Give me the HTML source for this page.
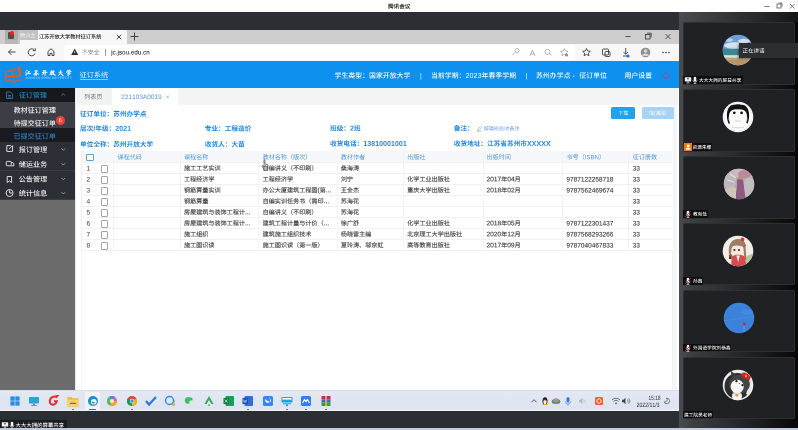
<!DOCTYPE html><html><head><meta charset="utf-8"><title>腾讯会议</title><style>
*{margin:0;padding:0;box-sizing:content-box}
html,body{width:798px;height:430px;overflow:hidden;background:#fff}
body{position:relative;font-family:"Liberation Sans",sans-serif}
div,svg{position:absolute}
.txt{left:0;top:0;width:798px;height:430px;color:transparent;overflow:hidden}.txt span{position:absolute;white-space:nowrap;line-height:1}

</style></head><body>
<div style="left:0px;top:0px;width:798px;height:12px;background:#ffffff;"></div>
<svg style="left:760px;top:0px" width="38" height="12"><g stroke="#555" stroke-width="0.8" fill="none"><path d="M4.5 6.5h5"/><rect x="17" y="4" width="4" height="4"/><path d="M18.5 3h3.5v3.5"/><path d="M30 4l4.5 4.5M34.5 4L30 8.5"/></g></svg>
<div style="left:0px;top:12px;width:679px;height:17.6px;background:#2b2e32;"></div>
<div style="left:0px;top:29.5px;width:679px;height:14px;background:#cdcdcd;"></div>
<div style="left:18px;top:30px;width:109px;height:13.5px;background:#f7f7f7;border-radius:2px 2px 0 0"></div>
<div style="left:5px;top:29.5px;width:33px;height:10.5px;background:rgba(150,150,150,0.55);"></div>
<div style="left:5px;top:40px;width:15px;height:3.5px;background:rgba(170,170,170,0.6);"></div>
<svg style="left:114px;top:32px" width="10" height="10"><path d="M2.8 2.8l4.4 4.4M7.2 2.8l-4.4 4.4" stroke="#333" stroke-width="0.9"/></svg>
<svg style="left:129px;top:31px" width="11" height="11"><path d="M5.5 1.5v8M1.5 5.5h8" stroke="#333" stroke-width="0.9"/></svg>
<div style="left:8px;top:32px;width:6px;height:7px;background:#5a4b4b;border-radius:1px"></div>
<div style="left:10px;top:31px;width:4px;height:4px;background:#f22;border-radius:50%"></div>
<svg style="left:620px;top:30px" width="58" height="13"><g stroke="#333" stroke-width="0.8" fill="none"><path d="M5.5 6.5h5"/><rect x="25.5" y="4.5" width="4.5" height="4.5"/><path d="M27 3.2h4.2v4.2"/><path d="M45.5 4l5 5M50.5 4l-5 5"/></g></svg>
<div style="left:0px;top:43.5px;width:679px;height:17.5px;background:#f7f7f7;"></div>
<div style="left:64px;top:44.5px;width:511px;height:15.5px;background:#ffffff;border-radius:3px"></div>
<svg style="left:0;top:43px" width="160" height="18"><g stroke="#333" stroke-width="0.9" fill="none"><path d="M8.5 9h7M8.5 9l3-3M8.5 9l3 3"/><path d="M34.5 7.2A3.5 3.5 0 1 0 35 10.5"/><path d="M35.3 5.3v2.4h-2.4"/><path d="M48 12.5v-4l3-2.8 3 2.8v4h-2v-2.2h-2v2.2z"/></g><path d="M74.7 5.5l3.6 6.5h-7.2z" fill="#333"/><path d="M74.7 8v2" stroke="#fff" stroke-width="0.7"/></svg>
<div style="left:105px;top:48.5px;width:0.7px;height:7px;background:#999;"></div>
<svg style="left:505px;top:44px" width="175" height="17"><g stroke="#a2a2a2" stroke-width="0.8" fill="none"><circle cx="12" cy="6.5" r="2"/><path d="M10.6 8l-3 3"/><path d="M25 12l2.5-6 2.5 6M26 10h3"/><circle cx="42.5" cy="7.8" r="2.5"/><path d="M44.3 9.6l2 2"/><path d="M59.3 4.5l1.2 2.5 2.6.3-1.9 1.8.5 2.6-2.4-1.3-2.4 1.3.5-2.6-1.9-1.8 2.6-.3z"/></g><g stroke="#333" stroke-width="0.85" fill="none"><path d="M81.5 4.5l1.2 2.5 2.6.3-1.9 1.8.5 2.6-2.4-1.3-2.4 1.3.5-2.6-1.9-1.8 2.6-.3z"/><rect x="97.5" y="5" width="6" height="6" rx="1"/><rect x="100" y="7.5" width="5" height="5" rx="1"/><path d="M120.7 4v6M118.5 8l2.2 2.2 2.2-2.2M118 12h4"/></g><circle cx="123" cy="12" r="1.6" fill="#1a73e8"/><circle cx="158" cy="8.5" r="0.75" fill="#222"/><circle cx="161" cy="8.5" r="0.75" fill="#222"/><circle cx="164" cy="8.5" r="0.75" fill="#222"/><circle cx="140.5" cy="8.5" r="4.8" fill="#8f8f8f"/><circle cx="140.5" cy="7" r="1.8" fill="#d6d6d6"/><path d="M137.2 12a3.3 2.6 0 0 1 6.6 0" fill="#d6d6d6"/><circle cx="61.5" cy="11" r="1.5" fill="#8a8a8a"/></svg>
<div style="left:0px;top:61px;width:679px;height:26.7px;background:#0d90ee;"></div>
<div style="left:79.5px;top:79.3px;width:28.8px;height:0.6px;background:rgba(255,255,255,0.5);"></div>
<svg style="left:659.9px;top:69px" width="12" height="12"><g stroke="#cf3560" stroke-width="0.8" fill="none"><path d="M4.4 4.3A2.8 2.8 0 1 0 7.6 4.3"/><path d="M6 2.6v2.6"/></g></svg>
<svg style="left:2px;top:63px" width="24" height="24" viewBox="0 0 24 24"><g fill="none" stroke="#f05a1e" stroke-width="1.25" stroke-linecap="round" stroke-linejoin="round"><path d="M12.4 5.2c.9.3 1.5 1 1.3 1.9"/><path d="M16.9 3.4c-1.6 2-.4 4 .4 6 .6 2-.3 3.6-1.8 4H4v-4.9c2.2-.6 5-.7 7.2-.4"/><path d="M10.6 9.3c-.6 1.2-.1 2.3 1.5 2.6"/><path d="M3.4 17c.8 1.8 2.4 1.6 3.6.3 1.4-1.6 3.1.4 4.5 2.1 1.2-1 3.2-2.3 6.6-2.4"/><path d="M3.8 13.6c-.6 1.1-.5 2.3-.4 3.2"/></g><path d="M16.8 3c2.6 3 3.2 7.5 1 10.6l-1.4-.4c1.4-2.8.8-6.2.4-10.2z" fill="#f05a1e"/></svg>
<div style="left:0px;top:87.7px;width:75px;height:14px;background:#17181c;"></div>
<div style="left:0px;top:101.6px;width:75px;height:26.8px;background:#3c3e45;"></div>
<div style="left:0px;top:128.4px;width:75px;height:13.2px;background:#1a1b20;"></div>
<div style="left:0px;top:141.6px;width:75px;height:14.6px;background:#2c2f35;"></div>
<div style="left:0px;top:155.7px;width:75px;height:0.7px;background:#3a3d43;"></div>
<div style="left:0px;top:156.2px;width:75px;height:14.6px;background:#2c2f35;"></div>
<div style="left:0px;top:170.29999999999998px;width:75px;height:0.7px;background:#3a3d43;"></div>
<div style="left:0px;top:170.8px;width:75px;height:14.6px;background:#2c2f35;"></div>
<div style="left:0px;top:184.9px;width:75px;height:0.7px;background:#3a3d43;"></div>
<div style="left:0px;top:185.3px;width:75px;height:14.6px;background:#2c2f35;"></div>
<div style="left:0px;top:199.4px;width:75px;height:0.7px;background:#3a3d43;"></div>
<div style="left:0px;top:199.9px;width:75px;height:190.4px;background:#6b6b6b;"></div>
<div style="left:56px;top:115.6px;width:9px;height:9px;border-radius:50%;background:#ee4036"></div>
<svg style="left:0;top:86px" width="75" height="114"><g stroke="#2a7db5" stroke-width="0.9" fill="none"><path d="M6.5 6h4l2.2 2.2v4.3h-6.2z"/><path d="M8 9.5h3M8 11h3"/></g><path d="M61.5 9.5l1.8-1.8 1.8 1.8" stroke="#8a9099" stroke-width="0.7" fill="none"/><g stroke="#e6e6e6" stroke-width="0.95" fill="none"><path d="M12.6 60v5.4h-5.8v-5.8h4"/><path d="M9.2 63l3.6-3.6"/><rect x="6.3" y="75.4" width="5" height="4.4" rx="0.9"/><path d="M11.3 76.6h1.6l1 1.3v1.9h-2.6"/><path d="M7.2 90.5v6l2.2-1.6 2.2 1.6v-6z"/><circle cx="9.6" cy="107" r="3.5"/><path d="M9.6 104v3h2.7"/></g><path d="M61.5 62.5l1.8 1.8 1.8-1.8M61.5 77.3l1.8 1.8 1.8-1.8M61.5 92l1.8 1.8 1.8-1.8M61.5 106.2l1.8 1.8 1.8-1.8" stroke="#c8c8c8" stroke-width="0.7" fill="none"/></svg>
<div style="left:75px;top:87.7px;width:603px;height:302.6px;background:#ffffff;"></div>
<div style="left:75px;top:87.7px;width:603px;height:17.7px;background:#f3f4f6;"></div>
<div style="left:75px;top:87.7px;width:2.3px;height:17.7px;background:#fbfbfc;"></div>
<div style="left:77.3px;top:88px;width:34.2px;height:17.2px;background:#f1f2f4;"></div>
<div style="left:111.5px;top:88px;width:66.8px;height:17.4px;background:#ffffff;"></div>
<div style="left:75px;top:87.7px;width:0.8px;height:302.6px;background:#e6e8ec;"></div>
<div style="left:672.6px;top:105.4px;width:4.4px;height:285px;background:#f5f6f8;"></div>
<svg style="left:475.5px;top:124.5px" width="7" height="7"><path d="M1.5 5.5l.4-1.5 2.5-2.5 1.1 1.1-2.5 2.5zM1.2 6.3h4.5" stroke="#6a9fe0" stroke-width="0.55" fill="none"/></svg>
<div style="left:610.5px;top:107px;width:24.6px;height:12px;background:#1fa2f0;border-radius:1.5px"></div>
<div style="left:641.6px;top:107px;width:32.1px;height:12px;background:#a6d2f6;border-radius:1.5px"></div>
<div style="left:80.8px;top:151.3px;width:591.2px;height:11.2px;background:#f5f7fa;"></div>
<div style="left:112.5px;top:151.3px;width:0.6px;height:99.2px;background:#f2f3f6;"></div>
<div style="left:180.2px;top:151.3px;width:0.6px;height:99.2px;background:#f2f3f6;"></div>
<div style="left:258.2px;top:151.3px;width:0.6px;height:99.2px;background:#f2f3f6;"></div>
<div style="left:337px;top:151.3px;width:0.6px;height:99.2px;background:#f2f3f6;"></div>
<div style="left:402.8px;top:151.3px;width:0.6px;height:99.2px;background:#f2f3f6;"></div>
<div style="left:482.8px;top:151.3px;width:0.6px;height:99.2px;background:#f2f3f6;"></div>
<div style="left:562.4px;top:151.3px;width:0.6px;height:99.2px;background:#f2f3f6;"></div>
<div style="left:628.3px;top:151.3px;width:0.6px;height:99.2px;background:#f2f3f6;"></div>
<div style="left:80.8px;top:151.3px;width:0.6px;height:99.2px;background:#eef0f4;"></div>
<div style="left:80.8px;top:162.2px;width:591.2px;height:0.6px;background:#eff1f4;"></div>
<div style="left:80.8px;top:173.2px;width:591.2px;height:0.6px;background:#eff1f4;"></div>
<div style="left:80.8px;top:184.2px;width:591.2px;height:0.6px;background:#eff1f4;"></div>
<div style="left:80.8px;top:195.2px;width:591.2px;height:0.6px;background:#eff1f4;"></div>
<div style="left:80.8px;top:206.2px;width:591.2px;height:0.6px;background:#eff1f4;"></div>
<div style="left:80.8px;top:217.2px;width:591.2px;height:0.6px;background:#eff1f4;"></div>
<div style="left:80.8px;top:228.2px;width:591.2px;height:0.6px;background:#eff1f4;"></div>
<div style="left:80.8px;top:239.2px;width:591.2px;height:0.6px;background:#eff1f4;"></div>
<div style="left:80.8px;top:250.2px;width:591.2px;height:0.6px;background:#eff1f4;"></div>
<div style="left:86.2px;top:153.9px;width:5.6px;height:5.6px;border:1px solid #5a9fd6;border-radius:1px;background:#fff"></div>
<div style="left:100.6px;top:164.90px;width:5.8px;height:5.8px;border:0.75px solid #a4a4a4;border-radius:1px"></div>
<div style="left:100.6px;top:175.90px;width:5.8px;height:5.8px;border:0.75px solid #a4a4a4;border-radius:1px"></div>
<div style="left:100.6px;top:186.90px;width:5.8px;height:5.8px;border:0.75px solid #a4a4a4;border-radius:1px"></div>
<div style="left:100.6px;top:197.90px;width:5.8px;height:5.8px;border:0.75px solid #a4a4a4;border-radius:1px"></div>
<div style="left:100.6px;top:208.90px;width:5.8px;height:5.8px;border:0.75px solid #a4a4a4;border-radius:1px"></div>
<div style="left:100.6px;top:219.90px;width:5.8px;height:5.8px;border:0.75px solid #a4a4a4;border-radius:1px"></div>
<div style="left:100.6px;top:230.90px;width:5.8px;height:5.8px;border:0.75px solid #a4a4a4;border-radius:1px"></div>
<div style="left:100.6px;top:241.90px;width:5.8px;height:5.8px;border:0.75px solid #a4a4a4;border-radius:1px"></div>
<div style="left:80.8px;top:250px;width:0.6px;height:140px;background:#f4f5f7;"></div>
<div style="left:672px;top:250px;width:0.6px;height:140px;background:#f1f2f4;"></div>
<svg style="left:261px;top:158.5px" width="10" height="12" viewBox="0 0 10 12"><path d="M3 1.2c0-.6.9-.6.9 0v4c.2-.5 1-.5 1 0v.4c.2-.5 1-.5 1 0v.4c.2-.5 1-.4 1 .1v2.8c0 1.3-.7 2.3-1.6 2.3H4.2c-.7 0-1-.4-1.4-1L1 7.2c-.3-.5.3-1 .8-.6L3 7.8z" fill="#fff" stroke="#333" stroke-width="0.6"/></svg>
<div style="left:0px;top:390px;width:679px;height:21.4px;background:linear-gradient(#e3e8f4,#dde3f0 85%,#eef1f8);"></div>
<div style="left:0px;top:390px;width:679px;height:0.5px;background:#d8dce6;"></div>
<div style="left:85.22px;top:392px;width:15px;height:18px;background:rgba(255,255,255,0.55);border-radius:2px"></div>
<svg style="left:9.00px;top:395.20px" width="12" height="12" viewBox="-6.0 -6.0 12 12"><g fill="#2a8ee6"><rect x="-4.6" y="-4.6" width="4.3" height="4.3"/><rect x="0.3" y="-4.6" width="4.3" height="4.3"/><rect x="-4.6" y="0.3" width="4.3" height="4.3"/><rect x="0.3" y="0.3" width="4.3" height="4.3"/></g></svg>
<svg style="left:28.43px;top:395.20px" width="12" height="12" viewBox="-6.0 -6.0 12 12"><rect x="-5" y="-4" width="10" height="6.5" rx="0.6" fill="#2aa3d8"/><rect x="-1" y="2.5" width="2" height="1.5" fill="#6a8aa0"/><rect x="-2.8" y="4" width="5.6" height="0.9" fill="#6a8aa0"/></svg>
<svg style="left:47.86px;top:395.20px" width="12" height="12" viewBox="-6.0 -6.0 12 12"><path d="M3.5-3.5C2-5-3-5-4-1c-1 4 2 5 4 4.5 1.5-.4 2.5-2 2.8-3.3H0" fill="none" stroke="#e0322a" stroke-width="2"/><path d="M2-5l3-1" stroke="#e0322a" stroke-width="1.5"/></svg>
<svg style="left:67.29px;top:395.20px" width="12" height="12" viewBox="-6.0 -6.0 12 12"><path d="M-5.5-4h4l1 1.2h6v8.3h-11z" fill="#f2b83a"/><rect x="-5.5" y="-1.5" width="11" height="6.5" fill="#fcd25a"/><rect x="-3" y="1.8" width="6" height="1.2" fill="#2a7bd6"/></svg>
<div style="left:72.28999999999999px;top:409px;width:2px;height:1px;background:#777;"></div>
<svg style="left:86.72px;top:395.20px" width="12" height="12" viewBox="-6.0 -6.0 12 12"><circle r="5" fill="#1f8ad8"/><circle cx="0.8" cy="0.8" r="2.8" fill="#fff"/><path d="M-5 0a5 5 0 0 0 9 3c-3 2-7 1-8-2z" fill="#2cc2a0"/><path d="M-1.5 0.5a2.2 2.2 0 0 0 4 1" fill="#1f8ad8"/></svg>
<div style="left:89.22px;top:408.8px;width:7px;height:1.3px;background:#1f74d0;border-radius:1px"></div>
<svg style="left:106.15px;top:395.20px" width="12" height="12" viewBox="-6.0 -6.0 12 12"><circle r="5" fill="#f25a9a"/><path d="M0 0L5 0A5 5 0 0 1 -2.5 4.33z" fill="#f5a623"/><path d="M0 0L-2.5 4.33A5 5 0 0 1 -2.5 -4.33z" fill="#4cc35a"/><path d="M0 0L-2.5 -4.33A5 5 0 0 1 2.5 -4.33z" fill="#3a8ef0"/><circle r="2" fill="#fde8f0"/></svg>
<svg style="left:125.58px;top:395.20px" width="12" height="12" viewBox="-6.0 -6.0 12 12"><circle r="5" fill="#db4437"/><path d="M0 0L-4.33 -2.5A5 5 0 0 0 0 5z" fill="#0f9d58"/><path d="M0 0L0 5A5 5 0 0 0 4.33 -2.5z" fill="#f4b400"/><circle r="2.2" fill="#fff"/><circle r="1.7" fill="#4285f4"/></svg>
<div style="left:130.57999999999998px;top:409px;width:2px;height:1px;background:#777;"></div>
<svg style="left:145.01px;top:395.20px" width="12" height="12" viewBox="-6.0 -6.0 12 12"><path d="M-5 0l3 3.5 7-7.5" fill="none" stroke="#2b78e4" stroke-width="2.2"/></svg>
<svg style="left:164.44px;top:395.20px" width="12" height="12" viewBox="-6.0 -6.0 12 12"><circle cx="-0.5" cy="-0.5" r="4" fill="none" stroke="#2b8fe8" stroke-width="1.4"/><circle cx="3.5" cy="3.5" r="1.5" fill="#f0a028"/><circle cx="4" cy="0.5" r="1" fill="#3cc060"/></svg>
<svg style="left:183.87px;top:395.20px" width="12" height="12" viewBox="-6.0 -6.0 12 12"><ellipse cx="-1.2" cy="-0.6" rx="4" ry="3.4" fill="#3ec06a"/><ellipse cx="2.2" cy="1.8" rx="3" ry="2.5" fill="#dfe8e0"/></svg>
<svg style="left:203.30px;top:395.20px" width="12" height="12" viewBox="-6.0 -6.0 12 12"><path d="M0-5l4.5 8h-9z" fill="#39a85a"/><path d="M0-1l2.5 4.5h-5z" fill="#e9f5ec"/><rect x="-0.6" y="3" width="1.2" height="2" fill="#39a85a"/></svg>
<svg style="left:222.73px;top:395.20px" width="12" height="12" viewBox="-6.0 -6.0 12 12"><rect x="-3.5" y="-5" width="8.5" height="10" rx="1" fill="#1f9a57"/><rect x="-5.5" y="-3" width="5.5" height="6" rx="0.6" fill="#107c41"/><path d="M-4.2-1.5l2.8 3M-1.4-1.5l-2.8 3" stroke="#fff" stroke-width="0.7"/></svg>
<svg style="left:242.16px;top:395.20px" width="12" height="12" viewBox="-6.0 -6.0 12 12"><rect x="-3.5" y="-5" width="8.5" height="10" rx="1" fill="#2f6fd4"/><rect x="-5.5" y="-3" width="5.5" height="6" rx="0.6" fill="#1a4fae"/><path d="M-4.6-1.5l.8 3 .9-2.2.9 2.2.8-3" stroke="#fff" stroke-width="0.5" fill="none"/></svg>
<div style="left:247.16px;top:409px;width:2px;height:1px;background:#777;"></div>
<svg style="left:261.59px;top:395.20px" width="12" height="12" viewBox="-6.0 -6.0 12 12"><rect x="-5" y="-5" width="10" height="10" rx="1.6" fill="#3a86f0"/><path d="M-3-2c2 2 4 3 6 2.5 0-2-1-3.5-2-4.5 1.5 2 1.5 4 0 5.5-1.5 1-4 0-4-3.5z" fill="#fff"/></svg>
<svg style="left:281.02px;top:395.20px" width="12" height="12" viewBox="-6.0 -6.0 12 12"><rect x="-5.5" y="-4" width="11" height="5.5" rx="0.8" fill="#1fa3e0"/><rect x="-4.5" y="-3" width="9" height="1.6" fill="#fff"/><rect x="-4" y="2.3" width="8" height="1" fill="#1fa3e0"/><rect x="-1" y="3.3" width="2" height="1.8" fill="#1fa3e0"/></svg>
<div style="left:286.02px;top:409px;width:2px;height:1px;background:#777;"></div>
<svg style="left:300.45px;top:395.20px" width="12" height="12" viewBox="-6.0 -6.0 12 12"><rect x="-5" y="-5" width="10" height="10" rx="1.6" fill="#2e7ff0"/><path d="M-3.5 2l2-3.5 1.5 2 1.5-2 2 3.5" fill="none" stroke="#fff" stroke-width="1.2"/></svg>
<div style="left:305.45px;top:409px;width:2px;height:1px;background:#777;"></div>
<svg style="left:319.88px;top:395.20px" width="12" height="12" viewBox="-6.0 -6.0 12 12"><rect x="-4.5" y="-5" width="9" height="3.4" fill="#c02a6a"/><rect x="-4.5" y="-1.6" width="9" height="3.2" fill="#3a6ad0"/><rect x="-4.5" y="1.6" width="9" height="3.4" fill="#3a9a40"/><rect x="-1" y="-5" width="2" height="10" fill="#d8a838"/></svg>
<div style="left:324.88px;top:409px;width:2px;height:1px;background:#777;"></div>
<svg style="left:528.00px;top:395.20px" width="12" height="12" viewBox="-6.0 -6.0 12 12"><path d="M-2.5 1.2L0-1.3l2.5 2.5" fill="none" stroke="#333" stroke-width="0.8"/></svg>
<svg style="left:538.60px;top:395.20px" width="12" height="12" viewBox="-6.0 -6.0 12 12"><ellipse cy="0" rx="2.5" ry="3.8" fill="#222"/><ellipse cy="1" rx="1.6" ry="2.2" fill="#fff"/><path d="M-2.5 3.5h5" stroke="#e8a020" stroke-width="1"/><path d="M-1.5-1h3" stroke="#e02020" stroke-width="0.8"/></svg>
<svg style="left:549.70px;top:395.20px" width="12" height="12" viewBox="-6.0 -6.0 12 12"><ellipse cx="0" cy="0.5" rx="4.3" ry="2.5" fill="#777"/><ellipse cx="0" cy="-0.8" rx="2.8" ry="2" fill="#999"/></svg>
<svg style="left:561.50px;top:395.20px" width="12" height="12" viewBox="-6.0 -6.0 12 12"><rect x="-1.5" y="-4" width="3" height="5.5" rx="1.5" fill="#3a7ae0"/><path d="M-2.5 0.5a2.5 2.5 0 0 0 5 0M0 3v2" stroke="#3a7ae0" stroke-width="0.6" fill="none"/></svg>
<svg style="left:576.00px;top:395.20px" width="12" height="12" viewBox="-6.0 -6.0 12 12"><path d="M-3-1.2h1.5l2-2v6.4l-2-2H-3z" fill="#b8bcc2"/><path d="M1.5-1.5l2 3M3.5-1.5l-2 3" stroke="#b8bcc2" stroke-width="0.6"/></svg>
<svg style="left:593.00px;top:395.20px" width="12" height="12" viewBox="-6.0 -6.0 12 12"><rect x="-4" y="-4" width="8" height="8" rx="1.5" fill="#f05a28"/><circle r="2.2" fill="none" stroke="#fff" stroke-width="0.9"/></svg>
<svg style="left:609.80px;top:395.20px" width="12" height="12" viewBox="-6.0 -6.0 12 12"><path d="M-4-1a5.5 5.5 0 0 1 8 0M-2.6 0.6a3.4 3.4 0 0 1 5.2 0" fill="none" stroke="#555" stroke-width="0.8"/><circle cy="2.3" r="0.9" fill="#555"/></svg>
<svg style="left:620.20px;top:395.20px" width="12" height="12" viewBox="-6.0 -6.0 12 12"><path d="M-4-1.2h1.5l2-2v6.4l-2-2H-4z" fill="#444"/><path d="M1.3-1.5a2 2 0 0 1 0 3M2.6-2.8a4 4 0 0 1 0 5.6" fill="none" stroke="#444" stroke-width="0.6"/></svg>
<svg style="left:661.00px;top:395.20px" width="12" height="12" viewBox="-6.0 -6.0 12 12"><path d="M-0.5-2.8a2.8 2.8 0 1 1-2.4 3.6 2.2 2.2 0 0 0 2.4-3.6z" fill="none" stroke="#444" stroke-width="0.65"/></svg>
<div style="left:0px;top:411.4px;width:679px;height:18.6px;background:#2b2f33;"></div>
<div style="left:0px;top:419.8px;width:66.5px;height:10.2px;background:#1b1c1f;"></div>
<svg style="left:0.5px;top:420.5px" width="8" height="8" viewBox="0 0 8 8"><rect x="0.8" y="1.2" width="6.4" height="4.2" rx="0.5" fill="#f2f2f2"/><path d="M4 5.4v1.4M2.5 7h3" stroke="#f2f2f2" stroke-width="0.7"/><path d="M4 2.2v2M3 3l1-1 1 1" stroke="#222" stroke-width="0.5" fill="none"/></svg>
<svg style="left:7.5px;top:420.5px" width="8" height="8" viewBox="0 0 8 8"><path d="M4 0.8a1.3 1.3 0 0 1 1.3 1.3v2.2a1.3 1.3 0 0 1-2.6 0v-2.2A1.3 1.3 0 0 1 4 0.8z" fill="#f2f2f2"/><path d="M2 4.2a2 2 0 0 0 4 0M4 6.3v1.2M2.6 7.5h2.8" stroke="#f2f2f2" stroke-width="0.6" fill="none"/></svg>
<div style="left:679px;top:12px;width:119px;height:418px;background:linear-gradient(90deg,#4a4c4f 0,#46484b 4px,#3c3d40 14px,#2a2b2d 45%,#141415 80%,#070707 100%);"></div>
<div style="left:679px;top:12px;width:119px;height:10px;background:linear-gradient(90deg,#4a4d50 0,#3a3c3f 30%,#151617 100%);"></div>
<div style="left:683.2px;top:22px;width:111.8px;height:62.8px;background:#202124;border-radius:2.5px;box-shadow:inset 0 0 0 0.7px #35363a"></div>
<div style="left:683.2px;top:88.9px;width:111.8px;height:62.8px;background:#202124;border-radius:2.5px;box-shadow:inset 0 0 0 0.7px #35363a"></div>
<div style="left:683.2px;top:155.8px;width:111.8px;height:62.8px;background:#202124;border-radius:2.5px;box-shadow:inset 0 0 0 0.7px #35363a"></div>
<div style="left:683.2px;top:222.7px;width:111.8px;height:62.8px;background:#202124;border-radius:2.5px;box-shadow:inset 0 0 0 0.7px #35363a"></div>
<div style="left:683.2px;top:289.6px;width:111.8px;height:62.8px;background:#202124;border-radius:2.5px;box-shadow:inset 0 0 0 0.7px #35363a"></div>
<div style="left:683.2px;top:356.5px;width:111.8px;height:62.8px;background:#202124;border-radius:2.5px;box-shadow:inset 0 0 0 0.7px #35363a"></div>
<svg style="left:721.8px;top:34.4px" width="32" height="32" viewBox="-16 -16 32 32"><defs><clipPath id="c0"><circle r="15.3"/></clipPath></defs><g clip-path="url(#c0)"><rect x="-16" y="-16" width="32" height="32" fill="#6d9fd4"/><ellipse cx="-3" cy="-4.5" rx="11" ry="3.2" fill="#dfe8f1" opacity="0.9"/><ellipse cx="6" cy="-9" rx="6" ry="2.2" fill="#e9eff5" opacity="0.8"/><ellipse cx="-9" cy="-10" rx="4" ry="1.8" fill="#d6e2ee" opacity="0.7"/><ellipse cx="2" cy="-2" rx="12" ry="1.4" fill="#c5d6e5" opacity="0.9"/><rect x="-16" y="-1.2" width="32" height="6.6" fill="#3b878c"/><rect x="-16" y="5.2" width="32" height="2.6" fill="#d5e2df"/><rect x="-16" y="7.8" width="32" height="9" fill="#c3a176"/><rect x="-16" y="10" width="32" height="7" fill="#b89468"/></g></svg>
<svg style="left:722.4px;top:101.30000000000001px" width="32" height="32" viewBox="-16 -16 32 32"><defs><clipPath id="c1"><circle r="15.3"/></clipPath></defs><g clip-path="url(#c1)"><rect x="-16" y="-16" width="32" height="32" fill="#fbfbfb"/><circle r="14.3" fill="none" stroke="#d8d8d8" stroke-width="0.4"/><path d="M-9.3 6.8C-11.6 2-11.8-5.5-9.3-9.3-7-12.4-3.3-12.6 0-12.3 3.3-12.6 7-12.2 9-9.6 11.8-6 11.7 2 9.6 6.5L8.3 6C9.3 2.5 9.4-1.5 8.3-4.3 6.8-7.4 3.3-7.9 0-7.6-3.3-7.9-6.8-7.4-8.3-4.3-9.5-1.5-9.5 2.5-8 6.4z" fill="#111"/><path d="M-2 -12.4c1 1.5 3 1.5 4 0" fill="#111"/><circle cx="-3.7" cy="-4.2" r="1.35" fill="#111"/><circle cx="3.6" cy="-4.1" r="1.35" fill="#111"/><path d="M-2.8 4.1h5.6" stroke="#bdbdbd" stroke-width="0.7"/><path d="M0-2.5v4" stroke="#e2e2e2" stroke-width="0.5"/><path d="M-6 10c3 1 9 1 12 0" stroke="#cfcfcf" stroke-width="0.8" fill="none"/><path d="M-8.5 0c-1 1-1 3 0 4M8.5 0c1 1 1 3 0 4" stroke="#cfcfcf" stroke-width="0.5" fill="none"/></g></svg>
<svg style="left:722.7px;top:168.20000000000002px" width="32" height="32" viewBox="-16 -16 32 32"><defs><clipPath id="c2"><circle r="15.3"/></clipPath></defs><g clip-path="url(#c2)"><rect x="-16" y="-16" width="32" height="32" fill="#b3a9ad"/><rect x="-16" y="-16" width="32" height="9" fill="#c9b9c0"/><ellipse cx="-9" cy="-2" rx="6" ry="9" fill="#bdb8bb"/><ellipse cx="-7" cy="9" rx="8" ry="6" fill="#cfc4b8"/><ellipse cx="10" cy="3" rx="6" ry="10" fill="#c2bcbe"/><ellipse cx="6" cy="-10" rx="7" ry="4" fill="#b98a9e"/><path d="M-2-4c1-2 5-2 6 0l1 7 1 8v6h-9v-8l1-7z" fill="#8e5a84"/><circle cx="1.5" cy="-6.5" r="2.2" fill="#b89080"/><path d="M-9-10l6 4M-12-4l7 2" stroke="#e8e0e2" stroke-width="1.2"/></g></svg>
<svg style="left:722.3px;top:235.1px" width="32" height="32" viewBox="-16 -16 32 32"><defs><clipPath id="c3"><circle r="15.3"/></clipPath></defs><g clip-path="url(#c3)"><rect x="-16" y="-16" width="32" height="32" fill="#f2eee6"/><path d="M6 16l3-11 7-3v14z" fill="#b5c698"/><path d="M-9 3C-10.5-7-5.5-12.5 0.5-12 5-11.6 7.5-9 7.5-5.5L8.5 9 6.5 9 5.3-3.5C3-6.5-3-6.5-6-3.5L-7 3z" fill="#9c7d68"/><ellipse cx="-1.5" cy="-1" rx="5" ry="5.6" fill="#f8e7da"/><path d="M-6.5-4.5c2-3.5 8-3.5 10 0-3-1.5-7-1.5-10 0z" fill="#9c7d68"/><circle cx="-3.6" cy="-1" r="1.1" fill="#3a2a22"/><circle cx="1" cy="-1" r="1.1" fill="#3a2a22"/><path d="M-7 16l.8-10.5c3-2.5 10-2.5 13 0L8.5 16z" fill="#d74c4c"/><path d="M-1.6 4.5h3.4l-1.7 6.5z" fill="#f4f4f4"/><circle cx="-7.5" cy="4.5" r="1.6" fill="#c23838"/><rect x="-9" y="5.5" width="2.5" height="2.5" fill="#333"/><circle cx="4.5" cy="-11.5" r="1.9" fill="#d83a3a"/><circle cx="6.6" cy="-5.5" r="1.1" fill="#d83a3a"/></g></svg>
<svg style="left:722.5px;top:302.0px" width="32" height="32" viewBox="-16 -16 32 32"><defs><clipPath id="c4"><circle r="15.3"/></clipPath></defs><g clip-path="url(#c4)"><rect x="-16" y="-16" width="32" height="32" fill="#3b82db"/><path d="M-16 3l32-5" stroke="#6fa6e8" stroke-width="0.3"/><path d="M5 6v10" stroke="#9cc2ee" stroke-width="0.4"/><circle cx="5.3" cy="6" r="1.3" fill="#e01818"/><ellipse cx="8" cy="-6" rx="6" ry="3" fill="#4a8de0" opacity="0.6"/></g></svg>
<svg style="left:722.4px;top:368.9px" width="32" height="32" viewBox="-16 -16 32 32"><defs><clipPath id="c5"><circle r="15.3"/></clipPath></defs><g clip-path="url(#c5)"><rect x="-16" y="-16" width="32" height="32" fill="#ececec"/><circle cx="-0.5" cy="1" r="13" fill="#2e2e2e"/><path d="M11 -6a13 13 0 0 1 -1 16l-2-1c2-5 2-10 0-14z" fill="#e8e8e8"/><path d="M-6-7l-1.5-7.5 5.5 4.5zM7-8l6-1-2.5 6z" fill="#3c3c3c"/><ellipse cx="1.5" cy="-1" rx="10.5" ry="9.5" fill="#454545"/><ellipse cx="-0.8" cy="1.5" rx="6.6" ry="6.8" fill="#f7f7f7"/><ellipse cx="-1" cy="11" rx="5" ry="5" fill="#f4f4f4"/><ellipse cx="8" cy="-9" rx="4.8" ry="2.6" transform="rotate(30 8 -9)" fill="#d42626"/><circle cx="8" cy="-9" r="1" fill="#f0c040"/><circle cx="-1.5" cy="-3.8" r="1.1" fill="#111"/><circle cx="4.5" cy="0.2" r="1.1" fill="#111"/><circle cx="1.2" cy="-1.5" r="0.5" fill="#333"/><path d="M-6 8c3 1.5 7 1.5 9 0" stroke="#d06060" stroke-width="0.5" fill="none"/><circle cx="-1.2" cy="10.3" r="1.4" fill="#e0a030"/></g></svg>
<div style="left:739px;top:43px;width:59px;height:15px;background:#2c2e31;box-shadow:-1px 1px 2px rgba(0,0,0,0.4)"></div>
<div style="left:683.2px;top:76.1px;width:59.5px;height:7.9px;background:#0e0e0f;"></div>
<svg style="left:684px;top:76.2px" width="8" height="8" viewBox="0 0 8 8"><rect x="0.8" y="1.2" width="6.4" height="4.2" rx="0.5" fill="#f2f2f2"/><path d="M4 5.4v1.4M2.5 7h3" stroke="#f2f2f2" stroke-width="0.7"/><path d="M4 2.2v2M3 3l1-1 1 1" stroke="#222" stroke-width="0.5" fill="none"/></svg>
<svg style="left:691px;top:76.2px" width="8" height="8" viewBox="0 0 8 8"><path d="M4 0.8a1.3 1.3 0 0 1 1.3 1.3v2.2a1.3 1.3 0 0 1-2.6 0v-2.2A1.3 1.3 0 0 1 4 0.8z" fill="#f2f2f2"/><path d="M2 4.2a2 2 0 0 0 4 0M4 6.3v1.2M2.6 7.5h2.8" stroke="#f2f2f2" stroke-width="0.6" fill="none"/></svg>
<div style="left:683.6px;top:143.0px;width:8.4px;height:7.8px;background:#f07a18;"></div>
<svg style="left:683.6px;top:143.0px" width="8.4" height="7.8" viewBox="0 0 8.4 7.8"><circle cx="4.2" cy="2.9" r="1.4" fill="#fff"/><path d="M1.8 6.8a2.4 2.2 0 0 1 4.8 0z" fill="#fff"/></svg>
<div style="left:692px;top:143.0px;width:20px;height:7.8px;background:#0e0e0f;"></div>
<div style="left:683.2px;top:209.9px;width:24.7px;height:7.8px;background:#0e0e0f;"></div>
<svg style="left:684px;top:209.8px" width="8" height="8" viewBox="0 0 8 8"><path d="M4 0.8a1.3 1.3 0 0 1 1.3 1.3v2.2a1.3 1.3 0 0 1-2.6 0v-2.2A1.3 1.3 0 0 1 4 0.8z" fill="#f2f2f2"/><path d="M2 4.2a2 2 0 0 0 4 0M4 6.3v1.2M2.6 7.5h2.8" stroke="#f2f2f2" stroke-width="0.6" fill="none"/><path d="M1 7L7 1" stroke="#e02a2a" stroke-width="0.8"/></svg>
<div style="left:683.2px;top:276.8px;width:20px;height:7.8px;background:#0e0e0f;"></div>
<svg style="left:684px;top:276.7px" width="8" height="8" viewBox="0 0 8 8"><path d="M4 0.8a1.3 1.3 0 0 1 1.3 1.3v2.2a1.3 1.3 0 0 1-2.6 0v-2.2A1.3 1.3 0 0 1 4 0.8z" fill="#f2f2f2"/><path d="M2 4.2a2 2 0 0 0 4 0M4 6.3v1.2M2.6 7.5h2.8" stroke="#f2f2f2" stroke-width="0.6" fill="none"/><path d="M1 7L7 1" stroke="#e02a2a" stroke-width="0.8"/></svg>
<div style="left:683.2px;top:343.70000000000005px;width:47.4px;height:7.8px;background:#0e0e0f;"></div>
<svg style="left:684px;top:343.6px" width="8" height="8" viewBox="0 0 8 8"><path d="M4 0.8a1.3 1.3 0 0 1 1.3 1.3v2.2a1.3 1.3 0 0 1-2.6 0v-2.2A1.3 1.3 0 0 1 4 0.8z" fill="#f2f2f2"/><path d="M2 4.2a2 2 0 0 0 4 0M4 6.3v1.2M2.6 7.5h2.8" stroke="#f2f2f2" stroke-width="0.6" fill="none"/><path d="M1 7L7 1" stroke="#e02a2a" stroke-width="0.8"/></svg>
<div style="left:683.2px;top:411.1px;width:29.4px;height:7.2px;background:#0e0e0f;"></div>
<div style="left:0px;top:428.4px;width:798px;height:1.6px;background:#c3cbdb;"></div>
<div class="txt"><span style="left:388.0px;top:2.8px;font-size:5.6px">腾讯会议</span><span style="left:39.0px;top:33.4px;font-size:5.2px">江苏开放大学教材征订系统</span><span style="left:20.0px;top:32.4px;font-size:5.2px">腾讯会</span><span style="left:82.0px;top:48.5px;font-size:5.8px">不安全</span><span style="left:111.2px;top:48.2px;font-size:6.3px">jc.jsou.edu.cn</span><span style="left:79.5px;top:70.4px;font-size:7.2px">征订系统</span><span style="left:334.5px;top:71.2px;font-size:6.9px">学生类型：国家开放大学</span><span style="left:420.0px;top:71.2px;font-size:6.9px">|</span><span style="left:431.0px;top:71.2px;font-size:6.9px">当前学期：2023年春季学期</span><span style="left:525.5px;top:71.2px;font-size:6.9px">|</span><span style="left:536.0px;top:71.2px;font-size:6.9px">苏州办学点</span><span style="left:572.6px;top:71.2px;font-size:6.9px">-</span><span style="left:579.3px;top:71.2px;font-size:6.9px">征订单位</span><span style="left:624.5px;top:71.2px;font-size:6.9px">用户设置</span><span style="left:24.8px;top:68.6px;font-size:6.6px">江苏开放大学</span><span style="left:25.5px;top:76.0px;font-size:2.9px">JIANGSU OPEN UNIVERSITY</span><span style="left:18.9px;top:90.9px;font-size:7px">征订管理</span><span style="left:13.6px;top:105.9px;font-size:7.05px">教材征订管理</span><span style="left:13.6px;top:118.9px;font-size:7.05px">待提交征订单</span><span style="left:13.6px;top:131.9px;font-size:7.05px">已提交征订单</span><span style="left:18.8px;top:145.2px;font-size:7.1px">报订管理</span><span style="left:18.8px;top:160.0px;font-size:7.1px">储运业务</span><span style="left:18.8px;top:174.7px;font-size:7.1px">公告管理</span><span style="left:18.8px;top:188.8px;font-size:7.1px">统计信息</span><span style="left:58.7px;top:116.7px;font-size:5.6px">6</span><span style="left:84.2px;top:92.9px;font-size:6.1px">列表页</span><span style="left:121.2px;top:92.7px;font-size:6.5px">221103A0019</span><span style="left:165.8px;top:92.7px;font-size:6.5px">×</span><span style="left:80.0px;top:109.7px;font-size:6.65px">征订单位：苏州办学点</span><span style="left:80.0px;top:124.3px;font-size:6.65px">层次/年级：2021</span><span style="left:204.8px;top:124.3px;font-size:6.65px">专业：工程造价</span><span style="left:330.0px;top:124.1px;font-size:6.65px">班级：2班</span><span style="left:453.8px;top:124.1px;font-size:6.65px">备注：</span><span style="left:483.6px;top:125.3px;font-size:5.15px">编辑班级收备注</span><span style="left:80.0px;top:140.1px;font-size:6.65px">单位全称：苏州开放大学</span><span style="left:204.8px;top:140.1px;font-size:6.65px">收货人：大苗</span><span style="left:330.0px;top:139.4px;font-size:6.65px">收货电话：13810001001</span><span style="left:453.8px;top:139.4px;font-size:6.65px">收货地址：江苏省苏州市XXXXX</span><span style="left:618.2px;top:109.8px;font-size:5.1px">下载</span><span style="left:648.8px;top:109.7px;font-size:5.3px">增/减单</span><span style="left:117.5px;top:153.2px;font-size:6.1px">课程代码</span><span style="left:184.0px;top:153.2px;font-size:6.1px">课程名称</span><span style="left:262.6px;top:153.2px;font-size:6.1px">教材名称（版次）</span><span style="left:340.8px;top:153.2px;font-size:6.1px">教材作者</span><span style="left:407.2px;top:153.2px;font-size:6.1px">出版社</span><span style="left:486.5px;top:153.2px;font-size:6.1px">出版时间</span><span style="left:566.4px;top:153.2px;font-size:6.1px">书号（ISBN）</span><span style="left:632.7px;top:153.2px;font-size:6.1px">征订册数</span><span style="left:86.5px;top:164.1px;font-size:6.5px">1</span><span style="left:184.0px;top:164.3px;font-size:6.1px">施工工艺实训</span><span style="left:262.6px;top:164.3px;font-size:6.1px">自编讲义（不印刷）</span><span style="left:340.8px;top:164.3px;font-size:6.1px">桑海涛</span><span style="left:632.7px;top:164.1px;font-size:6.5px">33</span><span style="left:86.5px;top:175.1px;font-size:6.5px">2</span><span style="left:184.0px;top:175.3px;font-size:6.1px">工程经济学</span><span style="left:262.6px;top:175.3px;font-size:6.1px">工程经济学</span><span style="left:340.8px;top:175.3px;font-size:6.1px">刘宁</span><span style="left:407.2px;top:175.3px;font-size:6.1px">化学工业出版社</span><span style="left:486.5px;top:175.3px;font-size:6.1px">2017年04月</span><span style="left:566.4px;top:175.1px;font-size:6.5px">9787122258718</span><span style="left:632.7px;top:175.1px;font-size:6.5px">33</span><span style="left:86.5px;top:186.1px;font-size:6.5px">3</span><span style="left:184.0px;top:186.3px;font-size:6.1px">钢筋算量实训</span><span style="left:262.6px;top:186.3px;font-size:6.1px">办公大厦建筑工程图(第...</span><span style="left:340.8px;top:186.3px;font-size:6.1px">王全杰</span><span style="left:407.2px;top:186.3px;font-size:6.1px">重庆大学出版社</span><span style="left:486.5px;top:186.3px;font-size:6.1px">2018年02月</span><span style="left:566.4px;top:186.1px;font-size:6.5px">9787562469674</span><span style="left:632.7px;top:186.1px;font-size:6.5px">33</span><span style="left:86.5px;top:197.1px;font-size:6.5px">4</span><span style="left:184.0px;top:197.3px;font-size:6.1px">钢筋算量</span><span style="left:262.6px;top:197.3px;font-size:6.1px">自编实训任务书（需印...</span><span style="left:340.8px;top:197.3px;font-size:6.1px">苏海花</span><span style="left:632.7px;top:197.1px;font-size:6.5px">33</span><span style="left:86.5px;top:208.1px;font-size:6.5px">5</span><span style="left:184.0px;top:208.3px;font-size:6.1px">房屋建筑与装饰工程计...</span><span style="left:262.6px;top:208.3px;font-size:6.1px">自编讲义（不印刷）</span><span style="left:340.8px;top:208.3px;font-size:6.1px">苏海花</span><span style="left:632.7px;top:208.1px;font-size:6.5px">33</span><span style="left:86.5px;top:219.1px;font-size:6.5px">6</span><span style="left:184.0px;top:219.3px;font-size:6.1px">房屋建筑与装饰工程计...</span><span style="left:262.6px;top:219.3px;font-size:6.1px">建筑工程计量与计价（...</span><span style="left:340.8px;top:219.3px;font-size:6.1px">徐广舒</span><span style="left:407.2px;top:219.3px;font-size:6.1px">化学工业出版社</span><span style="left:486.5px;top:219.3px;font-size:6.1px">2018年05月</span><span style="left:566.4px;top:219.1px;font-size:6.5px">9787122301437</span><span style="left:632.7px;top:219.1px;font-size:6.5px">33</span><span style="left:86.5px;top:230.1px;font-size:6.5px">7</span><span style="left:184.0px;top:230.3px;font-size:6.1px">施工组织</span><span style="left:262.6px;top:230.3px;font-size:6.1px">建筑施工组织技术</span><span style="left:340.8px;top:230.3px;font-size:6.1px">杨晓雷主编</span><span style="left:407.2px;top:230.3px;font-size:6.1px">北京理工大学出版社</span><span style="left:486.5px;top:230.3px;font-size:6.1px">2020年12月</span><span style="left:566.4px;top:230.1px;font-size:6.5px">9787568293266</span><span style="left:632.7px;top:230.1px;font-size:6.5px">33</span><span style="left:86.5px;top:241.1px;font-size:6.5px">8</span><span style="left:184.0px;top:241.3px;font-size:6.1px">施工图识读</span><span style="left:262.6px;top:241.3px;font-size:6.1px">施工图识读（第一版）</span><span style="left:340.8px;top:241.3px;font-size:6.1px">夏玲涛、邬京虹</span><span style="left:407.2px;top:241.3px;font-size:6.1px">高等教育出版社</span><span style="left:486.5px;top:241.3px;font-size:6.1px">2017年09月</span><span style="left:566.4px;top:241.1px;font-size:6.5px">9787040467833</span><span style="left:632.7px;top:241.1px;font-size:6.5px">33</span><span style="left:648.5px;top:394.0px;font-size:6px">15:18</span><span style="left:636.6px;top:401.0px;font-size:6px">2022/11/3</span><span style="left:15.5px;top:421.8px;font-size:5.4px">大大大拥的屏幕共享</span><span style="left:742.6px;top:47.3px;font-size:5.5px">正在讲话</span><span style="left:699.0px;top:77.3px;font-size:4.7px">大大大拥的屏幕共享</span><span style="left:692.5px;top:144.2px;font-size:4.7px">资源朱娜</span><span style="left:693.0px;top:211.1px;font-size:4.7px">教务处</span><span style="left:693.0px;top:278.0px;font-size:4.7px">孙茜</span><span style="left:693.0px;top:344.9px;font-size:4.7px">外国语学院刘杨鑫</span><span style="left:684.0px;top:412.0px;font-size:4.7px">建工院吴老师</span></div>
<svg style="left:0;top:0;pointer-events:none" width="798" height="430" viewBox="0 0 7980 4300">
<path fill="#2a2a2a" d="M3902 76l0 5 20 0 0-5zm-18-38l0 29-1 10-2 8 5 3 3-18 5 0 0 12-5 0 2 6 5-1 3-1 0-4 0-19 3 3 4-2 0 1 13 0-1 4-7 0 1-3-6 0-1 8 21 0-2 8-7 1 1 5 8 0 2-2 3-7 1-10-8 0 2-7 5 4 4-5-6-4 5 0 0-5-19 0 1-3 17 0 0-5-6 0 3-6-6-2-2 7 3 1-7 0 1-8-5 0-2 8-5 0 3-2-2-6-5 1 2 7-3 0 0 5 8 0-1 3-9 0 0 5 5 0-6 4 0-23zm38 19l2 3-14 0 2-3zm-33-13l5 0 0 6-5 0zm0 13l5 0 0 7-5 0zm52-17l8 10 4-4-8-9zm-3 13l0 6 7 0 0 17-1 3-2 3 3 5 13-12-2-5-5 3 0-20zm18-15l0 7 6 0 0 13-7 0 0 7 7 0 0 22 7 0 0-22 7 0 0-7-7 0 0-13 8 0 0 20 2 15 4 8 4 0 2-3 2-6-4-6-1 8-2-7 0-36zm45 49l34-3 3 4 6-3-12-15-6 3 5 5-20 1 9-9 23 0 0-7-46 0 0 7 13 0-5 6-6 4zm19-52l-7 7-9 7-10 4 4 6 9-4 0 4 26 0 0-4 9 4 5-6-17-8-6-4 2-3zm-9 18l9-8 10 8zm67-15l4 13 6-3-5-12zm-25 2l6 10 6-4-7-9zm40 0l-5 19-4 9-4-8-4-10-2-10-6 1 3 12 3 11 6 9-9 8-6 2 4 6 6-3 9-7 9 7 6 3 4-6-5-3-10-7 6-10 3-11 3-11zm-43 13l0 6 7 0 0 17-1 3-2 4 4 4 13-10-2-6-6 4 0-22zM6489 3999l0-5 8 0 0-31-7 6 0-5 7-6 4 0 0 36 8 0 0 5zm47-14l-1 8-4 5-3 1-6 0-3-1-3-3-2-5 4-1 1 3 3 2 3 1 4-1 2-3 1-6-1-4-4-4-4 0-4 3-4 0 1-22 18 0 0 4-14 0-1 13 2-1 5-2 5 2 4 5zm7-12l0-6 4 0 0 6zm0 26l0-6 4 0 0 6zm12 0l0-5 9 0 0-31-8 6 0-5 8-6 4 0 0 36 8 0 0 5zm48-12l0 4-3 5-5 3-6 0-3-1-4-4-1-7 0-4 3-4 3-2-3-2-2-3 0-7 1-3 3-4 3-1 6 0 2 1 4 4 1 6 0 4-3 3-3 2 5 4zm-5-19l-1-4-2-2-5-1-4 3 0 6 2 4 6 1 3-3zm1 19l-2-6-3-2-4 0-4 4-1 4 1 5 2 2 6 1 3-2 1-1zM6369 4069l0-4 2-4 3-5 10-11 2-3 1-4-1-3-4-4-3 0-3 2-3 5-4 0 0-3 2-3 4-4 5-1 6 1 4 4 1 3 0 8-3 5-11 11-3 5 18 0 0 5zm52-21l-1 12-4 7-3 2-4 0-4 0-3-2-4-7-1-12 1-12 2-4 2-3 3-2 4 0 4 1 3 1 4 7zm-4 0l-1-10-2-5-5-2-4 2-3 5-1 10 1 10 3 5 4 2 4-2 3-5zm9 21l0-4 2-4 4-5 10-11 2-3 0-4 0-3-4-4-4 0-3 2-2 5-5 0 1-3 1-3 4-4 6-1 6 1 4 4 1 3-1 8-3 5-10 11-4 5 18 0 0 5zm29 0l0-4 2-4 3-5 10-11 3-3 0-4-1-3-4-4-3 0-3 2-2 5-5 0 1-3 1-3 4-4 6-1 6 1 3 4 1 3 0 8-3 5-11 11-3 5 18 0 0 5zm26 0l10-44 4 0-10 44zm18 0l0-5 9 0 0-31-8 6 0-5 8-6 5 0 0 36 8 0 0 5zm29 0l0-5 9 0 0-31-8 6 0-5 8-6 4 0 0 36 9 0 0 5zm25 0l10-44 4 0-10 44zm40-12l-1 7-4 4-3 1-4 0-6-1-4-4-2-6 5 0 1 4 2 2 4 1 6-2 1-3 0-5-2-3-4-2-5 0 0-4 7-1 3-3 1-4-2-5-3-2-4 0-4 3-1 4-5 0 2-6 4-4 3-1 6 0 3 1 4 4 1 6-1 4-2 4-4 2 6 3z"/>
<path fill="#222222" d="M395 345l9 6 3-4-9-5zm-3 14l10 6 2-4-9-5zm2 26l4 4 3-6 6-11-3-3zm13-4l0 5 33 0 0-5-14 0 0-31 11 0 0-4-28 0 0 4 11 0 0 31zm46-13l-8 11 4 2 8-11zm-4-8l0 4 14 0-2 9-6 7-9 5 3 4 10-6 6-8 3-11 10 0-1 11-2 9-8 0 1 5 7 0 5-2 2-9 1-9 4 12 5-2-6-11-3 1 0-9-15 0 1-5-5 0-1 5zm26-19l0 5-14 0 0-5-5 0 0 5-11 0 0 4 11 0 0 5 5 0 0-5 14 0 0 5 5 0 0-5 11 0 0-4-11 0 0-5zm52 8l0 14-13 0 0-14zm-30 14l0 4 11 0-1 7-4 6-6 6 4 3 7-6 4-8 2-8 13 0 0 22 5 0 0-22 12 0 0-4-12 0 0-14 10 0 0-5-44 0 0 5 11 0 0 14zm59-21l3 7 4-1-2-7zm21-1l-4 16-4 7 0-4-10 0 0-6 12 0 0-5-23 0 0 5 6 0-1 17-1 8-5 7 4 3 5-8 2-8 1-9 5 0-1 20-6 0 1 5 6 0 3-2 1-4 1-19 3 4 4-6 4 13-7 7-5 3 3 4 5-2 7-7 6 6 4 3 4-4-4-3-7-7 3-6 3-14 4 0 0-5-16 0 2-8zm2 14l8 0-4 15zm42-14l0 14-20 0 0 5 19 0-3 10-7 8-10 7 4 4 10-7 6-8 4-9 5 10 7 8 8 6 4-5-9-5-6-8-5-11 19 0 0-5-21 0 1-14zm52 26l0 3-20 0 0 5 20 0 0 9-9 0 2 5 7 0 4-2 1-4 0-8 21 0 0-5-21 0 0-1 13-8-3-3-26 0 0 5 19 0zm-1-25l3 7-10 0 2-1-5-7-4 2 4 6-8 0 0 11 5 0 0-6 35 0 0 6 4 0 0-11-8 0 5-6-5-2-5 8-8 0 3-1-4-8zm63-1l-4 12-2 6 0-4-4 0 6-12-5-1-3 8 0-4-6 0 0-5-5 0 0 5-6 0 0 4 6 0 0 5-8 0 0 4 12 0-3 3-5 0 0 4-5 3 4 3 8-6 5 0-5 4 0 4-11 1 0 4 11-1 0 7-7 0 2 4 5 0 3-2 1-9 10-1 0-5-10 1 0-2 8-6 3 2 3-5 4 13-7 7-5 3 3 4 5-2 7-7 6 7 3 2 4-4-4-3-6-7 3-6 3-14 3 0 0-5-15 0 2-8zm-16 21l3-3 7 0-3 4-2-1zm-2-12l6 0-3 5-3 0zm27 5l-4 15-4-15zm50-14l0 11-15 0 0 5 13 0-5 7-5 8-7 5 4 4 5-5 10-13 0 21-9 0 2 5 7 0 4-2 1-4 0-26 5 0 0-5-5 0 0-11zm-29 0l0 11-8 0 0 5 8 0-6 13-4 5 3 5 7-14 0 23 5 0 0-25 5 7 3-4-8-9 0-1 7 0 0-5-7 0 0-11zm53 0l-2 4-8 6 3 5 4-4 8-9zm2 11l-4 6-9 8 3 5 5-4 0 22 5 0 0-28 4-7zm8 7l0 24-5 0 0 5 33 0 0-5-12 0 0-15 10 0 0-5-10 0 0-14 11 0 0-4-29 0 0 4 13 0 0 34-7 0 0-24zm35-14l9 9 3-4-8-8zm5 43l14-10-1-5-7 5 0-21-14 0 0 5 9 0 0 17-1 2-2 3zm11-43l0 5 15 0 0 33-10 1 2 5 10-1 2-1 1-5 0-32 9 0 0-5zm45 28l-3 4-8 6 4 3 4-3 8-8zm19 3l12 10 4-3-12-10zm1-14l4 3-20 2 22-14-4-3-8 6-12 1 11-9 18-3-4-4-10 2-26 2 1 4 14 0-8 6-4 2 1 4 13-1-9 5-8 3 2 4 17-2 0 14-8 0 2 5 6-1 4-1 1-4 0-13 12-1 3 5 4-2-10-12zm54 5l0 19 2 2 3 0 7-1 1-3 1-6-4-2-1 7-4 1 0-17zm-10 0l-1 8-2 6-6 4 3 4 7-5 3-7 1-10zm-24 15l1 5 17-7-1-4zm29-40l2 6-12 0 0 5 9 0-7 8-3 1 1 5 23-3 2 4 4-2-8-12-4 2 3 4-12 2 7-9 13 0 0-5-14 0 3-1-3-6zm-28 21l7-1-6 7-2 2 1 5 16-5 0-4-8 2 10-15-5-3-3 6-5 1 8-15-5-2-5 11-3 4-2 2z"/>
<path fill="#f4f4f4" d="M242 332l-3 6 3 1 3-6zm-20 0l2 7 4-2-3-6zm-2 37l0 2 20 0 0-2zm-16-36l0 27-1 9-2 8 3 2 3-18 7 0 0 14-5 0 1 3 4 0 3-1 0-21 3 2 4-3 0 2 14 0-1 5-10 0 1-4-3 0-2 7 21 0-3 10-7 0 1 3 6 1 3-2 2-6 1-9-7 0 2-8 6 4 3-3-4-1-5-5 8 0 0-3-19 0 2-4 15 0 0-3-14 0 2-7-4-1-2 8-10 0 0 3 9 0-2 4-9 0 0 3 7 0-8 7 0-23zm35 16l3 5-17 0 4-5zm-31-12l6 0 0 8-6 0zm0 12l6 0 0 9-7 0zm50-15l7 8 3-2-7-8zm-4 13l0 4 8 0 0 18-1 2-2 3 2 3 11-9-1-4-6 4 0-21zm17-13l0 4 7 0 0 14-8 0 0 4 8 0 0 22 4 0 0-22 8 0 0-4-8 0 0-14 10 0 0 20 1 14 4 7 3 0 1-3 1-7-2-2-1 8-2-6-1-35zm41 44l33-4 3 5 3-2-12-14-3 2 6 6-24 2 11-12 23 0 0-4-43 0 0 4 15 0-7 8-6 5zm18-47l-6 7-8 6-10 5 3 3 9-4 0 3 25 0 0-4-25 0 12-10 8 7 13 8 3-4-8-3-8-5-6-5 2-2z"/>
<path fill="#888888" d="M852 514l20 16 4-3-20-15zm-28-17l0 5 26 0-7 10-10 8-10 7 3 4 7-5 14-12 0 33 4 0 0-39 4-6 19 0 0-5zm78-3l3 6-22 0 0 12 5 0 0-8 38 0 0 8 5 0 0-12-21 0-4-7zm14 26l-2 5-6 7-12-5 5-7zm-21 0l-6 9 15 6-6 3-15 5 3 4 16-6 7-4 18 9 4-3-18-10 3-3 5-10 11 0 0-4-29 0 4-9-5 0-4 9-16 0 0 4zm70-27l-8 9-9 7-10 6 3 4 6-4 0 4 16 0 0 9-15 0 0 4 15 0 0 9-23 0 0 4 50 0 0-4-23 0 0-9 16 0 0-4-16 0 0-9 16 0 0-4 7 4 3-4-9-5-9-6-8-8 1-2zm-17 22l12-10 5-6 6 6 12 10z"/>
<path fill="#1a1a1a" stroke="#1a1a1a" stroke-width="0.4" d="M1116 504l0-6 6 0 0 6zm6 44l-1 5-3 3-8 1 0-5 5 0 1-3 0-38 6 0zm12-21l1 7 3 5 5 1 3-1 3-2 1-3 6 0-2 6-5 3-3 1-7 0-4-1-3-3-3-8 0-10 3-8 3-2 8-2 6 1 2 2 2 2 3 5-6 0-1-3-3-2-6 0-4 2-1 3zm29 17l0-7 6 0 0 7zm16-40l0-6 6 0 0 6zm6 44l-1 5-3 3-8 1 0-5 5 0 1-3 0-38 6 0zm33-13l-1 5-5 3-3 1-11 0-5-3-2-5 5-1 3 4 6 1 6-1 2-4-1-2-2-2-12-4-4-2-2-6 2-5 4-3 7-1 6 1 4 3 3 4-5 1-2-3-2-1-7-1-4 2 0 4 2 3 11 3 4 2 3 3zm35-8l-2 10-2 3-3 3-4 1-9 0-3-1-3-3-3-8-1-5 2-9 5-6 8-2 5 1 3 1 3 2 3 8zm-6 0l-1-7-3-4-2-2-6 0-4 3-2 6 0 8 2 6 2 2 5 1 5-1 3-4zm18-16l0 24 3 4 4 1 5-1 3-4 0-2 1-22 5 0 0 33-5 0 0-6-5 5-3 1-9-1-3-3-1-7 0-22zm31 33l0-7 6 0 0 7zm21-16l1 7 1 2 4 3 7 0 3-2 2-3 4 2-2 4-5 3-6 1-5-1-3-1-3-3-4-8 0-10 4-8 3-2 3-1 5-1 8 2 5 6 1 10zm18-4l-3-7-2-2-4-1-3 0-4 3-1 2-1 5zm33 15l-2 3-4 2-4 1-7-2-4-6-1-10 1-9 4-6 7-2 4 1 4 2 2 3 0-18 6 0 0 46-5 0zm-16-12l0 8 3 4 4 1 6-1 1-2 2-6 0-8-2-6-4-3-5 0-2 2-3 4zm36-16l0 24 3 4 4 1 4-1 3-4 1-2 0-22 6 0 0 33-5 0 0-6-5 5-4 1-8-1-4-3-1-7 0-22zm31 33l0-7 6 0 0 7zm20-17l1 7 3 5 5 1 3-1 3-2 1-3 6 0-3 6-4 3-3 1-8 0-3-1-3-3-3-8 0-10 3-8 3-2 3-1 5-1 6 1 2 2 2 2 2 5-5 0-2-3-2-2-6 0-4 2-1 3zm49 17l-1-25-2-4-4-1-5 2-3 3-1 3 0 22-5 0-1-33 6 0 0 5 4-5 4-1 9 1 3 4 1 7 0 22z"/>
<path fill="#f4f9ff" d="M813 714l-4 5-11 10 3 4 6-5 11-12zm1 16l-4 7-13 13 3 5 8-7 0 32 5 0 0-39 6-9zm11 8l0 35-7 0 0 5 46 0 0-5-18 0 0-23 15 0 0-5-15 0 0-21 16 0 0-5-39 0 0 5 17 0 0 49-10 0 0-35zm50-19l11 12 4-4-11-12zm7 59l18-13-1-5-11 7 0-31-17 0 0 6 12 0 0 25-1 3-3 4zm14-58l0 5 22 0-1 48-1 1-12 0 2 6 14-1 2-2 1-5 0-47 13 0 0-5zm64 38l-5 5-11 9 5 4 5-5 11-11zm25 3l17 15 4-3-17-15zm2-19l6 6-32 2 22-12 10-8-4-3-11 8-18 1 16-13 25-4-4-5-14 3-36 3 1 5 20-1-9 8-8 5 1 5 19-2-14 8-10 4 1 5 25-3 0 20-11 0 2 5 9 0 4-2 1-4 0-19 18-2 5 7 5-3-15-16zm74 7l1 27 2 2 4 1 6 0 3-1 2-4 1-8-5-2-1 9-7 1 0-25zm-13 0l-1 12-4 9-9 6 3 4 10-7 5-10 1-14zm-34 22l1 5 23-8-1-4zm40-56l4 9-18 0 0 5 13 0-10 13-4 2 2 5 31-3 3 5 4-3-10-16-5 3 5 6-20 2 11-14 19 0 0-5-20 0 4-1-3-6-1-3zm-39 29l12-2-10 12-3 2 2 5 22-5-1-5-13 3 15-22-5-3-4 8-9 1 12-22-5-2-8 16-4 6-3 2z"/>
<path fill="#ffffff" d="M3376 755l0 5-27 0 0 6 27 0 0 12-13 1 3 6 10-1 5-2 2-5 0-11 27 0 0-6-27 0 0-2 11-7 5-4-4-3-34 0 0 6 25 0zm-2-32l5 9-14 0 3-1-7-9-5 2 5 8-11 0 0 15 6 0 0-9 47 0 0 9 6 0 0-15-10 0 6-8-7-3-6 11-11 0 4-1-5-11zm56-1l-4 9-4 9-5 7 6 4 7-11 15 0 0 14-20 0 0 7 20 0 0 16-27 0 0 6 62 0 0-6-28 0 0-16 22 0 0-7-22 0 0-14 24 0 0-6-24 0 0-13-7 0 0 13-12 0 3-11zm104 0l-7 10 5 2 9-10zm-39 3l7 9-14 0 0 6 21 0-6 5-8 4-9 2 4 6 9-3 8-5 7-6 0 10 7 0 0-9 23 13 4-6-23-11 23 0 0-6-27 0 0-13-7 0 0 13-11 0 5-2-5-7-2-3zm19 30l-1 6-26 0 0 6 24 0-5 5-8 4-12 3 3 6 14-4 9-5 5-7 7 8 10 5 12 3 4-6-11-2-9-4-6-6 24 0 0-6-28 0 1-6zm81-30l0 23 6 0 0-23zm13-3l0 30-9 1 2 6 10-1 3-3 0-33zm-30 7l0 9-7 0 0-9zm-16 34l0 6 21 0 0 8-28 0 0 6 63 0 0-6-28 0 0-8 21 0 0-6-21 0 0-6-6 0 0-13 7 0 0-6-7 0 0-9 6 0 0-5-31 0 0 5 6 0 0 9-9 0 0 6 8 0-1 4-3 4-5 3 5 5 5-5 4-5 1-6 8 0 0 14 5 0 0 5zm76-17l3-1 2-2 1-2-1-4-2-2-3 0-3 0-2 2-1 4 1 2 2 2zm0 34l3-1 2-2 1-3-1-3-2-2-3-1-3 1-2 2-1 3 1 3 2 2zm93-23l6 8-10 0 0-10 13 0 0-6-13 0 0-8 15 0 0-6-35 0 0 6 14 0 0 8-12 0 0 6 12 0 0 10-15 0 0 5 37 0 0-5-6 0 4-3-4-5-2-2zm-35-33l0 61 6 0 0-3 44 0 0 3 7 0 0-61zm6 51l0-45 44 0 0 45zm86-53l2 5-26 0 0 15 7 0 0-9 45 0 0 9 7 0 0-15-25 0-3-7zm25 24l-14 11-7-10 5-3 16 0 0-6-39 0 0 6 14 0-7 4-17 5 4 5 19-8 3 3-8 5-18 6 3 5 18-7 8-4 1 4-9 6-11 5-11 3 3 6 20-9 9-5 0 4-2 5-3 2-8 0 2 6 6 0 5-1 2-2 3-4 2-7-1-9 2-1 5 9 6 7 8 5 4-5-8-5-5-7-4-8 9-7zm59-15l0 19-18 0 0-19zm-41 19l0 6 16 0-2 9-5 8-9 7 6 5 9-8 6-10 2-11 18 0 0 29 7 0 0-29 15 0 0-6-15 0 0-19 13 0 0-6-58 0 0 6 14 0 0 19zm80-28l3 10 6-2-3-9zm28-1l-3 11-3 11-5 8 0-5-14 0 0-8 16 0 0-6-30 0 0 6 7 0 0 24-3 9-6 10 5 4 7-10 3-12 1-11 7 0 0 14-1 12-2 1-6-1 1 6 8 0 4-2 1-5 2-25 4 5 5-8 6 18-5 5-5 4-6 3 4 6 6-3 9-10 9 9 5 4 4-6-5-3-9-9 4-8 5-19 5 0 0-6-21 0 2-12zm2 19l11 0-3 14-3 6-4-13zm56-19l-1 19-26 0 0 7 25 0-4 12-9 12-13 8 5 6 13-9 9-11 5-12 6 13 9 11 12 8 4-6-11-8-9-11-6-13 25 0 0-7-28 0 1-19zm69 34l0 5-27 0 0 6 27 0 0 12-13 1 3 6 10-1 5-2 2-5 0-11 27 0 0-6-27 0 0-2 11-7 5-4-4-3-34 0 0 6 25 0zm-2-32l5 9-14 0 3-1-7-9-5 2 5 8-11 0 0 15 6 0 0-9 47 0 0 9 6 0 0-15-10 0 6-8-7-3-6 11-11 0 4-1-5-11zM4206 794l0-65 6 0 0 65zM4318 726l8 16 7-2-6-11-3-5zm46-3l-8 18 6 2 9-18zm-46 53l0 6 46 0 0 3 7 0 0-40-23 0 0-24-7 0 0 24-22 0 0 7 45 0 0 8-43 0 0 6 43 0 0 10zm102-32l0 28 6 0 0-28zm14-2l0 36-10 1 2 6 11-1 3-4 0-38zm-6-21l-6 11-20 0 3-2-6-9-6 2 5 9-16 0 0 6 63 0 0-6-16 0 6-9zm-22 38l0 6-13 0 0-6zm0-5l-13 0 0-5 13 0zm-19-11l0 42 6 0 0-15 13 0 0 9-8 0 2 6 10-1 2-1 1-5 0-35zm92 12l0 5-27 0 0 6 27 0 0 12-13 1 3 6 10-1 5-2 2-5 0-11 27 0 0-6-27 0 0-2 11-7 5-4-4-3-34 0 0 6 25 0zm-2-32l5 9-14 0 3-1-7-9-5 2 5 8-11 0 0 15 6 0 0-9 47 0 0 9 6 0 0-15-10 0 6-8-7-3-6 11-11 0 4-1-5-11zm52 46l-3 5-7 7 5 4 8-9 3-5zm10 3l7 11 5-4-7-10zm36-42l0 10-12 0 0-10zm-18-6l-1 36-1 11-4 11 5 3 3-7 3-16 13 0 0 16-9 1 2 6 10-1 2-2 1-5 0-53zm18 22l0 10-12 0 0-10zm-32-24l0 8-11 0 0-8-6 0 0 8-6 0 0 5 6 0 0 28-7 0 0 5 34 0 0-5-4 0 0-28 5 0 0-5-5 0 0-8zm-11 13l11 0 0 6-11 0zm0 11l11 0 0 5-11 0zm0 11l11 0 0 6-11 0zm71-11l3-1 2-2 1-2-1-4-2-2-3 0-3 0-2 2-1 4 1 2 2 2zm0 34l3-1 2-2 1-3-1-3-2-2-3-1-3 1-2 2-1 3 1 3 2 2zm56-1l0-4 2-5 6-7 14-12 3-5 0-4-1-4-3-3-2-1-5 0-4 2-3 4-1 2-6 0 1-4 1-3 6-5 8-1 9 1 5 5 1 3 1 6-1 4-4 6-15 13-5 7 26 0 0 5zm74-25l-2 14-3 5-3 4-4 2-6 1-5-1-4-2-4-4-2-5-1-6 0-16 1-6 2-5 4-4 4-2 6 0 5 0 4 3 4 3 2 5zm-7 0l-1-11-3-7-3-2-3 0-4 0-3 2-3 6-1 12 1 12 3 7 3 1 3 1 4-1 3-2 3-6zm13 25l0-4 3-5 5-7 14-12 3-5 1-4-1-4-3-3-3-1-5 0-4 2-2 4-1 2-6 0 0-4 2-3 6-5 8-1 8 1 6 5 1 3 0 6-1 4-4 6-15 13-5 7 26 0 0 5zm74-14l-2 8-6 5-4 2-5 0-9-2-6-4-2-8 6 0 2 5 4 3 5 1 6-1 2-2 1-2 1-5 0-2-3-4-5-2-7 0 0-6 9-1 4-3 1-5-1-4-3-3-8-1-6 4-1 4-7 0 1-4 5-6 6-3 9 0 4 1 6 5 2 7-2 5-3 4-6 3 7 2 2 2 3 4zm6-2l0 7 32 0 0 15 7 0 0-15 24 0 0-7-24 0 0-12 19 0 0-6-19 0 0-10 21 0 0-6-41 0 3-7-7-1-3 9-6 8-6 6 6 5 10-14 16 0 0 10-21 0 0 18zm18 0l0-12 14 0 0 12zm78-42l0 5-23 0 0 6 21 0-1 4-17 0 0 5 15 0-3 5-18 0 0 5 14 0-10 9-6 4 5 5 9-6 0 22 7 0 0-3 23 0 0 3 7 0 0-22 10 6 4-6-6-3-10-9 15 0 0-5-36 0 2-5 28 0 0-5-26 0 1-4 27 0 0-6-25 0 0-4zm-3 30l16 0 4 5-24 0zm-4 20l23 0 0 6-23 0zm0-5l0-5 23 0 0 5zm99-45l-12 2-32 2 1 6 21-1 0 5-27 0 0 6 21 0-7 5-16 7 5 5 9-5 0 5 24 0-8 4 0 4-28 0 0 5 28 0-1 8-12 0 3 6 9 0 6-2 1-2 0-10 27 0 0-5-27 0 0-2 15-8-4-3-33 0 11-7 4-4 0 9 7 0 0-9 7 6 9 5 9 4 4-5-16-7-6-4 20 0 0-6-27 0 0-6 20-3zm47 34l0 5-27 0 0 6 27 0 0 12-13 1 3 6 10-1 5-2 2-5 0-11 28 0 0-6-28 0 0-2 12-7 4-4-4-3-34 0 0 6 25 0zm-2-32l5 9-14 0 3-1-7-9-5 2 5 8-11 0 0 15 6 0 0-9 47 0 0 9 6 0 0-15-10 0 6-8-7-3-6 11-11 0 4-1-5-11zm52 46l-3 5-7 7 6 4 7-9 3-5zm10 3l7 11 5-4-7-10zm36-42l0 10-12 0 0-10zm-18-6l-1 36-1 11-4 11 5 3 3-7 3-16 13 0 0 16-9 1 2 6 11-1 1-2 1-5 0-53zm18 22l0 10-12 0 0-10zm-32-24l0 8-11 0 0-8-6 0 0 8-6 0 0 5 6 0 0 28-6 0 0 5 34 0 0-5-5 0 0-28 5 0 0-5-5 0 0-8zm-11 13l11 0 0 6-11 0zm0 11l11 0 0 5-11 0zm0 11l11 0 0 6-11 0zM5261 794l0-65 6 0 0 65zM5374 757l-6 10-4 4 6 3 9-15zm-5-11l0 6 19 0-3 12-7 9-13 7 4 5 14-8 8-11 3-14 13 0 0 14-1 8-2 4-1 1-10 0 2 5 9 0 5-1 1-1 2-4 1-7 1-12 6 15 6-2-7-15-5 1 0-12-19 0 0-7-6 0-1 7zm34-25l0 6-17 0 0-6-7 0 0 6-15 0 0 6 15 0 0 7 7 0 0-7 17 0 0 7 7 0 0-7 15 0 0-6-15 0 0-6zm42 1l-1 34-3 13-8 11 4 5 10-13 4-14 0-36zm20 2l0 56 6 0 0-56zm20-2l0 62 6 0 0-62zm-48 16l-4 13-2 6 5 2 3-6 3-14zm15 3l5 18 6-2-6-18zm19 0l7 17 6-2-8-17zm39 4l-6 13-4 5 6 4 4-6 6-14zm41 1l7 22 7-3-8-21zm-27-25l0 12-20 0 0 7 20 0-3 14-6 14-14 12 5 5 15-14 7-16 3-15 12 0-1 19-1 12-2 5-3 1-10 0 2 7 14-1 4-3 2-6 2-14 1-27-20 0 0-12zm74 34l0 5-27 0 0 6 27 0 0 12-13 1 3 6 10-1 5-2 2-5 0-11 27 0 0-6-27 0 0-2 11-7 5-4-4-3-34 0 0 6 25 0zm-2-32l5 9-14 0 3-1-7-9-5 2 5 8-11 0 0 15 6 0 0-9 47 0 0 9 6 0 0-15-10 0 6-8-7-3-6 11-11 0 4-1-5-11zm57 25l34 0 0 11-34 0zm6 22l1 14 7 0-2-14zm14 0l5 14 6-1-5-14zm14 0l9 15 6-3-9-14zm-39-2l-6 10-4 4 6 3 4-4 6-11zm-1-26l0 23 47 0 0-23-21 0 0-8 26 0 0-6-26 0 0-7-6 0 0 21zM5729 764l0-6 17 0 0 6zM5810 721l-4 5-10 9 3 6 6-5 11-12zm1 15l-4 7-12 12 3 6 7-6 0 30 6 0 0-38 6-8zm11 9l0 32-7 0 0 6 45 0 0-6-17 0 0-21 13 0 0-6-13 0 0-18 15 0 0-6-38 0 0 6 16 0 0 45-8 0 0-32zm47-19l11 12 5-5-11-11zm7 58l18-14-2-6-9 7 0-29-18 0 0 7 11 0 0 23 0 3-4 3zm14-57l0 6 20 0 0 44-2 1-11 0 2 7 14-2 2-1 2-6 0-43 12 0 0-6zm57 23l15 0 0 6-15 0zm22 0l15 0 0 6-15 0zm-22-12l15 0 0 6-15 0zm22 0l15 0 0 6-15 0zm10-17l-6 12-16 0 3-2-8-10-5 3 6 9-12 0 0 28 21 0 0 6-27 0 0 6 27 0 0 12 7 0 0-12 28 0 0-6-28 0 0-6 22 0 0-28-11 0 6-9zm46 12l0 6 38 0 0-6zm5 11l4 29 7-2-2-8-3-20zm9-22l3 11 7-2-4-11zm-17 54l0 6 44 0 0-6-13 0 7-33-7-1-6 34zm-3-55l-5 10-5 9-7 8 4 7 6-7 0 37 6 0 0-47 7-15zM6255 726l0 35-3 11-5 9 5 4 4-6 3-7 2-8 16 0 0 20 6 0 0-20 17 0 0 14-2 0-10 0 2 7 10-1 5-2 2-5 0-51zm7 6l15 0 0 10-15 0zm38 0l0 10-17 0 0-10zm-38 16l15 0 0 10-16 0zm38 0l0 10-17 0 0-10zm32-10l34 0 0 12-34 0zm12-16l3 10-22 0-1 26-2 12-6 11 6 4 5-8 3-11 1-10 35 0 0 4 7 0 0-28-22 0 3-2-4-9zm47 4l10 11 5-5-11-10zm-5 16l0 7 9 0 0 23-1 3-3 3 4 6 15-13-2-6-7 6 0-29zm30-19l0 13-3 5-7 4 4 5 8-5 3-7 1-9 11 0 1 15 2 2 4 1 9 0-1-6-7 1-1-1-1-18zm21 34l-2 5-7 7-7-7-3-5zm-28-6l0 6 5 0-2 1 3 6 8 9-6 3-11 3 3 6 13-5 6-3 11 6 7 2 4-6-6-1-11-5 5-6 4-6 4-8-4-2zm88-23l10 0 0 5-10 0zm-15 0l9 0 0 5-9 0zm-16 0l10 0 0 5-10 0zm-2 22l0 28-8 0 0 5 61 0 0-5-9 0 0-28-21 0 1-4 28 0 0-5-27 0 0-3 25 0 0-14-54 0 0 14 23 0-1 3-25 0 0 5 25 0-1 4zm7 28l0-3 31 0 0 3zm0-17l31 0 0 3-31 0zm0-4l0-3 31 0 0 3zm0 11l31 0 0 3-31 0zM616 1210l-2 7-4 4-3 1-8 0-3-1-3-3-3-8 0-12 1-5 2-4 3-3 4-2 4-1 5 1 3 3 3 4-5 1-1-3-3-1-2-1-5 2-3 5-1 8 2-2 3-2 7 0 3 1 4 4zm-5 0l-1-5-1-2-4-2-6 1-4 5 1 7 3 4 2 1 4 0 4-3zM6185 1109l0 4 19 0 0 39 5 0 0-27 16 11 2-4-18-10 0-9 21 0 0-4zm86-1l6 7 3-2-7-6zm5 15l-6 14-2-17 14 0 0-3-14 0 0-11-4 0 0 11-12 0 0-4 9 0 0-3-9 0 0-5-4 0 0 5-10 0 0 3 10 0 0 4-12 0 0 3 28 0 3 21-8 9 3 3 7-8 2 4 3 2 3 1 3-1 1-3 1-6-3-2-1 8-1 0-2 0-3-7 3-5 4-12zm-40 21l1 3 13-1 0 6 4 0 0-6 9-1 0-4-9 1 0-5 8 0 0-3-8 0 0-4-4 0 0 4-7 0 3-6 17 0 0-3-15 0 1-4-3-1-2 5-7 0 0 3 5 0-4 7 1 3 11-1 0 6zM6513 1118l3 7 3-1-4-7zm16-1l-4 7 2 1 4-7zm-39 25l1 4 15-6 0-3-6 2 0-18 6 0 0-3-6 0 0-13-3 0 0 13-6 0 0 3 6 0 0 19zm21-36l4 6 4-1-4-6zm-3 6l0 18 28 0 0-18-7 0 4-6-4-1-4 7zm3 3l9 0 0 12-9 0zm12 0l10 0 0 12-10 0zm-9 29l16 0 0 4-16 0zm0-3l0-5 16 0 0 5zm-3-8l0 20 3 0 0-2 16 0 0 2 4 0 0-20zm30 17l11-39 4 0-11 39zm55-43l7 6 2-2-6-6zm-19 14l0 3 13 0 0-3zm-19-13l7 13 3-2-7-12zm0 41l3 2 3-6 4-12-3-2zm20-21l0 18 3 0 0-3 9 0 0-15zm3 4l6 0 0 8-6 0zm10-27l0 8-20 0 0 22-1 9-4 7 3 3 4-9 2-9 0-19 17 0 2 23-7 8-4 3 3 2 9-9 2 5 2 3 3 1 2 0 2-4 1-6-3-2-1 7-1 1-1-1-3-8 3-5 4-13-3-1-5 14-2-18 11 0 0-4-11 0 0-8zm29 21l13 0 0 6-13 0zm17 0l13 0 0 6-13 0zm-17-9l13 0 0 6-13 0zm17 0l13 0 0 6-13 0zm9-12l-5 9-13 0 2-1-5-8-4 1 5 8-9 0 0 21 16 0 0 5-21 0 0 4 21 0 0 9 4 0 0-9 22 0 0-4-22 0 0-5 17 0 0-21-9 0 6-8zM179 4225l0 15-21 0 0 5 20 0-4 10-6 9-11 7 4 4 10-7 7-9 4-9 5 10 7 9 9 6 4-5-9-6-7-8-5-11 20 0 0-5-22 0 1-15zm54 0l0 15-21 0 0 5 20 0-4 10-6 9-11 7 4 4 10-7 7-9 4-9 5 10 7 9 9 6 4-5-9-6-7-8-5-11 20 0 0-5-22 0 1-15zm54 0l0 15-21 0 0 5 20 0-4 10-6 9-11 7 4 4 10-7 7-9 4-9 5 10 7 9 9 6 4-5-9-6-7-8-5-11 20 0 0-5-22 0 1-15zm51 3l0 28-2 8-4 8 4 3 3-5 3-12 8 0 0 16 5 0 0-16 8 0 0 12-6 0 1 5 8-1 1-1 1-4 0-41zm5 5l7 0 0 8-7 0zm20 0l0 8-8 0 0-8zm-20 13l7 0 0 7-7 0zm20 0l0 7-8 0 0-7zm-37-21l0 11-7 0 0 4 7 0 0 11-8 2 2 5 6-2-1 13-5 1 1 5 6-1 3-1 0-4 0-14 6-2 0-5-6 2 0-10 6 0 0-4-6 0 0-11zm74 23l8 13 5-3-9-12zm3-23l-5 13-3 6 0-10-9 0 3-8-6-1-1 9-7 0 0 40 5 0 0-5 15 0 0-25 4 3 5-9 13 0-2 27-2 4-10 0 2 5 8 0 5-2 2-5 1-12 0-22-15 0 2-7zm-23 13l10 0 0 10-10 0zm0 27l0-12 10 0 0 12zm57-33l31 0 0 4-31 0zm-5-5l0 28-2 9-4 8 5 3 4-9 2-10 0-15 37 0 0-14zm32 14l-3 6-14 0 4-1-2-5-5 1 3 5-8 0 0 5 8 0 0 6-9 0 0 5 8 0-4 6-5 2 3 4 6-3 4-5 1-4 10 0 0 12 6 0 0-12 9 0 0-5-9 0 0-6 8 0 0-5-9 0 4-5zm-3 17l-9 0 0-6 9 0zm32-14l27 0 0 3-27 0zm0-5l27 0 0 2-27 0zm10 18l0 3-8 0 3-3zm5 0l6 0 3 3-9 0zm-20-22l0 16 9 0-1 2-14 0 0 4 10 0-12 7 3 3 7-3 0 9 5 0 0-8 8 0 0 10 5 0 0-10 9 0 0 4-5 0 1 4 6 0 3-1 0-1 0-7 7 3 3-4-9-3-3-3 10 0 0-4-29 0 2-2 22 0 0-16zm24-10l0 3-13 0 0-3-5 0 0 3-12 0 0 4 12 0 0 2 5 0 0-2 13 0 0 2 5 0 0-2 13 0 0-4-13 0 0-3zm52 38l15 12 5-3-15-12zm-14-3l-4 4-10 7 4 4 6-4 10-9zm-12-24l0 5 10 0 0 12-13 0 0 5 50 0 0-5-13 0 0-12 11 0 0-5-11 0 0-11-5 0 0 11-14 0 0-11-5 0 0 11zm15 17l0-12 14 0 0 12zm49-13l24 0 0 4-24 0zm-5-3l0 11 34 0 0-11zm14 21l0 3-21 0 0 4 21 0 0 6-9 0 1 4 8 0 4-1 1-2 1-7 21 0 0-4-21 0 0-1 16-6-3-3-35 0 0 4 25 0zm-1-33l1 4-21 0 0 5 47 0 0-5-20 0-2-4zM7436 499l0 26-7 0 0 4 49 0 0-4-21 0 0-18 17 0 0-4-17 0 0-14 19 0 0-4-45 0 0 4 22 0 0 36-12 0 0-26zm67-18l-3 8-16 0 0 4 14 0-9 13-6 5 2 4 7-6 0 22 4 0 0-26 6-12 31 0 0-4-29 0 3-7zm11 15l0 11-12 0 0 4 12 0 0 15-15 0 0 4 34 0 0-4-15 0 0-15 13 0 0-4-13 0 0-11zm28-12l8 9 3-3-8-8zm-4 14l0 4 8 0 0 19-1 2-2 3 3 4 11-9-2-4-5 4 0-23zm39-3l0 13-10 0 0-13zm-14-14l0 10-7 0 0 4 7 0 0 11 0 2-9 0 0 4 9 0-1 6-3 6-4 5 3 2 5-5 3-6 1-8 10 0 0 19 4 0 0-19 8 0 0-4-8 0 0-13 7 0 0-4-7 0 0-10-4 0 0 10-10 0 0-10zm33 4l8 8 3-3-8-8zm18 26l0 20 4 0 0-2 18 0 0 2 5 0 0-20-12 0 0-9 15 0 0-4-15 0 0-11 12-3-3-3-27 5 1 3 13-1 0 10-14 0 0 4 14 0 0 9zm4 14l0-10 18 0 0 10zm-25-27l0 4 8 0 0 19 0 3-3 3 3 3 11-10-1-3-6 4 0-23zM7011 779l-1 13-17 0 0 5 17 0-3 8-6 8-9 6 3 4 9-6 6-8 4-8 4 9 6 7 8 6 3-4-8-6-6-7-4-9 17 0 0-5-19 0 1-13zm47 0l-1 13-17 0 0 5 17 0-3 8-6 8-9 6 3 4 9-6 6-8 4-8 4 9 6 7 8 6 3-4-8-6-6-7-4-9 17 0 0-5-19 0 1-13zm47 0l-1 13-17 0 0 5 17 0-3 8-6 8-9 6 3 4 9-6 6-8 4-8 4 9 6 7 8 6 3-4-8-6-6-7-4-9 17 0 0-5-19 0 1-13zm44 3l0 24-1 8-4 6 4 3 2-5 3-10 7 0 0 14 4 0 0-14 7 0 0 10-6 1 2 4 6-1 1-1 1-3 0-36zm4 4l7 0 0 7-7 0zm18 0l0 7-7 0 0-7zm-18 11l7 0 0 7-7 0zm18 0l0 7-7 0 0-7zm-33-18l0 9-5 0 0 5 5 0 0 9-6 2 1 4 5-2 0 12-5 0 2 4 4 0 3-1 1-16 5-2-1-4-4 2 0-8 5 0 0-5-5 0 0-9zm66 20l7 11 3-2-7-11zm2-20l-4 12-3 5 0-9-8 0 3-7-5-1-2 8-5 0 0 35 4 0 0-4 13 0 0-22 3 3 5-8 11 0-2 23-2 4-8 0 1 4 8 0 4-2 1-5 1-9 1-19-14 0 2-7zm-20 12l9 0 0 9-9 0zm0 23l0-11 9 0 0 11zm50-29l27 0 0 4-27 0zm-5-4l0 24-2 8-3 8 4 2 4-8 1-9 1-13 31 0 0-12zm28 12l-2 6-13 0 4-2-3-4-4 1 3 5-7 0 0 4 7 0 0 5-8 0 0 4 7 0-4 5-4 3 3 3 6-3 2-4 2-4 9 0 0 11 4 0 0-11 9 0 0-4-9 0 0-5 7 0 0-4-7 0 3-5zm-2 15l-9 0 0-5 9 0zm27-12l23 0 0 3-23 0zm0-5l23 0 0 3-23 0zm9 16l0 3-7 0 3-3zm4 0l6 0 2 3-8 0zm-17-19l0 14 8 0-2 2-12 0 0 3 9 0-10 6 3 3 6-3 0 8 4 0 0-7 7 0 0 9 4 0 0-9 8 0 0 4-4 0 1 3 5 0 3-2 0-6 5 3 3-4-11-5 10 0 0-3-26 0 2-2 19 0 0-14zm21-9l0 3-11 0 0-3-5 0 0 3-10 0 0 3 10 0 0 2 5 0 0-2 11 0 0 2 4 0 0-2 11 0 0-3-11 0 0-3zm45 33l13 11 4-3-13-10zm-12-2l-3 3-9 7 3 3 5-3 9-8zm-11-21l0 4 9 0 0 10-11 0 0 5 43 0 0-5-11 0 0-10 9 0 0-4-9 0 0-9-4 0 0 9-13 0 0-9-4 0 0 9zm13 14l0-10 13 0 0 10zm43-10l21 0 0 3-21 0zm-4-4l0 10 30 0 0-10zm12 19l0 2-19 0 0 4 19 0 0 5-8 0 1 4 7 0 4-1 1-2 0-6 19 0 0-4-19 0 14-6-3-2-30 0 0 3 22 0zm-1-28l1 3-18 0 0 4 41 0 0-4-18 0-2-4zM6929 1453l9 5 3-4-10-4zm-2 11l2 4 13-4-1-4zm6 6l0 13 5 0 0-9 22 0 0 9 4 0 0-13zm14 6l-3 6-6 4-11 2 2 4 12-3 7-6 3-7zm2 9l18 7 2-4-17-6zm-2-37l-4 7-3 3 3 3 5-5 5 0-2 4-4 4-7 3 3 3 5-2 4-3 3-4 3 4 9 4 3-3-6-2-4-3-3-3 0-2 6 0-2 4 4 1 4-8-3-1-16 0 2-3zm51 21l13 0 0 4-13 0zm0-6l13 0 0 3-13 0zm-2 15l-6 9 4 2 6-10zm13 1l5 10 4-2-5-9zm-33-27l8 5 2-4-8-4zm-2 12l7 5 3-3-8-5zm0 25l4 2 3-5 4-10-4-2zm14-38l-1 21-1 9-4 8 4 3 4-9 2-10 0-18 25 0 0-4zm14 4l-1 4-7 0 0 17 8 0 0 12-5 0 1 4 5 0 3-2 1-14 8 0 0-17-10 0 2-3zm28-6l-4 11-3 4 4 2 4-6 9 0 0 8-18 0 0 4 15 0-10 10-7 3 4 4 11-8 5-6 0 17 5 0 0-17 11 10 6 4 3-4-6-3-11-10 15 0 0-4-18 0 0-8 15 0 0-4-15 0 0-8-5 0 0 8-7 0 2-6zm62 5l0 7-3 0 0-7zm-10 19l0 3 3 0-3 9-3 4 3 3 3-5 3-11 4 0-1 11 0 1-4 0 1 4 4 0 3-2 1-5 0-35-14 0 0 4 3 0 0 7-3 0 0 4 3 0 0 2 0 6zm10-8l0 8-3 0 0-8zm6-15l0 42 4 0 0-38 5 0-4 13 4 7 0 5-1 2-3 0 1 4 3 0 2-1 1-3 0-7-3-8 4-14-3-2zm-23 12l3 0-3 14-3-2zm-7 13l6 5-4 6-2 2 2 3 6-8 2 3 3-3-3-4 2-6 1-15-6 0 1-10-3 0-1 10-4 0 0 4 3 0zM6959 2117l-4 16 0-3-4 0 5-11-4-1-3 7 0-3-5 0 0-5-5 0 0 5-5 0 0 4 5 0 0 4-7 0 0 4 11 0-3 3-4 0 0 3-5 2 3 4 8-6 4 0-5 4 0 3-9 1 0 4 9-1 0 6-5 0 1 4 5 0 3-2 1-9 9 0 0-4-9 1 0-2 6-6 3 2 3-4 4 11-7 7-4 2 3 4 4-2 6-7 5 7 4 2 3-4-4-2-5-7 2-5 3-13 3 0 0-4-13 0 2-8zm-13 20l2-3 6 0-2 4-2-2zm-2-11l5 0-3 4-2 0zm24 4l-4 13-3-13zm29 9l0 4-14 0 0 4 12 0-3 5-6 3-6 2 2 4 8-3 6-5 4-6 13 0-2 9-10 0 1 4 10 0 2-1 3-7 1-9-17 0 1-4zm14-13l-10 6-9-6zm-16-9l-8 8-6 4 3 3 6-3 6 4-17 3 2 4 20-4 6 2 13 2 2-4-16-2 9-7 3-4-2-1-20 0 3-4zm48 12l-4 15-4-12 1-3zm-9-12l-5 17-3 7 4 2 3-5 4 10-3 4-9 5 4 4 8-5 3-4 6 5 7 2 15 1 2-5-16-1-6-2-6-4 5-14 1-9-3-1-8 1 2-7zm18 0l0 35 5 0 0-19 7 11 4-3-10-13-1 1 0-12zM6966 2798l5 20 5-1-6-20zm-6-12l0 38-1 1-6 0 2 5 7-1 2-2 0-41zm-7 11l-3 14-2 6 3 2 3-6 3-15zm-21 14l1 4 5-2 0 13-4 0 1 4 4-1 3-1 1-17 5-2 0-4-5 2 0-5 8-11-3-2-15 0 0 4 11 0-6 8 0 7zm71-8l0 4-6 0 0-4zm-21 4l0 23 4 0 0-3 29 0 0 3 5 0 0-23-13 0 0-4 14 0 0-4-41 0 0 4 13 0 0 4zm4 16l0-5 3 3 5-3 3-4 0-4 6 0 0 7 2 1 10 1 0 4zm21-13l8 0 0 5-7 0zm-21 8l0-8 7 0 0 3-2 3zm20-32l0 4-12 0 0-4-4 0 0 4-10 0 0 4 10 0 0 4 4 0 0-4 12 0 0 4 5 0 0-4 10 0 0-4-10 0 0-4zM6940 3455l-5 15-3 6 3 3 7-13 8 0-3 12-7-4-2 3 7 5-4 6-9 7 3 3 9-7 7-12 4-16-3-1-9 0 2-6zm18 0l0 44 5 0 0-25 9 9 4-3-11-11-2 2 0-16zm47 25l4 5-7 0 0-7 9 0 0-4-9 0 0-5 10 0 0-4-23 0 0 4 9 0 0 5-8 0 0 4 8 0 0 7-10 0 0 4 25 0 0-4-4 0 3-2-3-3-2-2zm-24-23l0 42 4 0 0-3 30 0 0 3 5 0 0-42zm4 35l0-31 30 0 0 31zm43-33l7 7 3-3-7-7zm14 6l0 4 6 0-1 6-8 0 0 4 30 0 0-4-5 0 1-10-12 0 1-4 14 0 0-4-27 0 0 4 9 0-1 4zm9 10l1-6 8 0 0 6zm-8 7l0 17 4 0 0-2 15 0 0 2 4 0 0-17zm4 11l0-7 15 0 0 7zm-15 5l11-8-2-4-5 4 0-20-10 0 0 4 6 0 0 16-2 4zm60-19l0 3-18 0 0 4 18 0 0 8-9 0 2 5 7-1 4-1 1-3 0-8 19 0 0-4-19 0 0-2 11-7-3-2-23 0 0 4 17 0zm-1-23l3 7-9 0 1-1-4-6-4 1 4 6-8 0 0 10 5 0 0-6 31 0 0 6 5 0 0-10-8 0 5-6-5-2-4 8-7 0 2-1-3-7zm54 0l3 5-12 0 0 9 4 0 0 3 19 0 0-3 4 0 0-9-11 0-2-6zm-5 13l0-4 19 0 0 4zm-4 9l0 4 6 0-1 6-3 4-6 3 3 4 7-4 3-6 2-7 4 0 0 11 0 3 2 2 6 0 3 0 1-3 1-5-4-1-1 5-4 0 0-12 8 0 0-4zm-15-21l0 42 4 0 0-38 6 0-4 10 4 7 0 4-1 2-4 0 1 4 4 0 3-3 1-2 0-5-4-7 5-12-3-2zm73 4l0 25 4 0 0-25zm10-5l0 37-1 1-7 0 2 5 8-1 2-2 0-40zm-29 1l3 6-11 0 0 4 16 0-3 11-8-8-3 3 9 10-7 9-4 3 3 4 4-4 7-9 5 8 4-3-7-9 5-15 3 0 0-4-11 0 3-2-4-6zm45-2l0 9-6 0 0 4 6 0-4 13-3 4 3 5 4-11 0 20 4 0 0-24 3 6 3-3-6-10 5 0 0-4-5 0 0-9zm12 20l5-1-2 5-8 7 4 3 8-9 2-6 5 0-4 9-6 8-7 5 4 3 7-6 6-9 4-10 2 0-1 11-2 9-1 0-5 0 1 4 8-1 3-4 2-23-18 0 14-11-3-2-20 0 0 5 14 0-9 6-5 3zm32 16l2 4 2-1-1-4zm19-36l-6 3-15 5 2 3 9-3 0 2 7 0 0 2-12 0 0 3 12 0 0 3-3 0-2-3-3 1 1 2-8 0 0 3 7 0-3 2-8 4 2 3 2-1 0 1 5 0 0 2-8 0 0 3 8 0 0 4-9 1 1 3 18-2 0-3-2 1 1-4-3 0-1 4-2 0 0-4 7 0 0-3-7 0 0-2 5 0 0-2 1 1 2-3-8-5 19 0-3 2-8 4 2 3 2-1 0 1 5 0 0 2-8 0 0 3 8 0 0 4-4 0 2 0-2-4-3 1 2 3-3 0 0 4 22 0 0-4-5 0 2-3-3-1-2 4-2 0 0-4 9 0 0-3-9 0 0-2 5 0 0-2 3 1 2-2-6-3-4-1 1-1-2-1 8 0 0-3-9 0 2-2-4-1 7 0 0-3-12 0 0-2 7 0 0-2 9 3 2-4-17-5zm-7 7l6-3 7 3zm14 8l-2 3-3 0 0-3zm-22 12l4-3 5 3zm20 0l4-2 5 2zM6858 4130l0 3 9 0 0 3-11 0 0 4 11 0 0 3-9 0 0 3 9 0 0 3-9 0 0 4 9 0 0 3-11 0 0 3 11 0 0 4 4 0 0-4 13 0 0-3-13 0 0-3 11 0 0-4-11 0 0-3 11 0 0-6 2 0 0-4-2 0 0-6-11 0 0-4-4 0 0 4zm13 10l7 0 0 3-7 0zm0-4l0-3 7 0 0 3zm-27 12l3-2 5 0-3 10-3-6-3 1 4 9-5 7 3 3 5-7 6 4 6 1 22 1 1-4-22-1-6-1-5-3 4-17-6-1 6-12-3-2-10 1 0 4 7 0-4 9-3 3zm45 14l0 4 43 0 0-4-19 0 0-26 16 0 0-5-37 0 0 5 16 0 0 26zm72-35l3 5-12 0 0 9 4 0 0 3 19 0 0-3 4 0 0-9-11 0-2-6zm-5 13l0-4 19 0 0 4zm-4 9l0 4 6 0-1 6-3 4-6 3 3 4 7-4 3-6 2-7 4 0 0 11 0 3 2 2 6 0 3 0 1-3 1-5-4-1-1 5-4 0 0-12 8 0 0-4zm-15-21l0 42 4 0 0-38 6 0-4 10 4 7 0 4-1 2-4 0 1 4 4 0 3-3 1-2 0-5-4-7 5-12-3-2zm56 4l23 0 0 6-23 0zm-4-4l0 14 31 0 0-14zm-3 18l0 4 16 0-1 4-18 0 0 4 17 0-3 4-6 2-8 2 2 4 10-3 6-3 4-6 4 6 6 4 8 2 3-4-8-1-6-3-3-4 16 0 0-4-19 0 0-4 17 0 0-4zm81-18l-6 7 0-3-11 0 0-6-4 0 0 6-12 0 0 4 12 0 0 6-16 0 0 4 18 0-19 10 3 4 11-5 0 12 3 2 17 0 5-1 2-2 1-5-4-2-2 6-16 0-2-2 0-4 20-6-4-3-16 6 0-4 8-6 18 0 0-4-13 0 11-12zm-17 14l0-6 10 0-6 6zm37-16l-1 27-2 7-5 7 4 3 5-7 2-9 1-28zm-8 6l0 22 4 0 0-22zm15 6l0 25 5 0 0-21 5 0 0 28 4 0 0-28 6 0 0 16-4 1 1 4 6-1 1-4 0-20-10 0 0-5 12 0 0-4-27 0 0 4 11 0 0 5z"/>
<path fill="#ffffff" stroke="#ffffff" stroke-width="4" d="M271 726l-7 16-2 6 2 4-3 2-2 0-5-5 1-2 15-21zm-16-8l6 2 0 4-3 1-2-1-4-5 1-1zm40-6l3 1 0 3-2 2-6 0 0 15 16 1 4 2-1 4-2 1-5-1-11-1-11 1-7 3-2-1-2-2 0-2 13-3 1-3 1-12-5-1-2-2 6-3zm-23-9l2 1 0 3-2 2-2 1-4-4-2-5 4 0zm102 30l7 1 7 5-1 5-1 2-2 0-3-2-6-8zm-30 0l1 5-1 4-2 3-4 1-1-6 5-8zm9-30l3 10 0 3-1 2-1 1-2-5-3 1-2-1 1-2 3-2-1-7zm15-4l4 3 0 3-2 4 7 0 1 1-2 3-7 0-6 7 0 5 7 2 3 3-4 19-3 5-6 3-2-2-4-7 1-1 5 2 4-6 2-11-1-2-3-1-10 16-12 10 1-3 8-10 6-12-2 0-4 2-1-2 2-2 7-3 1-4 6-8 3-12zm84 11l2 3 0 7 15 0 4 3-1 4-3 1-5-2-9 0-2 24-2 6-2 0-1-6 0-24-8 0-1 7-4 7-7 8-4 3-2 1 9-15 3-9-11 2-2-1-1-3 14-4 1-6 2-2 2 2 1 5 8 0 0-9 2-2zm5-6l2 2 0 3-17 1-5 1-2 1-4-1-1-3 5-2zm55 2l4 2 2 2 0 3-1 2-5-1 1-2-2-5zm20-5l2 2 1 2-2 10 7-2 4 1 0 2-1 4-8 1 3 3 1 2-1 4-1 7 6 5 12 7 2 2 0 1-9 3-9-6-7-7-4 4-7 3-4 1-2 0 10-7 5-6-5-11-3 3 0 4-2 6-6 9-5 2-4-8 1-1 5 2 1-1 5-11-3-1-14 14-6 3 14-16 5-10-7 2-4 3-2-2-1-2 1-1 14-5 9-1 3 1 4-15 1-1zm1 18l-1-1-3 6 2 5 2 2 2-9zm-18 2l-1 0 3 3-1 4 4 0 5-8zm92-16l1 1-1 13 10-1 3 1 3 3 0 2-2 1-7-2-7-1 1 6 1 2 4 5 8 9 15 10-12 3-3-1-7-8-9-14-4 7-5 6-8 5-7 3 8-7 6-8 4-6 1-7 0-4-6 2-3 2-3-1-1-3 14-3 1-17 3 0zm87 14l1 2 0 3-5 5 2 2 14 0 1 2 0 2-1 1-13 0 1 7-2 8-6 6-3 1-8-9 8 2 3-6 1-8-13 3-3-1-1-2 3-2 13-3-2 0 1-4 1-1 3-5-10 2-1-1 0-2 11-3zm-17-15l1 4 0 2-1 0-4-2-1-5 2-1zm5-5l3 1 2 2 0 5-2 0-2-2zm19 0l0 5-7 6 17 3 2 3-1 3-9 1 1-4-2-1-13-1-7 0-7 2-5 2-2 9-1 1-2 0-1-6 4-8 19-4 7-8 2-5 2 0z"/>
<path fill="#eaf4fd" d="M261 788l-2 0-2-2-2-3 3 0 1 1 2 2 3-1 1-3 0-12-4 0 0-2 6 0 0 16-2 4zm14 0l0-20 3 0 0 20zm25 0l-2-6-9 0-3 6-2 0 8-20 3 0 8 20zm-7-18l-3 10 7 0zm28 18l-10-17 0 17-3 0 0-20 3 0 11 17 0-17 2 0 0 20zm10-10l1-6 4-3 5-1 4 0 3 2 2 2-3 1-1-2-3-1-6 1-2 3-1 6 3 5 6 1 5-2 0-4-6 0 0-2 8 0 0 7-5 3-7 0-5-3-1-3zm42 5l-1 3-4 2-7 0-3-2-1-3 2 0 2 2 4 1 4-1 2-2-2-3-10-3-1-3 1-4 2-2 4 0 4 0 3 2 1 2-3 1-1-2-5-1-3 1-1 3 2 2 9 3zm15 5l-5-1-3-3 0-16 3 0 0 16 2 1 3 1 3-1 2-1 1-16 2 0 0 15-2 4zm46-10l-1 4-2 4-3 2-4 0-4 0-3-2-2-3-1-5 1-6 2-2 2-1 5-1 4 0 4 3 1 3zm-3 0l-2-6-5-2-5 2-2 6 2 6 5 2 5-2zm25-4l-1 3-2 3-10 0 0 8-2 0 0-20 12 1 2 2zm-3 0l0-2-2-1-8-1 0 8 8 0 2-2zm10 14l0-20 15 0 0 2-12 0 0 7 11 0 0 2-11 0 0 7 13 0 0 2zm35 0l-10-17 0 17-3 0 0-20 4 0 10 17 0-17 3 0 0 20zm30 0l-5-1-2-3-1-16 3 0 1 16 1 1 3 1 3-1 2-1 1-16 3 0-1 15-2 4zm29 0l-10-17 0 17-3 0 0-20 3 0 11 17 0-17 3 0 0 20zm12 0l0-20 2 0 0 20zm19 0l-3 0-8-20 3 0 7 18 6-18 3 0zm14 0l0-20 15 0 0 2-13 0 0 7 12 0 0 2-12 0 0 7 13 0 0 2zm36 0l-5-8-6 0 0 8-3 0 0-20 11 0 5 3 0 3 0 2-2 2-2 1 5 9zm0-14l-1-2-1-1-9-1 0 8 9-1 1-1zm26 9l-1 3-5 2-7 0-3-2-1-3 2 0 2 2 4 1 4-1 2-2-2-3-10-3-1-3 1-4 2-2 4 0 4 0 3 2 1 2-3 1-1-2-5-1-3 1-1 3 2 2 10 3zm7 5l0-20 2 0 0 20zm18-18l0 18-3 0 0-18-6 0 0-2 16 0 0 2zm22 10l0 8-3 0 0-8-8-12 3 0 6 10 6-10 3 0z"/>
<path fill="#2a7db5" d="M206 919l-4 5-10 9 3 5 6-5 11-12zm1 15l-4 7-12 12 3 6 7-6 0 30 6 0 0-38 6-8zm11 9l0 32-6 0 0 7 45 0 0-7-17 0 0-21 13 0 0-6-13 0 0-18 14 0 0-7-38 0 0 7 17 0 0 45-8 0 0-32zm48-19l11 12 5-5-11-11zm7 58l19-14-2-6-10 7 0-29-18 0 0 7 11 0 0 23 0 3-3 3zm14-58l0 7 20 0 0 44-1 1-12 0 3 7 14-1 2-2 1-6 0-43 12 0 0-7zm56 23l0 37 7 0 0-3 32 0 0 2 7 0 0-17-39 0 0-4 35 0 0-15zm39 29l-32 0 0-5 32 0zm-23-42l2 4-26 0 0 12 7 0 0-7 45 0 0 7 7 0 0-12-26 0-3-5zm-9 18l28 0 0 5-28 0zm-10-34l-5 11-3 5 5 3 6-8 4 0 4 7 5-2-3-5 10 0 0-5-18 0 2-5zm30 0l-4 10-3 3 6 4 4-6 4 0 5 8 5-3-3-5 11 0 0-5-20 0 2-5zm63 22l10 0 0 8-10 0zm15 0l9 0 0 8-9 0zm-15-13l10 0 0 8-10 0zm15 0l9 0 0 8-9 0zm-26 48l0 6 45 0 0-6-18 0 0-8 16 0 0-6-16 0 0-7 15 0 0-32-37 0 0 32 15 0 0 7-15 0 0 6 15 0 0 8zm-21-5l2 7 22-8-1-6-8 2 0-16 7 0 0-6-7 0 0-14 8 0 0-6-22 0 0 6 8 0 0 14-7 0 0 6 7 0 0 18z"/>
<path fill="#f0f0f0" stroke="#f0f0f0" stroke-width="0.5" d="M180 1068l-4 17-3 8 0-6-6 0 8-15-6-2-5 10 0-5-8 0 0-7-6 0 0 7-9 0 0 6 9 0 0 6-11 0 0 6 16 0-5 4-5 0 0 5-7 4 4 5 12-8 6 0-7 5 0 5-15 1 1 6 14-1 0 9-8 0 2 6 7-1 4-2 1-4 0-9 14-1 0-6-14 1 0-2 11-10 4 4 4-7 6 18-5 5-5 4-6 4 3 6 7-4 9-9 8 9 5 4 5-6-5-3-9-10 4-8 5-20 4 0 0-6-20 0 3-12zm-21 29l4-4 10 0-4 6-3-2zm-3-16l8 0-4 6-4 0zm37 6l-3 14-2 6-6-20zm67-19l0 15-20 0 0 7 18 0-6 10-8 10-9 7 5 6 7-7 7-8 6-9 0 27-2 1-10 0 3 7 10-1 5-2 1-6 0-35 7 0 0-7-7 0 0-15zm-38 0l0 15-12 0 0 7 11 0-3 9-5 9-5 7 4 6 3-5 7-13 0 31 6 0 0-35 8 10 4-5-12-13 0-1 10 0 0-7-10 0 0-15zm72 0l-4 5-10 10 3 5 7-5 10-12zm2 16l-5 7-12 12 3 7 7-7 0 31 7 0 0-39 5-9zm11 9l0 33-7 0 0 6 45 0 0-6-17 0 0-21 14 0 0-7-14 0 0-18 15 0 0-7-39 0 0 7 17 0 0 46-8 0 0-33zm48-19l11 11 5-4-12-12zm7 58l18-13-2-7-9 7 0-29-18 0 0 7 11 0 0 23-1 3-3 4zm14-58l0 7 20 0 0 45-2 0-11 0 2 7 15-1 2-1 1-6 0-44 12 0 0-7zm56 23l0 37 7 0 0-2 32 0 0 2 7 0 0-18-39 0 0-4 35 0 0-15zm39 30l-32 0 0-6 32 0zm-23-43l3 4-27 0 0 12 7 0 0-7 45 0 0 7 7 0 0-12-26 0-3-5zm-9 18l29 0 0 5-29 0zm-9-34l-6 11-3 5 5 3 6-9 4 0 4 8 6-2-3-6 9 0 0-4-18 0 2-5zm30 0l-4 10-3 3 5 3 4-5 4 0 5 7 6-2-4-5 12 0 0-5-21 0 2-5zm63 22l9 0 0 8-9 0zm15 0l9 0 0 8-9 0zm-15-13l9 0 0 8-9 0zm15 0l9 0 0 8-9 0zm-27 48l0 6 46 0 0-6-18 0 0-8 16 0 0-6-16 0 0-7 15 0 0-33-37 0 0 33 15 0 0 7-16 0 0 6 16 0 0 8zm-20-5l1 7 23-8-1-6-8 2 0-16 7 0 0-6-7 0 0-14 8 0 0-6-23 0 0 6 9 0 0 14-8 0 0 6 8 0 0 18zM165 1244l8 13 6-4-9-12zm-12-46l-4 5-10 10 3 5 13-11 5-6zm25 1l0 8-15 0 0 6 15 0 0 8-19 0 0 6 29 0 0 7-28 0 0 6 28 0 0 17-10 0 2 7 8-1 5-2 1-2 1-19 9 0 0-6-9 0 0-7 9 0 0-6-19 0 0-8 16 0 0-6-16 0 0-8zm-23 15l-5 7-12 12 3 6 7-7 0 32 7 0 0-39 6-9zm86 1l22 0 0 4-22 0zm0-10l22 0 0 5-22 0zm-6-4l0 23 34 0 0-23zm1 36l-1 9-4 8-5 6 5 4 3-4 5-8 6 7 7 3 21 1 2-6-20 0 0-10 15 0 0-6-15 0 0-7 18 0 0-5-41 0 0 5 17 0 0 21-6-6-2-4 1-7zm-19-39l0 14-8 0 0 6 8 0 0 15-9 2 2 6 7-2 0 17-7 1 2 6 7 0 3-2 1-5 0-19 8-2-1-6-7 2 0-13 8 0 0-6-8 0 0-14zm82 18l-5 5-13 9 6 5 13-11 5-6zm21 3l13 11 5 5 5-4-18-16zm-18 9l-6 2 7 12 4 5-7 5-9 3-11 3 4 6 11-3 9-4 8-6 8 6 10 4 10 2 5-6-11-2-9-3-8-5 9-11 3-6-7-2-2 5-8 10-4-4zm4-28l4 8-29 0 0 6 62 0 0-6-27 0 1-1-5-9zm58-2l-3 5-11 10 4 5 6-5 11-12zm2 16l-5 7-12 12 4 7 6-7 0 31 7 0 0-39 6-9zm11 9l0 33-7 0 0 6 46 0 0-6-18 0 0-21 14 0 0-7-14 0 0-18 15 0 0-7-38 0 0 7 17 0 0 46-9 0 0-33zm48-19l11 11 5-4-11-12zm7 58l19-13-2-7-10 7 0-29-18 0 0 7 12 0 0 23-1 3-3 4zm14-58l0 7 21 0 0 45-2 0-12 0 3 7 14-1 2-1 2-6 0-44 12 0 0-7zm59 23l15 0 0 7-15 0zm22 0l16 0 0 7-16 0zm-22-11l15 0 0 6-15 0zm22 0l16 0 0 6-16 0zm11-17l-7 11-16 0 3-1-8-10-5 2 6 9-12 0 0 29 21 0 0 6-28 0 0 6 28 0 0 13 7 0 0-13 29 0 0-6-29 0 0-6 23 0 0-29-12 0 7-9zM226 1495l6 13 4 6-12 9 0-28zm6 0l15 0-7 14zm-14-31l0 64 6 0 0-5 4 5 12-9 12 9 5-6-5-2-7-6 4-7 5-17-4-1-26 0 0-18 21 0-1 8-13 1 1 5 14 0 4-2 1-3 1-16zm-17-2l0 14-10 0 0 7 10 0 0 13-11 3 2 7 9-3-1 18-9 0 2 7 9-1 4-2 1-5 0-19 9-2-1-6-8 2 0-12 8 0 0-7-8 0 0-14zm65 5l11 12 5-5-11-11zm7 59l19-13-2-6-10 6 0-29-18 0 0 7 12 0 0 23-1 3-3 4zm15-58l0 6 20 0 0 46-2 0-11 0 2 8 14-2 3-1 1-6 0-45 12 0 0-6zm56 23l0 37 7 0 0-2 33 0 0 2 6 0 0-18-39 0 0-4 36 0 0-15zm40 30l-33 0 0-6 33 0zm-23-43l2 4-27 0 0 12 7 0 0-7 46 0 0 7 7 0 0-12-26 0-3-6zm-10 18l29 0 0 5-29 0zm-9-34l-6 11-3 5 5 3 6-9 4 0 4 8 6-2-3-6 10 0 0-4-19 0 2-5zm30 0l-4 9-3 4 5 3 5-6 4 0 5 8 5-2-3-6 11 0 0-4-20 0 1-5zm64 22l9 0 0 8-9 0zm15 0l9 0 0 8-9 0zm-15-13l9 0 0 8-9 0zm15 0l9 0 0 8-9 0zm-27 49l0 6 46 0 0-6-18 0 0-9 16 0 0-6-16 0 0-7 15 0 0-33-37 0 0 33 15 0 0 7-16 0 0 6 16 0 0 9zm-21-6l2 7 22-8-1-6-7 2 0-16 7 0 0-6-7 0 0-14 8 0 0-6-23 0 0 6 8 0 0 14-7 0 0 6 7 0 0 18zM208 1617l8 10 5-3-8-10zm13 14l0 6 13 0-5 4-10 8 5 5 4-3 0 25 6 0 0-4 13 0 0 3 6 0 0-31-17 0 6-7 14 0 0-6-9 0 9-18-6-1-4 9 0-3-8 0 0-8-6 0 0 8-9 0 0 5 9 0 0 8zm17-8l6 0-5 8-1 0zm-4 38l13 0 0 6-13 0zm0-5l0-6 13 0 0 6zm-22 17l14-8-2-6-6 4 0-31-13 0 0 7 7 0 0 23 0 3-3 3zm-10-63l-7 20-6 8 4 7 4-7 0 38 6 0 0-50 5-15zm84 4l0 6 36 0 0-6zm-23 4l13 9 5-5-13-9zm23 44l31-4 3 5 6-3-13-21-5 3 6 10-21 2 10-18 24 0 0-6-46 0 0 6 14 0-8 15-4 4zm-8-27l-16 0 0 6 9 0 0 21-10 8 5 6 6-7 3-1 12 6 7 1 32 0 2-8-18 2-16 0-6-1-10-6zm112-9l-11 25 5 3 12-25zm-55 2l9 26 7-3-10-25zm36-17l0 55-11 0 0-55-7 0 0 55-19 0 0 6 63 0 0-6-19 0 0-55zm61 32l-1 7-21 0 0 5 18 0-5 7-8 5-10 3 4 6 12-5 8-6 7-10 20 0-1 7-3 7-3 1-12-1 2 6 14 0 4-2 3-4 1-6 2-13-26 0 2-6zm21-20l-5 3-11 6-9-5-4-3 1-1zm-26-13l-4 6-7 6-9 6 4 5 9-6 9 8-25 4 3 6 20-4 10-3 9 3 20 3 4-6-25-3 7-5 6-5 5-6-4-2-29 0 4-6zM210 1759l-5 10-6 9-8 8 7 4 7-8 7-10 5-11zm26-1l-7 3 7 11 7 10 8 8 6-5-8-8-7-9zm-37 61l44-4 4 8 7-4-17-24-6 3 8 10-31 2 14-18 6-10-8-4-12 22-7 9-4 3zm77-62l-8 15-5 6 7 4 6-9 17 0 0 10-30 0 0 6 63 0 0-6-26 0 0-10 21 0 0-6-21 0 0-10-7 0 0 10-14 0 4-8zm-4 38l0 28 7 0 0-3 32 0 0 3 7 0 0-28zm7 18l0-11 32 0 0 11zm65-27l0 37 7 0 0-2 33 0 0 2 6 0 0-18-39 0 0-4 36 0 0-15zm40 30l-33 0 0-6 33 0zm-23-43l2 4-27 0 0 12 7 0 0-7 46 0 0 7 7 0 0-12-26 0-3-6zm-10 18l29 0 0 5-29 0zm-9-34l-6 11-3 5 5 3 6-9 4 0 4 8 6-2-3-6 10 0 0-4-19 0 2-5zm30 0l-4 9-3 4 5 3 5-6 4 0 5 8 5-2-3-6 11 0 0-4-20 0 1-5zm64 22l9 0 0 8-9 0zm15 0l9 0 0 8-9 0zm-15-13l9 0 0 8-9 0zm15 0l9 0 0 8-9 0zm-27 49l0 6 46 0 0-6-18 0 0-9 16 0 0-6-16 0 0-7 15 0 0-33-37 0 0 33 15 0 0 7-16 0 0 6 16 0 0 9zm-21-6l2 7 22-8-1-6-7 2 0-16 7 0 0-6-7 0 0-14 8 0 0-6-23 0 0 6 8 0 0 14-7 0 0 6 7 0 0 18zM237 1933l1 26 2 3 4 1 6 0 3-1 3-5 1-8-6-2-1 9-6 1 0-24zm-13 0l-1 12-4 8-8 5 4 6 9-7 5-10 1-14zm-33 21l1 6 23-8-1-6zm39-55l3 9-16 0 0 6 12 0-9 11-5 2 2 7 31-4 2 5 6-3-10-16-6 3 4 6-17 1 10-12 19 0 0-6-21 0 5-1-4-9zm-38 29l10-2-8 11-3 2 2 6 21-5 0-6-12 2 14-20-6-3-4 7-7 1 11-20-7-3-6 15-4 6-3 2zm76-25l12 12 4-5-12-11zm-6 17l0 7 11 0 0 24-1 2-3 4 4 6 17-13-2-6-8 5 0-29zm41-22l0 23-18 0 0 7 18 0 0 36 7 0 0-36 17 0 0-7-17 0 0-23zm54 22l0 5 35 0 0-5zm0 10l0 5 35 0 0-5zm-1 11l0 23 6 0 0-3 25 0 0 3 6 0 0-23zm6 15l0-10 25 0 0 10zm6-56l5 9-21 0 0 6 46 0 0-6-24 0 5-2-5-9zm-20-2l-5 11-5 9-6 8 4 6 6-8 0 40 6 0 0-50 6-14zm73 21l31 0 0 5-31 0zm0 10l31 0 0 5-31 0zm0-19l31 0 0 4-31 0zm-2 33l0 11 1 5 4 3 22 1 6-1 3-4 1-7-6-2-1 5-1 2-20 0-2 0 0-2 0-11zm36 1l7 15 7-3-9-14zm-44-1l-7 15 6 3 7-16zm20-2l9 11 5-3-9-10 23 0 0-34-21 0 3-7-8-1-2 8-17 0 0 34 20 0z"/>
<path fill="#2a7fc2" d="M142 1333l0 6 46 0 0 17-35 0 0-11-7 0 0 35 1 7 5 4 10 1 25 0 10-2 4-5 3-10-7-3-1 8-3 4-6 1-31 0-3-2 0-3 0-17 35 0 0 3 7 0 0-33zm99 12l22 0 0 4-22 0zm0-10l22 0 0 5-22 0zm-6-4l0 23 34 0 0-23zm1 36l-1 9-4 8-5 6 5 4 3-4 5-8 6 7 7 3 21 1 2-6-20 0 0-10 15 0 0-6-15 0 0-7 18 0 0-5-41 0 0 5 17 0 0 21-6-6-2-4 1-7zm-19-39l0 14-8 0 0 6 8 0 0 15-9 2 2 6 7-2 0 17-7 1 2 6 7 0 3-2 1-5 0-19 8-2-1-6-7 2 0-13 8 0 0-6-8 0 0-14zm82 18l-5 5-13 9 6 5 13-11 5-6zm21 3l13 11 5 5 5-4-18-16zm-18 9l-6 2 7 12 4 5-7 5-9 3-11 3 4 6 11-3 9-4 8-6 8 6 10 4 10 2 5-6-11-2-9-3-8-5 9-11 3-6-7-2-2 5-8 10-4-4zm4-28l4 8-29 0 0 6 62 0 0-6-27 0 1-1-5-9zm58-2l-3 5-11 10 4 5 6-5 11-12zm2 16l-5 7-12 12 4 7 6-7 0 31 7 0 0-39 6-9zm11 9l0 33-7 0 0 6 46 0 0-6-18 0 0-21 14 0 0-7-14 0 0-18 15 0 0-7-38 0 0 7 17 0 0 46-9 0 0-33zm48-19l11 11 5-4-11-12zm7 58l19-13-2-7-10 7 0-29-18 0 0 7 12 0 0 23-1 3-3 4zm14-58l0 7 21 0 0 45-2 0-12 0 3 7 14-1 2-1 2-6 0-44 12 0 0-7zm59 23l15 0 0 7-15 0zm22 0l16 0 0 7-16 0zm-22-11l15 0 0 6-15 0zm22 0l16 0 0 6-16 0zm11-17l-7 11-16 0 3-1-8-10-5 2 6 9-12 0 0 29 21 0 0 6-28 0 0 6 28 0 0 13 7 0 0-13 29 0 0-6-29 0 0-6 23 0 0-29-12 0 7-9z"/>
<path fill="#777777" d="M881 945l0 34 5 0 0-34zm13-7l0 50-2 1-7 0 1 5 10-1 2-3 0-52zm-41 33l9 7-4 5-5 5-6 3 3 3 11-8 9-12 5-18-3-1-14 0 2-9 17 0 0-5-31 0 0 5 10 0-6 17-5 6 4 3 7-13 14 0-5 15-9-7zm65 23l21-7-1-4-15 4 0-13 10-8 6 11 9 9 11 6 3-4-6-2-9-7 11-8-3-3-11 9-6-11 22 0 0-4-24 0 0-6 19 0 0-3-19 0 0-6 22 0 0-4-22 0 0-5-5 0 0 5-22 0 0 4 22 0 0 6-18 0 0 3 18 0 0 6-24 0 0 4 20 0-6 5-16 7 3 4 11-5 0 9-1 2-2 2zm74-33l0 11-1 7-7 6-17 5 3 4 17-6 8-8 2-8 0-11zm5 21l21 12 3-3-21-12zm-23-29l0 28 5 0 0-24 31 0 0 24 5 0 0-28-22 0 4-7 24 0 0-5-52 0 0 5 22 0-2 7z"/>
<path fill="#4b94e0" d="M1215 991l0-4 3-5 4-5 13-12 3-4 0-3-1-4-4-4-5 0-4 2-3 6-5-1 0-3 2-3 5-4 7-2 8 2 5 4 1 3 0 5-1 4-4 5-13 12-4 6 23 0 0 5zm36 0l0-4 3-5 5-5 12-12 3-4 0-3 0-4-5-4-5 0-4 2-2 6-6-1 0-3 2-3 5-4 7-2 8 2 5 4 1 3 0 5-1 4-3 5-14 12-4 6 23 0 0 5zm38 0l0-5 12 0 0-35-10 8 0-6 10-7 5 0 0 40 11 0 0 5zm36 0l0-5 12 0 0-35-10 8 0-6 10-7 6 0 0 40 10 0 0 5zm65-23l-2 13-2 4-3 4-4 2-4 0-5 0-4-2-3-4-3-10 0-14 3-10 3-3 4-2 5-1 5 1 3 2 3 3 3 5zm-6 0l-1-10-3-6-5-2-6 2-3 6-1 10 1 11 3 6 6 2 5-2 3-6zm42 10l-2 7-5 5-4 1-4 0-8-1-5-4-3-7 6 0 2 4 3 3 5 1 7-3 1-1 1-5 0-2-3-4-5-1-6-1 0-5 8 0 4-3 1-4-1-4-3-3-7-1-5 3-1 4-6 0 2-6 3-3 6-2 8 0 3 1 5 4 2 6-1 5-3 4-6 2 4 0 4 3 3 5zm40 13l-5-13-21 0-5 13-6 0 18-45 7 0 18 45zm-15-40l-9 22 17 0zm55 17l-2 13-2 4-3 4-4 2-5 0-4 0-4-2-3-4-4-10 0-14 4-10 3-3 4-2 4-1 5 1 4 2 3 3 2 5zm-6 0l-1-10-3-6-6-2-5 2-3 6-1 10 1 11 3 6 5 2 6-2 3-6zm42 0l-2 13-2 4-3 4-4 2-5 0-4 0-4-2-3-4-4-10 0-14 4-10 3-3 4-2 5-1 4 1 4 2 3 3 2 5zm-6 0l-1-10-3-6-5-2-6 2-3 6-1 10 1 11 3 6 5 2 6-2 3-6zm14 23l0-5 11 0 0-35-10 8 0-6 10-7 6 0 0 40 11 0 0 5zm64-24l-2 13-2 5-4 4-4 2-4 0-6-1-5-3-2-5 5-1 2 3 2 2 4 1 5-2 4-6 1-10-2 3-7 3-6 0-6-4-2-3-1-8 0-4 4-7 3-2 8-2 4 1 4 2 3 3 2 4zm-6-5l-2-6-3-5-2-1-3 0-4 1-3 4-1 5 1 6 3 4 2 1 4 0 4-2 3-4z"/>
<path fill="#6aa6e6" d="M1663 980l11-11-11-11 3-3 11 11 11-11 3 3-11 11 11 11-3 3-11-11-11 12z"/>
<path fill="#1f87e6" d="M815 1106l-3 4-10 9 4 7 12-11 5-6zm2 15l-4 6-11 11 3 8 5-5 0 27 8 0 0-36 6-9zm11 8l0 30-6 0 0 8 43 0 0-8-15 0 0-18 12 0 0-7-12 0 0-16 13 0 0-8-37 0 0 8 16 0 0 41-7 0 0-30zm45-18l10 12 6-6-11-11zm6 56l19-13-2-8-9 6 0-26-18 0 0 8 10 0 0 20-1 3-3 3zm15-56l0 8 18 0-1 40-1 0-11 0 3 9 11-1 3-1 2-1 2-7 0-39 11 0 0-8zm56 23l12 0 0 5-12 0zm20 0l13 0 0 5-13 0zm-20-10l12 0 0 4-12 0zm20 0l13 0 0 4-13 0zm8-18l-5 11-15 0 3-1-7-10-7 3 6 8-11 0 0 28 20 0 0 5-26 0 0 7 26 0 0 11 8 0 0-11 27 0 0-7-27 0 0-5 21 0 0-28-9 0 5-8zm49 22l4 28 8-2-4-27zm9-21l3 10-15 0 0 8 37 0 0-8-21 0 7-2-3-10zm-15 51l0 8 42 0 0-8-11 0 6-30-8-1-6 31zm-4-52l-4 9-6 9-6 7 5 8 4-5 0 34 8 0 0-46 6-14zm66 25l3-1 2-2 1-3-1-3-2-3-3 0-4 0-2 3-1 3 1 3 2 2zm0 32l3-1 2-2 1-3-1-4-2-2-3-1-4 1-2 2-1 4 1 3 2 2zm62-22l-9 13 7 4 9-14zm-4-11l0 7 18 0-3 11-7 8-12 6 5 6 14-7 7-11 4-13 10 0 0 12-3 11-2 1-9 0 2 7 13-1 4-3 2-9 1-9 4 12 7-2-6-16-5 2 1-12-18 0 0-6-8 0-1 6zm33-24l0 5-16 0 0-5-8 0 0 5-14 0 0 8 14 0 0 6 8 0 0-6 16 0 0 6 8 0 0-6 13 0 0-8-13 0 0-5zm31 16l-2 13-3 6 7 2 2-5 3-14zm9-15l-1 33-3 12-8 10 6 6 9-12 4-13 1-14 4 14 6-3-5-17-5 2 0-18zm38 0l0 30-7-14-5 2 0-17-7 0 0 56 7 0 0-36 6 15 6-4 0 29 8 0 0-61zm24 22l-6 12-3 5 7 5 9-19zm13-23l0 11-18 0 0 8 18 0-2 13-7 13-12 11 6 7 15-13 6-16 2-15 11 0-1 18-1 10-2 5-2 1-10-1 3 9 11 0 4-2 2-2 2-5 3-26 6 20 8-3-8-21-6 2 0-13-19 0 0-11zm72 33l0 4-25 0 0 8 25 0 0 9-12 0 3 8 9-1 6-2 2-2 0-12 26 0 0-8-26 0 0-1 15-10-5-4-32 0 0 7 22 0zm-2-31l5 8-12 0 3-1-6-9-7 3 5 7-11 0 0 15 8 0 0-8 43 0 0 8 7 0 0-15-9 0 5-7-8-3-6 10-8 0 4-1-6-10zm57 25l31 0 0 8-31 0zm4 21l1 14 8-1-2-14zm13 0l5 13 8-2-5-13zm14-1l8 15 8-3-9-14zm-38-2l-5 10-4 3 8 4 3-4 5-11zm0-26l0 24 46 0 0-24-20 0 0-6 24 0 0-7-24 0 0-6-8 0 0 19zM821 1278l0 7 37 0 0-7zm-5-17l36 0 0 6-36 0zm-8-6l-1 31-1 13-5 11 8 4 4-13 2-14 1-13 44 0 0-19zm37 44l3 6-18 1 6-10 16 0zm-24 15l31-3 2 4 8-3-10-16 11 0 0-7-46 0 0 7 9 0-5 8-3 3zm48-52l13 10 6-7-14-9zm-1 41l8 5 12-21-6-5zm28-51l-3 10-4 10-5 8 8 4 7-14 21 0-4 11 7 3 7-19-6-3-22 0 2-9zm7 20l-1 14-6 12-13 10 6 7 9-6 6-7 4-7 5 8 5 6 8 5 5-7-9-6-7-9-4-11 1-9zm31 38l10-53 8 0-10 53zm21-18l0 8 31 0 0 14 8 0 0-14 23 0 0-8-23 0 0-10 17 0 0-7-17 0 0-8 19 0 0-8-38 0 2-5-8-3-3 9-5 8-6 6 7 5 9-12 15 0 0 8-20 0 0 17zm19 0l0-10 12 0 0 10zm48 11l2 8 21-9-5 8 7 4 4-6 6-18 6 10-11 8 5 6 11-8 11 8 5-6-11-9 7-15 2-9-5-2-5 0 5-17-31 0 0 7 7 0-2 14-2 13-3 10-1-5zm38-40l7 0-5 17 11 0-5 14-4-5-5-12zm-37 18l9-2-8 9-3 3 2 7 22-8 0-6-10 2 12-17-7-4-4 7-6 1 10-18-7-4-6 15-4 6-3 2zm79-4l4-1 2-2 1-3-1-3-2-3-4 0-3 0-2 3-1 3 1 3 2 2zm0 32l4-1 2-2 1-3-1-4-2-2-4-1-3 1-2 2-1 4 1 3 2 2zm53-1l0-7 3-5 5-5 12-11 2-4 1-3 0-4-3-2-3-1-5 2-2 5-10 0 3-8 5-5 4-1 10 0 4 1 5 5 2 7 0 5-5 7-14 12-3 4 23 0 0 8zm73-24l-1 14-3 5-3 3-4 2-6 1-9-3-5-8-2-14 0-11 3-7 4-5 6-2 9 0 4 2 3 4 3 5zm-9 0l-1-11-1-4-4-3-5 1-2 2-1 7 0 15 1 7 4 3 3 0 3-1 2-6zm15 24l0-7 3-5 5-5 12-11 3-4 0-3 0-4-2-2-4-1-5 2-2 5-10 0 3-8 6-5 3-1 10 0 4 1 5 5 2 7 0 5-4 7-15 12-3 4 23 0 0 8zm41 0l0-7 13 0 0-33-12 7 0-8 12-8 9 0 0 42 12 0 0 7zM2074 1251l-1 7-16 0 0 8 14 0-2 5-18 0 0 8 16 0-4 13 29 0-9 9-14-5-5 6 23 8 9 5 5-7-9-4 16-16-7-4-27 0 1-5 36 0 0-8-33 0 1-5 27 0 0-8-25 0 2-6zm45 17l8 25 8-3-9-24zm51-2l-10 23 0-36-8 0 0 50-9 0 0-50-8 0 0 50-17 0 0 8 60 0 0-8-18 0 0-12 7 3 10-25zm28 11l3-1 2-2 1-3-1-3-2-3-3 0-4 0-2 3-1 3 1 3 2 2zm0 32l3-1 2-2 1-3-1-4-2-2-3-1-4 1-2 2-1 4 1 3 2 2zm52-7l0 8 61 0 0-8-26 0 0-35 23 0 0-8-54 0 0 8 22 0 0 35zm102-41l15 0 0 9-15 0zm-7-7l0 23 30 0 0-23zm-1 39l0 7 12 0 0 6-16 0 0 7 38 0 0-7-14 0 0-6 11 0 0-7-11 0 0-5 13 0 0-7-35 0 0 7 14 0 0 5zm-7-41l-21 6 2 6 8-1 0 7-9 0 0 8 8 0-6 13-4 5 4 7 7-13 0 24 8 0 0-26 4 7 5-6-9-9 0-2 7 0 0-8-7 0 0-9 8-2zm47 6l9 11 7-5-10-10zm29 31l19 0 0 6-19 0zm-7-7l0 20 33 0 0-20zm5-16l8 0 0 6-12 0zm8-14l0 7-5 0 1-5-7-2-5 12-3 4 7 4-6 0 0 6 43 0 0-6-17 0 0-6 14 0 0-7-14 0 0-7zm-20 25l-16 0 0 8 8 0 0 17-8 5 5 7 6-6 2-1 10 5 6 1 32-1 2-7-18 1-15 0-6-1-8-4zm95 2l0 35 8 0 0-35zm-19 0l0 16-3 7-6 7 6 6 7-9 4-9 0-18zm-12-27l-4 9-5 9-5 7 4 8 3-4 0 33 8 0 0-38 5 6 8-5 6-7 6-7 11 14 7 4 5-6-7-5-7-7-5-7 1-3-8-1-5 8-7 8-10 7 0-7 7-14zM3334 1250l-1 40-4 9-8 8 5 5 10-9 4-11 1-13 0-29zm-10 13l-1 17-2 6 5 4 3-7 1-19zm19 15l0 7 6 0 0 18-11 0 0 7 26 0 0-7-8 0 0-18 7 0 0-7-7 0 0-17 7 0 0-7-21 0 0 7 7 0 0 17zm-42 22l2 7 20-5-1-7-6 2 0-14 5 0 0-7-5 0 0-15 6 0 0-7-20 0 0 7 7 0 0 15-6 0 0 7 6 0 0 15zm68 1l2 8 21-9-5 8 7 4 5-6 5-18 6 10-11 8 6 6 10-8 11 8 6-6-12-9 7-15 3-9-5-2-5 0 4-17-31 0 0 7 7 0-1 14-2 13-4 10-1-5zm39-40l6 0-4 17 11 0-6 14-4-5-5-12zm-38 18l9-2-7 9-4 3 3 7 21-8 0-6-10 2 12-17-7-4-4 7-5 1 10-18-8-4-6 15-4 6-2 2zm80-4l3-1 2-2 1-3-1-3-2-3-3 0-4 0-2 3-1 3 1 3 2 2zm0 32l3-1 2-2 1-3-1-4-2-2-3-1-4 1-2 2-1 4 1 3 2 2zm52-1l0-7 3-5 5-5 12-11 3-4 1-3-1-4-2-2-4-1-5 2-2 5-10 0 3-8 6-5 4-1 9 0 4 1 6 5 1 7 0 5-4 7-15 12-2 4 22 0 0 8zm71-56l-1 40-4 9-8 8 5 5 10-9 4-11 1-13 0-29zm-10 13l-1 17-2 6 5 4 3-7 1-19zm19 15l0 7 6 0 0 18-11 0 0 7 27 0 0-7-9 0 0-18 7 0 0-7-7 0 0-17 8 0 0-7-22 0 0 7 7 0 0 17zm-42 22l2 7 20-5-1-7-6 2 0-14 5 0 0-7-5 0 0-15 6 0 0-7-20 0 0 7 7 0 0 15-6 0 0 7 6 0 0 15zM4581 1262l-10 6-10-6zm-19-13l-5 6-6 6-9 4 5 6 8-4 7 5-23 4 4 8 5-1 0 29 8 0 0-2 29 0 0 2 9 0 0-29-44 0 21-7 9 3 19 4 5-7-24-5 10-8 4-5-6-3-20 0 2-4zm-6 50l11 0 0 5-11 0zm0-6l0-3 11 0 0 3zm29 6l0 5-10 0 0-5zm0-6l-10 0 0-3 10 0zm26-37l12 8 5-7-13-6zm-4 19l12 7 5-6-13-7zm2 31l6 6 12-21-6-6zm32-54l4 10-17 0 0 8 16 0 0 12-14 0 0 7 14 0 0 14-18 0 0 7 43 0 0-7-17 0 0-14 13 0 0-7-13 0 0-12 15 0 0-8-20 0 6-2-5-11zm47 23l3-1 2-2 1-3-1-3-2-3-3 0-4 0-2 3-1 3 1 3 2 2zm0 32l3-1 2-2 1-3-1-4-2-2-3-1-4 1-2 2-1 4 1 3 2 2zM817 1438l12 0 0 5-12 0zm20 0l13 0 0 5-13 0zm-20-10l12 0 0 4-12 0zm20 0l13 0 0 4-13 0zm8-18l-5 11-15 0 3-1-7-10-7 3 6 8-11 0 0 28 20 0 0 5-26 0 0 7 26 0 0 11 8 0 0-11 27 0 0-7-27 0 0-5 21 0 0-28-9 0 5-8zm49 22l4 28 8-2-4-27zm9-21l3 10-15 0 0 8 37 0 0-8-21 0 7-2-3-10zm-15 51l0 8 42 0 0-8-11 0 6-30-8-1-6 31zm-4-52l-4 9-6 9-6 7 5 8 4-5 0 34 8 0 0-46 6-14zm81-1l-8 10-11 8-12 6 6 7 6-4 0 5 16 0 0 8-15 0 0 6 15 0 0 9-24 0 0 7 57 0 0-7-25 0 0-9 16 0 0-6-16 0 0-8 17 0 0-4 6 3 6-7-11-5-9-6-8-8 1-2zm-15 25l11-9 5-5 16 14zm81 3l-3 15-4 6 7 4 3-7 5-17zm20 1l6 23 7-2-6-23zm-17-28l-5 14-3 6 0-1-7 0 0-10 9-2-5-7-21 6 2 6 7-1 0 8-9 0 0 7 8 0-6 13-3 5 3 7 7-13 0 24 8 0 0-27 4 8 4-7-8-9 0-1 7 0 0-3 5 3 6-11 4 0 0 38-1 2-6 0 2 7 10-1 3-4 0-42 6 0-3 7 7 1 5-14-5-1-19 0 2-7zm49 25l3-1 2-2 1-3-1-3-2-3-3 0-4 0-2 3-1 3 1 3 2 2zm0 32l3-1 2-2 1-3-1-4-2-2-3-1-4 1-2 2-1 4 1 3 2 2zm62-22l-9 13 7 4 9-14zm-4-11l0 7 18 0-3 11-7 8-12 6 5 6 14-7 7-11 4-13 10 0 0 12-3 11-2 1-9 0 2 7 13-1 4-3 2-9 1-9 4 12 7-2-6-16-5 2 1-12-18 0 0-6-8 0-1 6zm33-24l0 5-16 0 0-5-8 0 0 5-14 0 0 8 14 0 0 6 8 0 0-6 16 0 0 6 8 0 0-6 13 0 0-8-13 0 0-5zm31 16l-2 13-3 6 7 2 2-5 3-14zm9-15l-1 33-3 12-8 10 6 6 9-12 4-13 1-14 4 14 6-3-5-17-5 2 0-18zm38 0l0 30-7-14-5 2 0-17-7 0 0 56 7 0 0-36 6 15 6-4 0 29 8 0 0-61zm55 10l0 16-15 0 0-16zm-38 16l0 8 14 0-2 8-5 7-8 7 7 6 9-9 5-9 2-10 16 0 0 27 8 0 0-27 14 0 0-8-14 0 0-16 12 0 0-7-56 0 0 7 13 0 0 16zm102-27l-2 10-3 10-4 8 0-4-13 0 0-7 15 0 0-7-14 0 5-2-3-8-7 1 2 9-12 0 0 7 6 0 0 22-3 9-5 9 6 5 6-10 3-10 1-11 5 0 0 13-1 10-1 1-6 0 2 7 7 0 4-3 2-5 1-23 4 5 4-6 5 14-8 8-6 3 4 7 6-3 8-8 8 8 5 3 5-7-5-3-8-8 3-7 5-18 5 0 0-7-20 0 2-11zm4 19l9 0-4 17zm52-19l0 18-25 0 0 8 23 0-4 11-8 10-12 8 6 7 12-8 8-10 5-10 6 12 8 9 11 7 6-8-11-6-8-10-6-12 23 0 0-8-26 0 1-18zm67 33l0 4-25 0 0 8 25 0 0 9-12 0 3 8 9-1 6-2 2-2 0-12 26 0 0-8-26 0 0-1 15-10-5-4-32 0 0 7 22 0zm-2-31l5 8-12 0 3-1-6-9-7 3 5 7-11 0 0 15 8 0 0-8 43 0 0 8 7 0 0-15-9 0 5-7-8-3-6 10-8 0 4-1-6-10zM2090 1430l11 0-6 18-4-11-2-6zm-36 31l15-6 0 17 7 0 0-33 5 6 4-5 6 15-8 8-6 3 5 6 10-6 4-4 7 7 5 3 5-7-5-2-8-8 4-8 5-17 3 0 0-8-20 0 2-11-8-1-2 10-3 10-5 7 0-26-7 0 0 36-8 3 0-33-7 0 0 32-1 2-2 3zm89-14l0 6-1 4-7 5-17 4 5 6 19-5 8-7 2-7 0-6zm7 16l24 9 4-6-24-9zm-24-25l0 21 8 0 0-13 28 0 0 13 9 0 0-21zm22-28l0 10-9 2 2 5 7-1 1 5 3 3 6 1 16-1 3-3 2-6-7-3-2 6-11 0-3-1 0-3 21-7-5-6-16 6 0-7zm-13-1l-5 6-13 8 5 6 7-4 0 11 8 0 0-18 5-6zm74 1l-1 16-6 21-19 19 7 6 11-9 8-11 5-12 5 12 9 11 12 9 6-7-17-14-9-17-2-14 0-10zm55 25l3-1 3-2 0-3 0-3-3-3-3 0-3 0-2 3-1 3 1 3 2 2zm0 32l3-1 3-2 0-3 0-4-3-2-3-1-3 1-2 2-1 4 1 3 2 2zm79-57l-1 18-24 0 0 8 23 0-4 11-8 10-13 8 6 7 12-8 8-10 5-10 7 12 8 9 10 7 6-8-11-6-8-10-6-12 24 0 0-8-26 0 0-18zm67 52l-12 0 0-8 12 0zm7 0l0-8 13 0 0 8zm-27-30l0 40 8 0 0-3 32 0 0 3 8 0 0-40zm20 15l-12 0 0-8 12 0zm7 0l0-8 13 0 0 8zm4-37l0 6-15 0 0-6-8 0 0 6-14 0 0 7 14 0 0 7 8 0 0-7 15 0 0 7 8 0 0-7 14 0 0-7-14 0 0-6zM3342 1423l11 0-6 18-4-11-2-6zm-36 31l15-6 0 17 7 0 0-33 5 6 4-5 6 15-8 8-6 3 5 6 10-6 4-4 7 7 5 3 5-7-5-2-8-8 4-8 5-17 3 0 0-8-20 0 2-11-8-1-2 10-3 10-5 7 0-26-7 0 0 36-8 3 0-33-7 0 0 32-1 2-2 3zm89-14l0 6-1 4-7 5-17 4 5 6 19-5 8-7 2-7 0-6zm7 16l24 9 4-6-24-9zm-24-25l0 21 8 0 0-13 28 0 0 13 9 0 0-21zm22-28l0 10-9 2 2 5 7-1 1 5 3 3 6 1 16-1 3-3 2-6-7-3-2 6-11 0-3-1 0-3 21-7-5-6-16 6 0-7zm-13-1l-5 6-13 8 5 6 7-4 0 11 8 0 0-18 5-6zm75 32l0 6-13 0 0-6zm8 0l13 0 0 6-13 0zm-8-7l-13 0 0-7 13 0zm8 0l0-7 13 0 0 7zm-30-15l0 40 9 0 0-4 13 0 1 11 3 4 7 1 13 0 6-1 4-5 2-8-7-2 0-36-21 0 0-9-8 0 0 9zm50 36l-1 5-1 3-14 0-2 0-2-1 0-7zm15-39l10 10 5-5-10-10zm22 31l0 25 8 0 0-2 17 0 0 2 9 0 0-25-13 0 0-10 16 0 0-7-16 0 0-11 13-3-5-6-9 2-23 3 2 7 14-2 0 10-17 0 0 7 17 0 0 10zm8 16l0-9 17 0 0 9zm-33-33l0 8 8 0 0 19-1 4-3 4 4 6 16-14-3-7-6 5 0-25zm81 5l3-1 2-2 1-3-1-3-2-3-3 0-4 0-2 3-1 3 1 3 2 2zm0 32l3-1 2-2 1-3-1-4-2-2-3-1-4 1-2 2-1 4 1 3 2 2zm54-1l0-7 12 0 0-33-12 7 0-8 13-8 9 0 0 42 11 0 0 7zm72-13l-2 7-6 5-4 2-10 0-4-2-7-4-2-8 10-1 1 4 3 2 4 1 5-2 2-5-1-4-3-2-9-1 0-8 6 0 4-1 2-3-1-6-2-2-6 0-4 2-1 4-9-1 2-7 3-3 7-3 9 0 4 1 6 5 2 7-1 5-4 4-6 2 7 2 2 2 2 2zm40-1l-2 8-6 5-4 2-11 0-7-4-3-3-2-3 0-7 1-3 4-4 5-2-5-3-4-6 1-6 3-6 8-3 9 0 4 1 6 5 2 7-1 5-3 3-5 3 3 0 4 3 3 5zm-11-22l-2-5-5-2-3 1-2 2-1 4 1 4 2 2 3 1 5-1zm1 22l-1-5-2-2-7-1-4 4-1 6 1 3 2 2 7 1 3-2 1-1zm17 14l0-7 12 0 0-33-12 7 0-8 12-8 10 0 0 42 11 0 0 7zm71-24l-1 14-3 5-3 3-4 2-6 1-9-3-6-8-1-14 0-11 3-7 4-5 6-2 9 0 4 2 3 4 3 5zm-9 0l-1-11-1-4-4-3-5 1-2 2-1 7 0 15 1 7 4 3 3 0 3-1 2-6zm49 0l-2 14-2 5-4 3-4 2-5 1-9-3-6-8-2-14 1-11 2-7 5-5 6-2 9 0 4 2 3 4 2 5zm-10 0l0-11-2-4-3-3-5 1-2 2-2 7 0 15 2 7 3 3 4 0 2-1 3-6zm50 0l-2 14-3 5-3 3-4 2-5 1-10-3-5-8-2-14 1-11 2-7 4-5 6-2 9 0 4 2 4 4 2 5zm-10 0l-1-11-1-4-4-3-5 1-2 2-1 7 0 15 1 7 4 3 3 0 3-1 2-6zm17 24l0-7 12 0 0-33-12 7 0-8 13-8 9 0 0 42 11 0 0 7zm72-24l-2 14-3 5-3 3-4 2-5 1-10-3-5-8-2-14 1-11 2-7 4-5 6-2 9 0 5 2 3 4 2 5zm-10 0l-1-11-1-4-3-3-5 1-2 2-2 7 0 15 2 7 3 3 3 0 3-1 2-6zm49 0l-2 14-2 5-3 3-5 2-5 1-9-3-6-8-2-14 1-11 3-7 4-5 6-2 9 0 4 2 3 4 3 5zm-9 0l-1-11-1-4-4-3-5 1-2 2-1 7 0 15 1 7 4 3 3 0 3-1 2-6zm17 24l0-7 12 0 0-33-12 7 0-8 12-8 10 0 0 42 11 0 0 7zM4580 1423l11 0-6 18-4-11-2-6zm-36 31l15-6 0 17 7 0 0-33 5 6 4-5 6 15-8 8-6 3 5 6 10-6 4-4 7 7 5 3 5-7-5-2-8-8 4-8 5-17 3 0 0-8-20 0 2-11-8-1-2 10-3 10-5 7 0-26-7 0 0 36-8 3 0-33-7 0 0 32-1 2-2 3zm89-14l0 6-1 4-7 5-17 4 5 6 19-5 8-7 2-7 0-6zm7 16l24 9 4-6-24-9zm-24-25l0 21 8 0 0-13 28 0 0 13 9 0 0-21zm22-28l0 10-9 2 2 5 7-1 1 5 3 3 6 1 16-1 3-3 2-6-7-3-2 6-11 0-3-1 0-3 21-7-5-6-16 6 0-7zm-13-1l-5 6-13 8 5 6 7-4 0 11 8 0 0-18 5-6zm74 7l0 18-7 3 3 7 4-2 0 17 1 7 4 4 7 1 14 0 6-1 3-4 2-8-7-3-1 6-1 2-16 1-3 0-1-2 0-23 5-3 0 21 8 0 0-24 5-2 0 15-1 1-4 0 2 7 7-1 3-3 0-2 1-25-5-2-8 4 0-15-8 0 0 18-5 2 0-14zm-27 39l4 8 20-10-1-7-7 2 0-15 7 0 0-8-7 0 0-14-7 0 0 14-8 0 0 8 8 0 0 19zm93-30l0 37-7 0 0 8 44 0 0-8-14 0 0-22 13 0 0-8-13 0 0-22-8 0 0 52-7 0 0-37zm-26 29l3 8 22-9-2-7-7 2 0-15 8 0 0-8-8 0 0-14-7 0 0 14-8 0 0 8 8 0 0 18zm82-19l3-1 2-2 1-3-1-3-2-3-3 0-4 0-2 3-1 3 1 3 2 2zm0 32l3-1 2-2 1-3-1-4-2-2-3-1-4 1-2 2-1 4 1 3 2 2zm56-51l12 8 4-6-12-7zm-4 19l12 7 5-7-13-6zm2 31l7 5 12-21-6-5zm16-6l0 8 44 0 0-8-18 0 0-37 15 0 0-8-37 0 0 8 13 0 0 37zm59-15l-10 13 7 4 9-14zm-5-11l0 7 18 0-3 11-6 8-12 6 4 6 14-7 8-11 3-13 11 0-1 12-2 11-3 1-9 0 3 7 12-1 4-3 3-9 1-9 4 12 7-2-6-16-5 2 0-12-18 0 0-6-8 0 0 6zm33-24l0 5-15 0 0-5-9 0 0 5-13 0 0 8 13 0 0 6 9 0 0-6 15 0 0 6 8 0 0-6 14 0 0-8-14 0 0-5zm41 3l-6 11-5 4 7 5 9-11 3-7zm13-3l0 22-8 3-19 3 5 7 7-1 0 28 8 0 0-2 26 0 0 2 8 0 0-34-22 0 13-8 6-5 4 7 7-4-4-5-10-10-6 3 8 9-7-3-8 6 0-18zm-7 42l26 0 0 3-26 0zm0-5l0-3 26 0 0 3zm0 14l26 0 0 3-26 0zm58-16l-10 13 7 4 9-14zm-5-11l0 7 18 0-3 11-6 8-12 6 4 6 14-7 8-11 3-13 11 0-1 12-2 11-3 1-9 0 3 7 12-1 4-3 3-9 1-9 4 12 7-2-6-16-5 2 0-12-18 0 0-6-8 0 0 6zm33-24l0 5-15 0 0-5-9 0 0 5-13 0 0 8 13 0 0 6 9 0 0-6 15 0 0 6 8 0 0-6 14 0 0-8-14 0 0-5zm32 16l-3 13-2 6 7 2 2-5 3-14zm9-15l-1 33-4 12-8 10 6 6 9-12 5-13 0-14 4 14 7-3-5-17-6 2 0-18zm37 0l0 30-6-14-5 2 0-17-8 0 0 56 8 0 0-36 5 15 6-4 0 29 8 0 0-61zm40 0l4 8-27 0 0 8 26 0 0 7-20 0 0 31 8 0 0-23 12 0 0 30 8 0 0-30 13 0 0 15-9 0 2 8 12-1 2-2 2-5 0-23-22 0 0-7 27 0 0-8-25 0-5-10zm77 55l-13-19-12 19-11 0 17-25-15-24 10 0 11 18 11-18 11 0-15 24 16 25zm47 0l-12-19-13 19-10 0 17-25-16-24 11 0 11 18 11-18 10 0-15 24 17 25zm47 0l-12-19-12 19-11 0 17-25-16-24 11 0 11 18 11-18 11 0-15 24 16 25zm48 0l-12-19-13 19-10 0 16-25-15-24 11 0 11 18 11-18 10 0-15 24 17 25zm47 0l-12-19-12 19-11 0 17-25-16-24 11 0 11 18 11-18 11 0-15 24 16 25z"/>
<path fill="#6d9fe0" d="M4838 1301l1 3 15-6-1-3zm1-19l8-2-6 9-3 2 2 3 13-4 0-3-8 2 10-16-3-2-3 6-6 1 8-16-4-2-5 12-4 6zm29 4l0 7-4 0 0-7zm3 0l3 0 0 7-3 0zm-10-4l0 25 3 0 0-11 4 0 0 10 3 0 0-10 3 0 0 10 3 0 0-10 4 0 0 8-3 0 1 3 4-1 1-24zm16 4l4 0 0 7-4 0zm-10-25l2 5-12 0 0 20-1 10-4 9 3 2 4-10 2-19 22 0 0-12-9 0-3-6zm-6 8l19 0 0 6-19 0zm55-4l14 0 0 5-14 0zm-4-3l0 11 21 0 0-11zm-20 24l8 0 0 7-10 2 0 4 10-2 0 10 4 0 0-11 5-1 0-3-5 1 0-7 4 0 0-4-4 0 0-8-4 0 0 8-5 0 4-12 10 0 0-4-9 0 1-5-3-1-2 6-6 0 0 4 6 0-3 9-3 4zm37-7l0 5-13 0 0-5zm-21 21l1 3 20-1 0 6 4 0 0-7 4 0 0-3-4 0 0-19 4 0 0-3-28 0 0 3 4 0 0 20zm21-13l0 4-13 0 0-4zm0 7l0 4-13 1 0-5zm37-34l-1 31-3 8-6 6 2 3 7-7 4-9 0-32zm-8 11l-1 12-1 5 3 2 2-5 1-14zm13 12l0 3 6 0 0 16-10 0 0 4 21 0 0-4-7 0 0-16 6 0 0-3-6 0 0-16 6 0 0-3-17 0 0 3 7 0 0 16zm-30 17l0 3 16-3-1-4-5 1 0-13 5 0 0-3-5 0 0-13 5 0 0-4-15 0 0 4 6 0 0 13-5 0 0 3 5 0 0 14zm52 1l1 3 17-6-1-4zm18-37l0 3 6 0-1 16-3 13-6 9 4 3 4-7 4-16 7 12-4 3-7 5 2 3 11-8 10 8 2-4-10-7 6-11 2-7-2-1-6 0 4-14zm10 3l8 0-4 14 9 0-6 13-3-5-5-11zm-28 15l9-2-7 9-3 2 2 3 16-5 0-3-10 2 11-15-4-2-3 6-7 1 9-16-4-2-5 12-5 6zm79-8l11 0-3 12-2 5-4-11zm0-14l-5 17-4 6 3 3 4-6 6 14-7 8-5 3 2 3 5-3 7-7 7 7 4 2 3-3-5-2-7-8 3-6 4-14 4 0 0-4-18 0 3-9zm-25 38l12-5 0 15 3 0 0-47-3 0 0 29-8 2 0-26-4 0 0 25-2 4zm82-30l-10 7-9-6zm-16-8l-4 5-5 4-7 4 3 3 8-5 7 6-20 5 2 4 15-4 7-3 7 3 15 3 3-3-14-3-7-2 9-7 3-4-2-1-19 0 3-4zm-7 37l11 0 0 6-11 0zm0-3l0-5 11 0 0 5zm26 3l0 6-11 0 0-6zm0-3l-11 0 0-5 11 0zm-30-9l0 23 4 0 0-2 26 0 0 2 4 0 0-23zm48-21l10 5 2-3-10-5zm-3 14l10 6 2-4-10-5zm2 26l3 3 3-5 6-12-3-2zm24-43l4 9 4-2-4-8zm-11 9l0 4 14 0 0 11-12 0 0 4 12 0 0 13-15 0 0 4 34 0 0-4-15 0 0-13 11 0 0-4-11 0 0-11 13 0 0-4z"/>
<path fill="#4b96d2" d="M1181 1545l8 9 4-3-9-9zm-3 15l0 4 8 0 0 21 0 3-3 4 3 3 12-11-2-4-5 5 0-25zm21-16l0 23 13 0 0 6-16 0 0 4 14 0-5 6-5 5-6 3 3 4 5-4 6-6 4-6 0 18 5 0 0-18 9 11 5 4 3-3-10-9-5-5 14 0 0-4-16 0 0-6 12 0 0-23zm4 13l9 0 0 7-9 0zm14 0l8 0 0 7-8 0zm-14-10l9 0 0 7-9 0zm14 0l8 0 0 7-8 0zm51 0l19 0 0 12-19 0zm-4-3l0 19 27 0 0-19zm-1 35l0 4 12 0 0 8-16 0 0 4 36 0 0-4-15 0 0-8 12 0 0-4-12 0 0-7 13 0 0-4-31 0 0 4 13 0 0 7zm-5-37l-19 5 1 3 9-1 0 9-10 0 0 4 9 0-6 14-4 6 2 4 9-16 0 27 4 0 0-26 6 7 3-3-9-9 0-4 8 0 0-4-8 0 0-10 8-3zm83 2l9 10 4-2-10-10zm-11-2l2 18-15 2 0 4 15-2 3 17 6 11 8 5 3-1 3-4 1-9-3-2-2 9-2 2-5-4-5-10-2-14 18-3 0-4-19 2-1-17zm-14 0l-5 9-6 9-7 7 3 4 8-9 0 35 5 0 0-42 6-12zm67 38l0 4 23 0 0-4zm5-27l-2 19 25 0-2 11-2 9-2 1-8-1 2 5 7 0 3-1 3-5 3-23-7 0 2-23-25 0 0 4 20 0-2 19-12 0 1-15zm-27-9l0 4 8 0-5 18-4 6 2 5 3-5 0 22 4 0 0-5 11 0 0-26-11 0 4-15 9 0 0-4zm8 23l7 0 0 18-7 0zM1846 1545l8 9 4-3-9-9zm-3 15l0 4 8 0 0 21 0 3-3 4 3 3 12-11-2-4-5 5 0-25zm21-16l0 23 13 0 0 6-16 0 0 4 14 0-5 6-5 5-6 3 3 4 5-4 6-6 4-6 0 18 5 0 0-18 9 11 5 4 3-3-10-9-5-5 14 0 0-4-16 0 0-6 12 0 0-23zm4 13l9 0 0 7-9 0zm14 0l8 0 0 7-8 0zm-14-10l9 0 0 7-9 0zm14 0l8 0 0 7-8 0zm51 0l19 0 0 12-19 0zm-4-3l0 19 27 0 0-19zm-1 35l0 4 12 0 0 8-16 0 0 4 36 0 0-4-15 0 0-8 12 0 0-4-12 0 0-7 13 0 0-4-31 0 0 4 13 0 0 7zm-5-37l-19 5 1 3 9-1 0 9-10 0 0 4 9 0-6 14-4 6 2 4 9-16 0 27 4 0 0-26 6 7 3-3-9-9 0-4 8 0 0-4-8 0 0-10 8-3zm55 18l9 7-7 4-15 5 2 4 10-3 0 20 5 0 0-3 27 0 0 3 5 0 0-26-24 0 9-6 8-7 6-9-3-2-22 0 4-5-5-1-5 6-7 6-9 5 3 4 15-11 23 0-4 5-11 9-10-8zm31 30l-27 0 0-14 27 0zm45-25l-4 14-3 6 4 2 3-6 5-15zm17 0l6 22 4-2-6-21zm-16-24l-4 15-3 6 0-4-8 0 0-10 8-3-3-4-18 5 1 4 8-1 0 9-10 0 0 5 9 0-6 14-4 5 2 4 9-16 0 27 4 0 0-27 5 7 3-3-8-9 0-2 7 0 4 2 6-12 6 0 0 38-1 1-7 0 2 5 8-1 2-2 0-41 9 0-4 7 4 1 5-11-3-1-20 0 2-7zM2664 1541l-5 19-4 7-2-1-7 0 3-5 9 0 0-4-6 0 7-13-4-2-8 15-4 0 0-6 8 0 0-4-8 0 0-6-4 0 0 6-8 0 0 4 8 0 0 6-11 0 0 4 16 0-5 5-5 0 0 4 1 0-7 4 3 3 11-7 6 0-7 5 0 5-13 1 1 4 12-1 0 9-7 0 1 4 7 0 3-2 1-3 0-9 12-1 0-4-12 1 0-3 9-8 3 3 4-7 6 17-9 9-6 3 3 4 6-3 8-9 7 9 5 3 3-4-5-3-7-9 3-7 5-17 4 0 0-5-18 0 2-10zm1 16l11 0-3 13-2 6zm69-16l0 13-18 0 0 4 17 0-6 10-7 9-7 7 3 3 7-6 11-16 0 27-10 0 1 5 11-1 3-3 0-35 6 0 0-4-6 0 0-13zm-33 0l0 13-10 0 0 4 9 0-7 17-4 7 2 4 4-5 6-14 0 30 4 0 0-31 7 9 3-3-10-12 0-2 9 0 0-4-9 0 0-13zm63 19l9 7-7 4-15 5 2 4 10-3 0 20 5 0 0-3 27 0 0 3 5 0 0-26-24 0 9-6 8-7 6-9-3-2-22 0 4-5-5-1-5 6-7 6-9 5 3 4 15-11 23 0-4 5-11 9-10-8zm31 30l-27 0 0-14 27 0zm45-25l-4 14-3 6 4 2 3-6 5-15zm17 0l6 22 4-2-6-21zm-16-24l-4 15-3 6 0-4-8 0 0-10 8-3-3-4-18 5 1 4 8-1 0 9-10 0 0 5 9 0-6 14-4 5 2 4 9-16 0 27 4 0 0-27 5 7 3-3-8-9 0-2 7 0 4 2 6-12 6 0 0 38-1 1-7 0 2 5 8-1 2-2 0-41 9 0-4 7 4 1 5-11-3-1-20 0 2-7zm71 28l2 11 4 10 7 8 3-2-6-8-4-9-1-10 1-10 4-9 6-8-3-2-7 8-4 10zm25-27l0 34-1 10-3 8 3 3 3-7 2-15 9 0 0 22 4 0 0-26-12 0 0-9 16 0 0-4-6 0 0-17-4 0 0 17-6 0 0-16zm46 21l-2 7-5 11-2-6-4-12zm-23-18l0 31-1 10-4 9 4 2 4-9 1-11 1-14 1 0 5 15 3 6-4 4-8 5 3 4 8-5 3-4 7 7 4 2 3-3-4-3-7-6 4-7 3-9 2-10-3 0-20 0 0-10 24-4-3-4zm35 3l12 9 3-4-12-8zm0 40l4 3 12-19-4-3zm25-47l-6 18-4 7 4 3 7-13 22 0-4 12 3 2 7-17-4-2-23 0 3-9zm7 18l-1 14-6 11-13 10 3 3 10-6 6-8 4-7 4 9 6 7 8 5 3-4-9-6-7-9-4-11 1-8zm45 10l-2-11-4-10-7-8-3 2 6 8 4 9 1 10-1 10-4 9-6 8 3 2 7-8 4-10zM3446 1541l-5 19-4 7-2-1-7 0 3-5 9 0 0-4-6 0 7-13-4-2-8 15-4 0 0-6 8 0 0-4-8 0 0-6-4 0 0 6-8 0 0 4 8 0 0 6-11 0 0 4 16 0-5 5-5 0 0 4 1 0-7 4 3 3 11-7 6 0-7 5 0 5-13 1 1 4 12-1 0 9-7 0 1 4 7 0 3-2 1-3 0-9 12-1 0-4-12 1 0-3 9-8 3 3 4-7 6 17-9 9-6 3 3 4 6-3 8-9 7 9 5 3 3-4-5-3-7-9 3-7 5-17 4 0 0-5-18 0 2-10zm1 16l11 0-3 13-2 6zm69-16l0 13-18 0 0 4 17 0-6 10-7 9-7 7 3 3 7-6 11-16 0 27-10 0 1 5 11-1 3-3 0-35 6 0 0-4-6 0 0-13zm-33 0l0 13-10 0 0 4 9 0-7 17-4 7 2 4 4-5 6-14 0 30 4 0 0-31 7 9 3-3-10-12 0-2 9 0 0-4-9 0 0-13zm79 1l-8 17-5 6 3 3 9-12 4 0 0 41 5 0 0-15 18 0 0-4-18 0 0-9 17 0 0-5-17 0 0-8 19 0 0-5-26 0 3-8zm-15-1l-4 9-5 9-6 7 3 4 6-7 0 34 4 0 0-41 7-13zm95 2l-7 8 0-2-15 0 0-8-5 0 0 8-15 0 0 4 15 0 0 8-21 0 0 4 24 0-8 4-17 8 3 4 11-5 0 21 5 0 0-2 25 0 0 2 4 0 0-26-25 0 10-6 23 0 0-4-18 0 15-16zm-22 18l0-8 14 0-10 8zm-8 24l25 0 0 6-25 0zm0-4l0-6 25 0 0 6zM4078 1571l0 22 44 0 0 4 5 0 0-26-5 0 0 18-17 0 0-21 19 0 0-22-5 0 0 17-14 0 0-22-5 0 0 22-14 0 0-17-5 0 0 22 19 0 0 21-17 0 0-18zm61-29l0 34-1 10-3 8 3 3 3-7 2-15 9 0 0 22 4 0 0-26-12 0 0-9 16 0 0-4-6 0 0-17-4 0 0 17-6 0 0-16zm46 21l-2 7-5 11-2-6-4-12zm-23-18l0 31-1 10-4 9 4 2 4-9 1-11 1-14 1 0 5 15 3 6-4 4-8 5 3 4 8-5 3-4 7 7 4 2 3-3-4-3-7-6 4-7 3-9 2-10-3 0-20 0 0-10 24-4-3-4zm42-2l5 8 4-2-6-8zm-7 8l0 5 16 0-4 7-7 7-6 5 2 4 8-7 0 25 5 0 0-26 6 7 3-4-9-8 8-13-2-2zm37-10l0 19-14 0 0 4 14 0 0 26-17 0 0 5 36 0 0-5-15 0 0-26 13 0 0-4-13 0 0-19zM4871 1571l0 22 44 0 0 4 5 0 0-26-5 0 0 18-17 0 0-21 19 0 0-22-5 0 0 17-14 0 0-22-5 0 0 22-14 0 0-17-5 0 0 22 19 0 0 21-17 0 0-18zm61-29l0 34-1 10-3 8 3 3 3-7 2-15 9 0 0 22 4 0 0-26-12 0 0-9 16 0 0-4-6 0 0-17-4 0 0 17-6 0 0-16zm46 21l-2 7-5 11-2-6-4-12zm-23-18l0 31-1 10-4 9 4 2 4-9 1-11 1-14 1 0 5 15 3 6-4 4-8 5 3 4 8-5 3-4 7 7 4 2 3-3-4-3-7-6 4-7 3-9 2-10-3 0-20 0 0-10 24-4-3-4zm61 20l9 14 4-2-9-14zm-9 3l0 14-11 0 0-14zm0-4l-11 0 0-14 11 0zm-15-18l0 45 4 0 0-5 15 0 0-40zm42-5l0 12-20 0 0 5 20 0-1 33-12 1 2 4 9 0 5-1 1-5 0-32 8 0 0-5-8 0 0-12zm20 14l0 42 4 0 0-42zm0-11l8 9 4-3-8-8zm17 30l15 0 0 8-15 0zm0-12l15 0 0 8-15 0zm-4-4l0 28 23 0 0-28zm2-14l0 5 30 0 0 43-7 1 2 4 8-1 1-2 1-2 0-48zM5708 1546l11 9 3-4-12-8zm-36 6l0 4 17 0 0 12-21 0 0 4 21 0 0 25 5 0 0-25 23 0-1 8-2 6-12 0 2 5 9 0 5-2 1-3 2-6 1-12-9 0 0-16-19 0 0-11-5 0 0 11zm22 16l0-12 14 0 0 12zm47-20l29 0 0 8-29 0zm-5-5l0 17 39 0 0-17zm-7 22l0 5 12 0-4 11 32 0-1 5-3 6-13 0 2 5 12 0 3-2 2-3 2-5 2-11-31 0 2-6 36 0 0-5zm99 4l2 11 4 10 7 8 3-2-6-8-4-9-1-10 1-10 4-9 6-8-3-2-7 8-4 10zm25 23l0-42 5 0 0 42zm49-11l-2 6-6 4-4 1-6 1-8-1-6-4-3-6 5-1 2 4 2 2 9 1 8-2 3-3 0-2-1-3-2-3-15-4-6-3-3-6 0-5 2-2 5-4 9-1 8 1 5 3 3 5-6 1-3-5-5-1-6 0-6 3-1 5 1 2 3 2 14 4 6 2 3 4zm40-1l-2 7-5 4-8 1-17 0 0-42 15 0 8 1 5 4 2 5-1 5-3 3-4 2 3 1 4 2 2 2zm-8-19l-1-4-3-2-15 0 0 13 15-1 3-2zm2 19l-1-4-3-3-17-1 0 16 17-1 3-3zm42 12l-23-36 0 36-5 0 0-42 7 0 23 36-1-36 5 0 0 42zm30-23l-2-11-4-10-6-8-4 2 6 8 4 9 2 10-2 10-4 9-6 8 4 2 6-8 4-10zM6342 1541l-3 5-9 8 2 3 5-4 10-10zm1 14l-4 6-10 10 2 5 7-6 0 27 4 0 0-33 5-8zm10 7l0 29-7 0 0 4 40 0 0-4-16 0 0-19 13 0 0-5-13 0 0-17 14 0 0-4-34 0 0 4 15 0 0 41-8 0 0-29zm42-17l9 10 3-3-9-10zm6 51l15-12-1-4-9 6 0-26-15 0 0 4 10 0 0 22 0 3-3 3zm11-50l0 5 19 0 0 40-2 1-10 0 2 5 12-1 1-1 2-5 0-39 11 0 0-5zm70-1l0 20-6 0 0-20-18 0 0 20-6 0 0 5 6 0-1 8-2 8-4 8 4 3 4-8 3-10 1-9 8 0 0 22-8 0 2 5 9-1 2-3 0-23 6 0-2 16-4 8 3 3 4-8 3-10 1-9 9 0 0 22-8 1 2 4 7 0 3-2 1-3 0-22 6 0 0-5-6 0 0-20zm-19 4l8 0 0 16-8 0zm24 16l0-16 9 0 0 16zm50-23l-5 8 3 2 6-8zm-22 2l4 8 4-2-4-8zm20 32l-6 8-7-3 3-5zm-18 7l9 4-4 3-9 3 2 4 10-5 5-3 5 4 3-3-5-4 5-8 2-5-2-1-11 0 1-3-4 0-1 3-9 0 0 4 7 0zm9-42l0 11-13 0 0 4 11 0-7 7-5 3 3 3 11-9 0 8 4 0 0-9 8 7 3-4-10-6 11 0 0-4-12 0 0-11zm22 0l-2 11-3 9-4 8 4 3 4-8 5 16-4 5-4 5-6 4 2 3 6-3 9-10 7 9 4 4 3-4-4-3-8-10 3-7 4-16 4 0 0-4-18 0 3-11zm11 16l-4 18-5-18z"/>
<path fill="#4a4a4a" stroke="#4a4a4a" stroke-width="0.5" d="M870 1705l0-5 11 0 0-35-10 8 0-6 11-7 5 0 0 40 11 0 0 5zM868 1815l0-4 3-5 4-5 13-12 3-4 0-3-1-4-4-4-5 0-4 2-3 6-5-1 0-3 2-3 5-4 7-2 8 2 5 4 1 3 0 5-1 4-4 5-13 12-4 6 23 0 0 5zM898 1912l-1 7-6 5-3 1-5 0-8-1-5-4-3-7 6 0 2 4 3 3 5 1 7-3 1-1 1-5 0-2-2-4-5-1-7-1 0-5 9 0 3-3 1-4-1-4-3-3-7-1-5 3-1 4-6 0 1-3 4-6 6-2 8 0 4 1 4 4 2 6-1 5-3 4-5 2 5 2 3 1 1 2zM893 2025l0 10-5 0 0-10-22 0 0-5 21-30 6 0 0 30 6 0 0 5zm-5-29l-16 24 16 0zM898 2130l-1 8-6 6-4 1-8 0-4-1-5-3-2-6 5-1 2 4 3 2 5 1 5-2 3-3 1-6-1-5-3-3-2-1-6 0-6 3-5 0 1-24 26 0 0 5-20 0-1 14 2-2 7-1 8 2 5 5zM898 2240l-1 8-5 6-4 1-9 0-4-2-3-3-2-5-1-5 0-14 1-6 2-4 4-4 4-2 4-1 6 1 4 3 3 5-5 1-2-3-2-1-4-1-5 2-4 6-1 10 3-4 3-2 9 0 3 2 5 5zm-6 0l-1-5-1-2-4-3-7 1-3 3-1 2 1 9 3 4 2 1 5 0 4-2 2-5zM898 2325l-12 20-3 12 0 8-6 0 0-6 3-12 3-7 9-15-24 0 0-5 30 0zM898 2462l-1 7-3 3-6 3-9 0-4-1-5-5-2-7 1-5 3-4 5-2-4-2-4-6 0-5 4-6 6-2 8 0 4 1 5 4 1 6-1 5-3 3-4 2 5 2 2 2 2 4zm-7-21l-1-4-2-3-5 0-6 1-2 6 2 6 6 2 6-2 2-3zm1 21l-1-5-1-2-7-2-3 1-4 2-1 1-1 5 1 5 3 3 5 1 5-1 2-1 1-2z"/>
<path fill="#3a3a3a" stroke="#3a3a3a" stroke-width="1.2" d="M1874 1652l-5 14-4 5 3 4 7-10 23 0 0-5-22 0 3-7zm-3 20l0 9-5 3 2 4 3-2 1 19 2 2 5 1 13 0 4-1 2-3 1-6-4-1-1 6-15 1-3-1 0-19 5-3 0 17 4 0 0-19 7-3 0 14-1 1-4 0 1 4 6-1 1-3 1-19-3-1-8 4 0-8-4 0 0 10-5 2 0-7zm-19-19l3 9-12 0 0 4 6 0 0 15-2 14-5 10 3 3 5-8 2-10 1-11 8 0-1 21-1 3-1 1-7-1 1 5 7 0 2-1 3-5 1-27-12 0 1-9 13 0 0-4-12 0 4-1-2-6-1-3zm52 46l0 4 55 0 0-4-25 0 0-35 22 0 0-5-49 0 0 5 22 0 0 35zm61 0l0 4 55 0 0-4-25 0 0-35 22 0 0-5-49 0 0 5 22 0 0 35zm67-26l0 4 28 0-18 12-7 7-2 4 2 3 3 3 6 0 26 0 6 0 2-4 2-8-5-1 0 6-2 2-2 1-27 0-5-1-1-2 2-3 9-7 23-14-4-2zm30-21l0 7-17 0 0-7-4 0 0 7-15 0 0 4 15 0 0 6 4 0 0-6 17 0 0 6 4 0 0-6 14 0 0-4-14 0 0-7zm55 45l15 7 6 4 3-4-6-4-16-7zm-18-28l9 7 3-3-10-7zm-6 10l9 7 3-4-10-6zm-4-20l0 12 5 0 0-8 41 0 0 8 5 0 0-12-21 0-4-7-5 1 3 6zm-1 29l0 4 22 0-4 5-7 4-10 3 3 4 11-4 8-5 5-7 25 0 0-4-24 0 1-7 1-15-4 0-1 15-2 7zm96-31l0 43 4 0 0-43zm13-4l0 54 4 0 0-54zm-26 1l0 32-2 10-4 9 4 3 4-10 2-11 1-33zm-20 2l10 10 3-3-10-10zm5 51l12-11-2-4-6 5 0-26-13 0 0 5 9 0 0 22 0 2-3 4zM2641 1678l32 0 0 9-32 0zm0-4l0-9 32 0 0 9zm0 17l32 0 0 9-32 0zm13-39l-3 8-15 0 0 48 5 0 0-3 32 0 0 3 5 0 0-48-22 0 3-7zm35 48l2 4 17-7-1-4zm2-23l9-1-8 10-2 2 1 4 17-4-1-4-10 2 12-19-4-2-3 7-7 0 10-19-5-1-5 14-6 7zm34 5l0 9-5 0 0-9zm3 0l5 0 0 9-5 0zm-12-4l0 30 4 0 0-14 5 0 0 12 3 0 0-12 5 0 0 12 3 0 0-12 4 0 0 10-3 0 1 4 3-1 2-1 1-28zm20 4l4 0 0 9-4 0zm-12-29l3 6-15 0 0 23-2 12-4 10 4 3 4-11 2-12 0-11 27 0 0-14-12 0-3-7zm-8 9l23 0 0 7-23 0zm38-6l9 9 4-3-9-9zm-3 15l0 5 8 0 0 21 0 2-3 3 3 4 12-10-2-4-6 5 0-26zm42-3l0 15-10 0 0-15zm-15-16l0 12-8 0 0 4 8 0 0 12 0 3-10 0 0 4 10 0-2 7-2 6-5 5 4 3 5-6 3-7 1-8 11 0 0 21 5 0 0-21 8 0 0-4-8 0 0-15 7 0 0-4-7 0 0-12-5 0 0 12-10 0 0-12zm56 1l6 15 4-2-6-14zm23 3l-4 12-6 10-7 9-7-9-6-9-5-10-4 1 5 11 6 10 7 9-7 6-8 4-10 4 3 4 10-4 8-5 8-6 7 6 8 5 10 4 3-4-9-4-9-4-7-6 8-9 6-11 5-12zm55 24l2 11 4 10 7 8 3-2-6-8-4-9-1-10 1-10 4-9 6-8-3-2-7 8-4 10zm53-6l21 17 4-4-21-16zm-30-18l0 5 27 0-7 10-10 9-11 8 3 4 8-5 14-13 0 34 5 0 0-40 4-7 20 0 0-5zm63 45l22-7 0-4-17 4 0-16 17 0 0-5-17 0 0-11 17-5-4-4-18 6 0 33 0 2-2 2zm27-45l0 52 4 0 0-47 14 0 0 32-9 1 2 5 7-1 4-1 1-2 0-39zm67 2l0 35 5 0 0-35zm13-5l0 49-2 1-8 0 2 5 10-1 2-3 0-51zm-40 25l0 23 3 0 0-19 6 0 0 26 4 0 0-26 6 0 0 15-5 0 2 4 6-1 1-2 0-20-10 0 0-7 10 0 0-16-29 0 0 30-1 10-3 9 3 3 4-10 1-11 1-15 10 0 0 7zm-1-18l20 0 0 7-20 0zm69 20l-2-11-4-10-7-8-3 2 6 8 4 9 1 10-1 10-4 9-6 8 3 2 7-8 4-10zM3440 1678l7 2-10 3 2 1-3 0 0 5-25 0 0 4 21 0-7 4-15 7 3 3 9-3 7-5 7-5 0 14 5 0 0-14 7 5 8 5 8 3 3-4-15-6-7-4 21 0 0-4-25 0 0-4 11-3 10 5 3-3-9-4 6-5 2-3-3-2-22 0 0 4 18 0-6 4-9-3zm-18-17l12 3-17 3 2 3 21-5 14 5 3-3-12-4 8-5 3-2-2-2-35 0 0 3 30 0-9 5-16-4zm-8 17l7 2-10 4 2 3 13-5 6 4 3-3-6-3 7-9-2-1-21 0 0 4 17 0-5 4-9-3zm61-22l10 6 3-3-11-6zm-3 18l10 6 2-3-10-7zm1 31l4 2 3-6 5-14-3-2zm30-30l7 6-13 0 1-8 21 0 0 8-9 0 2-1-1-3-5-4zm-17 6l0 5 6 0-2 13 27 0-2 4-9 0 1 4 10 0 2-2 2-6 5 0 0-4-4 0 1-9 5 0 0-5-5 0 0-12-29 0-1 12zm10 5l22 0 0 9-23 0zm5 2l8 7 2-2-7-7zm-5-36l-6 13-4 6 4 2 6-10 30 0 0-4-28 0 2-6zm66 41l7 8 3-2-6-9zm-26-37l10 6 3-3-11-6zm-3 17l10 6 3-3-11-7zm1 31l4 3 3-6 8-13-4-3zm31-52l-1 6-13 0 0 4 13 0-1 5-10 0 0 4 9 0-1 5-12 0 0 4 11 0-3 8-5 7-5 6 4 3 4-4 6-11 17 0 0 14-9 1 1 4 10-1 2-2 0-16 6 0 0-4-6 0 0-4-4 0 0 4-15 0 2-5 24 0 0-4-23 0 1-5 19 0 0-4-18 0 0-5 19 0 0-4-18 0 1-6zM6360 1692l-1 7-6 5-3 1-5 0-8-1-5-4-3-7 6 0 2 4 3 3 5 1 7-3 2-3 0-3 0-2-2-4-5-1-7-1 0-5 9 0 3-3 1-4-1-4-3-3-7-1-5 3-1 4-6 0 3-6 2-3 6-2 8 0 4 1 4 4 2 6-1 5-3 4-5 2 5 2 3 1 2 5zm36 0l-1 7-5 5-4 1-5 0-8-1-5-4-2-7 6 0 1 4 3 3 5 1 7-3 2-3 1-3-1-2-2-4-5-1-7-1 0-5 9 0 3-3 1-4-1-4-2-3-7-1-5 3-2 4-6 0 3-6 2-3 6-2 8 0 4 1 5 4 1 6-1 5-3 4-5 2 6 2 2 1 2 5zM1843 1809l0 4 55 0 0-4-25 0 0-35 22 0 0-5-49 0 0 5 22 0 0 35zm90-41l19 0 0 12-19 0zm-4-3l0 19 27 0 0-19zm-1 35l0 4 12 0 0 8-16 0 0 4 36 0 0-4-15 0 0-8 12 0 0-4-12 0 0-7 13 0 0-4-31 0 0 4 13 0 0 7zm-5-37l-19 5 1 3 9-1 0 9-10 0 0 4 9 0-6 14-4 6 2 4 9-16 0 27 4 0 0-26 6 7 3-3-9-9 0-4 8 0 0-4-8 0 0-10 8-3zm41 47l1 4 20-5 0-4zm2-23l10-2-9 11-3 2 2 4 19-4 0-4-12 2 14-19-4-2-4 6-9 1 11-18-5-2-6 13-4 6-2 2zm22-22l0 4 21 0-7 8-9 6-9 4 3 4 16-9 15 9 3-4-15-7 8-9 2-4-3-2zm0 28l0 4 12 0 0 15-15 0 0 4 36 0 0-4-16 0 0-15 13 0 0-4zm80 0l0 24 4 0 0-24zm-18 0l-1 12-3 5-7 4 3 3 8-5 3-6 1-13zm-22-27l10 7 3-3-10-7zm-3 16l10 7 3-3-10-7zm2 32l4 3 3-6 6-13-4-3zm29-51l3 6-17 0 0 4 7 0 2 5 7 7-5 2-12 3 2 4 13-4 5-3 6 3 13 3 2-4-12-2-5-2 6-7 2-5 8 0 0-4-17 0-4-7zm12 10l-1 4-6 5-3-2-5-7zm44 19l0 4-24 0 0 5 24 0 0 12-12 1 2 4 9 0 4-2 2-4 0-11 25 0 0-5-25 0 0-2 10-6 5-3-3-3-31 1 0 4 25 0zm-2-29l4 9-13 0 2-1-6-8-3 1 5 8-10 0 0 12 4 0 0-8 43 0 0 8 5 0 0-12-10 0 6-8-5-2-6 10-10 0 3-1-3-6-2-4zM2629 1809l0 4 55 0 0-4-25 0 0-35 22 0 0-5-49 0 0 5 22 0 0 35zm90-41l19 0 0 12-19 0zm-4-3l0 19 27 0 0-19zm-1 35l0 4 12 0 0 8-16 0 0 4 36 0 0-4-15 0 0-8 12 0 0-4-12 0 0-7 13 0 0-4-31 0 0 4 13 0 0 7zm-5-37l-19 5 1 3 9-1 0 9-10 0 0 4 9 0-6 14-4 6 2 4 9-16 0 27 4 0 0-26 6 7 3-3-9-9 0-4 8 0 0-4-8 0 0-10 8-3zm41 47l1 4 20-5 0-4zm2-23l10-2-9 11-3 2 2 4 19-4 0-4-12 2 14-19-4-2-4 6-9 1 11-18-5-2-6 13-4 6-2 2zm22-22l0 4 21 0-7 8-9 6-9 4 3 4 16-9 15 9 3-4-15-7 8-9 2-4-3-2zm0 28l0 4 12 0 0 15-15 0 0 4 36 0 0-4-16 0 0-15 13 0 0-4zm80 0l0 24 4 0 0-24zm-18 0l-1 12-3 5-7 4 3 3 8-5 3-6 1-13zm-22-27l10 7 3-3-10-7zm-3 16l10 7 3-3-10-7zm2 32l4 3 3-6 6-13-4-3zm29-51l3 6-17 0 0 4 7 0 2 5 7 7-5 2-12 3 2 4 13-4 5-3 6 3 13 3 2-4-12-2-5-2 6-7 2-5 8 0 0-4-17 0-4-7zm12 10l-1 4-6 5-3-2-5-7zm44 19l0 4-24 0 0 5 24 0 0 12-12 1 2 4 9 0 4-2 2-4 0-11 25 0 0-5-25 0 0-2 10-6 5-3-3-3-31 1 0 4 25 0zm-2-29l5 9-14 0 2-1-6-8-3 1 5 8-10 0 0 12 4 0 0-8 43 0 0 8 5 0 0-12-10 0 6-8-5-2-6 10-10 0 3-1-3-6-2-4zM3446 1769l0 33 5 0 0-33zm13-6l0 49-1 2-9 0 2 4 10-1 3-2 0-52zm-37 1l5 8-16 0 0 4 21 0-4 17-11-11-3 2 12 13-4 7-5 6-6 5 3 3 6-5 5-5 4-7 8 11 3-4-9-11 6-21 5 0 0-4-15 0 4-2-1-2-4-6zm53 7l0 12 4 0 0-8 40 0 0 8 5 0 0-12zm20-8l4 8 5-2-4-7zm-22 23l0 5 24 0 0 21-12 1 2 5 12-1 2-3 1-23 24 0 0-5zM4125 1771l-5 6-12 11 0-25-5 0 0 29-11 7 3 4 8-5 1 16 3 2 15 1 5-2 3-4 1-9-5-3-2 12-2 1-10 0-2 0-1-1-1-17 15-13 6-7zm-34-9l-4 9-6 8-6 7 3 5 7-8 0 35 4 0 0-43 7-12zm70 30l0 4-24 0 0 5 24 0 0 12-12 1 2 4 9 0 4-2 2-4 0-11 25 0 0-5-25 0 0-2 10-6 5-3-3-3-31 1 0 4 25 0zm-2-29l5 9-14 0 2-1-6-8-3 1 5 8-10 0 0 12 4 0 0-8 43 0 0 8 5 0 0-12-10 0 6-8-5-2-6 10-10 0 3-1-3-6-2-4zm38 46l0 4 55 0 0-4-25 0 0-35 22 0 0-5-49 0 0 5 22 0 0 35zm110-33l-10 21 4 2 10-21zm-47 1l8 22 5-2-9-21zm31-14l0 47-11 0 0-47-4 0 0 47-17 0 0 5 54 0 0-5-18 0 0-47zm31 29l0 22 44 0 0 4 5 0 0-26-5 0 0 18-17 0 0-21 19 0 0-22-5 0 0 17-14 0 0-22-5 0 0 22-14 0 0-17-5 0 0 22 19 0 0 21-17 0 0-18zm61-29l0 34-1 10-3 8 3 3 3-7 2-15 9 0 0 22 4 0 0-26-12 0 0-9 16 0 0-4-6 0 0-17-4 0 0 17-6 0 0-16zm46 21l-2 7-5 11-2-6-4-12zm-23-18l0 31-1 10-4 9 4 2 4-9 1-11 1-14 1 0 5 15 3 6-4 4-8 5 3 4 8-5 3-4 7 7 4 2 3-3-4-3-7-6 4-7 3-9 2-10-3 0-20 0 0-10 24-4-3-4zm42-2l5 8 4-2-6-8zm-7 8l0 5 16 0-4 7-7 7-6 5 2 4 8-7 0 25 5 0 0-26 6 7 3-4-9-8 8-13-2-2zm37-10l0 19-14 0 0 4 14 0 0 26-17 0 0 5 36 0 0-5-15 0 0-26 13 0 0-4-13 0 0-19zM4868 1813l0-4 3-5 5-5 12-11 3-5 1-3-1-4-5-4-5 0-4 2-3 6-5-1 0-3 2-3 5-4 7-2 8 2 5 4 1 3 0 5-1 4-3 5-14 12-4 6 23 0 0 5zm68-22l-2 12-2 5-3 3-4 2-5 1-5-1-4-2-3-3-2-5-1-5 0-15 1-5 2-5 3-3 4-2 5-1 5 1 4 2 3 3 2 5zm-6 0l-1-11-3-6-6-2-6 2-3 6-1 11 1 10 3 6 6 2 6-2 3-6zm13 22l0-5 12 0 0-35-10 8 0-6 10-7 6 0 0 40 11 0 0 5zm65-40l-11 20-4 12 0 8-6 0 0-6 3-12 7-14 6-8-25 0 0-5 30 0zm6 27l0 4 29 0 0 14 4 0 0-14 23 0 0-4-23 0 0-13 18 0 0-4-18 0 0-9 20 0 0-5-37 0 3-6-5-1-3 8-5 7-5 6 4 3 9-12 15 0 0 9-18 0 0 17zm15 0l0-13 14 0 0 13zm78-9l-2 12-2 5-3 3-4 2-5 1-5-1-4-2-3-3-2-5-1-5 0-15 1-5 2-5 3-3 4-2 5-1 5 1 4 2 3 3 2 5zm-6 0l-1-11-3-6-6-2-6 2-3 6-1 11 1 10 3 6 6 2 5-2 4-6zm37 12l0 10-6 0 0-10-21 0 0-5 20-30 7 0 0 30 6 0 0 5zm-6-29l-16 24 16 0zm26-9l0 29-3 11-7 10 3 3 5-6 4-6 2-7 29 0 0 13-2 1-11 0 2 5 10 0 5-2 1-5 0-46zm5 5l28 0 0 10-28 0zm0 14l28 0 0 11-29 0zM5697 1791l-2 13-2 5-3 4-4 2-5 0-6-1-4-3-3-5 5-1 2 3 3 2 3 1 6-2 3-6 1-10-2 3-6 3-6 0-6-4-4-6 0-5 0-4 4-7 3-2 8-2 5 1 3 2 3 3 2 4zm-6-5l-1-6-3-5-3-1-2 0-5 1-3 4-1 5 1 6 3 4 2 1 4 0 5-2 2-4zm42-11l-11 20-4 12 0 8-6 0 1-12 2-6 3-7 10-15-25 0 0-5 30 0zm37 27l-1 4-3 6-7 3-9 0-4-1-5-5-2-7 1-5 3-4 5-2-4-2-4-6 1-5 3-6 6-2 8 0 4 1 5 4 2 6-1 5-3 3-4 2 4 2 2 2 2 4zm-7-21l-1-4-3-3-5 0-6 1-2 6 2 6 6 2 6-2 2-1zm1 21l-1-5-2-2-7-2-5 1-2 2-2 3 0 3 1 5 3 3 5 1 6-1 1-1 2-2zm41-27l-11 20-3 12-1 8-6 0 2-12 2-6 3-7 9-15-24 0 0-5 29 0zm9 40l0-5 11 0 0-35-10 8 0-6 10-7 6 0 0 40 11 0 0 5zm34 0l0-4 2-5 5-5 13-12 3-4 0-3-1-4-5-4-4 0-4 2-3 6-6-1 1-3 2-3 5-4 7-2 8 2 4 4 2 3 0 5-1 4-4 5-13 12-5 6 24 0 0 5zm36 0l0-4 3-5 4-5 13-12 3-4 0-3-1-4-5-4-4 0-4 2-3 6-6-1 1-3 2-3 5-4 7-2 8 2 4 4 2 3 0 5-1 4-4 5-13 12-5 6 24 0 0 5zm36 0l0-4 3-5 4-5 13-12 3-4 0-3-1-4-4-4-5 0-4 2-3 6-5-1 0-3 2-3 5-4 7-2 8 2 5 4 1 3 0 5-1 4-3 5-14 12-4 6 23 0 0 5zm67-15l-2 8-6 6-4 1-8 0-4-1-5-3-2-6 6-1 1 4 4 2 4 1 5-2 4-3 1-6-1-5-4-3-2-1-6 0-5 3-6 0 2-24 25 0 0 5-20 0-1 14 3-2 6-1 8 2 5 5zm36 2l-1 4-3 6-7 3-9 0-4-1-5-5-2-7 1-5 4-4 4-2-4-2-4-6 1-5 3-6 6-2 8 0 4 1 5 4 2 6-1 5-3 3-4 2 4 2 2 2 2 4zm-7-21l-1-4-3-3-5 0-6 1-2 6 2 6 6 2 7-2 1-1zm1 21l-1-5-2-2-7-2-5 1-1 2-3 3 0 3 1 5 3 3 6 1 5-1 1-1 2-2zm41-27l-11 20-3 12-1 8-6 0 2-12 2-6 3-7 9-15-24 0 0-5 29 0zm9 40l0-5 11 0 0-35-10 8 0-6 10-7 6 0 0 40 11 0 0 5zm64-13l0 4-4 6-7 3-9 0-3-1-6-5-1-7 1-5 3-4 5-2-5-2-3-6 0-5 3-6 7-2 8 0 3 1 5 4 2 6-1 5-3 3-4 2 5 2 2 2 2 4zm-7-21l-1-4-3-3-4 0-6 1-2 6 2 6 6 2 6-2 1-1zm1 21l-1-5-1-2-7-2-5 1-2 2-2 3 0 3 1 5 3 3 5 1 5-1 2-1 1-2zM6360 1802l-1 7-6 5-3 1-5 0-8-1-5-4-3-7 6 0 2 4 3 3 5 1 7-3 2-3 0-3 0-2-2-4-5-1-7-1 0-5 9 0 3-3 1-4-1-4-3-3-7-1-5 3-1 4-6 0 3-6 2-3 6-2 8 0 4 1 4 4 2 6-1 5-3 4-5 2 5 2 3 1 2 5zm36 0l-1 7-5 5-4 1-5 0-8-1-5-4-2-7 6 0 1 4 3 3 5 1 7-3 2-3 1-3-1-2-2-4-5-1-7-1 0-5 9 0 3-3 1-4-1-4-2-3-7-1-5 3-2 4-6 0 3-6 2-3 6-2 8 0 4 1 5 4 1 6-1 5-3 4-5 2 6 2 2 1 2 5zM1851 1872l-6 11-3 4 2 4 6-8 14 0 0-4-12 0 3-6zm1 56l13-8-1-3-7 3 0-14 8 0 0-4-8 0 0-8 6 0 0-4-16 0 0 4 5 0 0 8-8 0 0 4 8 0 0 14 0 2-2 2zm14-53l0 53 4 0 0-49 22 0 0 44-8 0 2 4 8-1 2-1 1-3 0-47zm20 7l-4 14-7-11-3 2 8 14-9 17 3 3 8-15 5 11 3-2-6-14 6-19zm38 12l0 6-11 0 0-6zm-15-4l0 21-2 8-3 7 3 2 3-4 3-10 11 0 0 9-7 1 1 4 8-1 1-1 1-3 0-33zm15 14l0 6-11 0 0-6zm15-16l0 7-9 0 0 4 9 0-1 9-3 9-7 8 4 3 7-9 4-10 0-10 10 0-1 13-1 11-2 1-7-1 1 5 9-1 2-1 2-4 1-27-14 0 0-7zm-26-16l-6 11-4 4 4 2 6-8 3 0 3 8 4-1-3-7 11 0 0-3-16 0 2-5zm23 0l-2 5-8 9 4 3 6-8 5 0 4 8 4-1-3-7 12 0 0-3-19 0 2-5zm41 23l32 0 0 4-32 0zm0 7l32 0 0 3-32 0zm0-13l32 0 0 3-32 0zm20-17l-5 8-3 4 3 2-12 0 4-1-3-5 11 0 0-4-16 0 1-3-4-1-5 9-4 3 4 3 5-7 3 0 4 6-7 0 0 23 8 0 0 5-16 0 0 4 14 0-6 5-7 2 3 3 8-3 5-4 3-3 16 0 0 10 5 0 0-10 14 0 0-4-14 0 0-5 7 0 0-23-6 0 4-2-3-4 11 0 0-4-19 0 2-3zm4 42l-15 0 0-5 15 0zm-8-28l5-6 4 0 5 6zm45-3l31 0 0 3-31 0zm0-6l31 0 0 3-31 0zm-4-3l0 15 39 0 0-15zm-8 17l0 4 55 0 0-4zm11 16l14 0 0 3-14 0zm19 0l14 0 0 3-14 0zm-19-7l14 0 0 4-14 0zm19 0l14 0 0 4-14 0zm-30 23l0 4 55 0 0-4-25 0 0-4 20 0 0-3-20 0 0-3 19 0 0-15-42 0 0 15 18 0 0 3-20 0 0 3 20 0 0 4zm91-6l15 7 6 4 3-4-6-4-16-7zm-18-28l9 7 3-3-10-7zm-6 10l9 7 3-4-10-6zm-4-20l0 12 5 0 0-8 41 0 0 8 5 0 0-12-21 0-4-7-5 1 3 6zm-1 29l0 4 22 0-4 5-7 4-10 3 3 4 11-4 8-5 5-7 25 0 0-4-24 0 1-7 1-15-4 0-1 15-2 7zm96-31l0 43 4 0 0-43zm13-4l0 54 4 0 0-54zm-26 1l0 32-2 10-4 9 4 3 4-10 2-11 1-33zm-20 2l10 10 3-3-10-10zm5 51l12-11-2-4-6 5 0-26-13 0 0 5 9 0 0 22 0 2-3 4zM2637 1893l-5 11-3 5 4 3 3-5 5-12zm36 1l7 19 5-2-7-19zm-23-22l0 11-19 0 0 5 19 0-2 12-6 13-13 12 3 3 14-12 7-14 1-14 13 0-2 29-3 5-11 0 2 5 12 0 3-3 2-5 2-36-17 0 0-11zm57 2l-5 9-5 8-7 6 4 3 7-7 6-8 5-10zm21-1l-5 2 6 9 13 16 4-4-7-6-6-8zm-31 51l38-3 4 7 4-3-14-20-5 1 8 11-29 1 6-8 11-17-5-2-11 18-5 8-4 2zm79-52l-1 17-23 0 0 5 22 0-3 12-8 10-12 8 3 4 12-8 8-11 5-11 5 12 8 11 11 7 3-4-10-7-8-10-6-13 23 0 0-5-25 0 1-17zm57 26l22 0 0 3-22 0zm0 5l22 0 0 3-22 0zm0-11l22 0 0 3-22 0zm-16-17l-1 29-1 11-4 11 4 2 4-11 2-13 0-25 46 0 0-4zm11 14l0 20 9 0-9 6-7 3 3 2 8-3 7 5-19 3 2 3 15-2 6-2 7 2 15 2 3-4-20-3 7-4 3-4-3-1-16 0 4-3 17 0 0-20-15 0 2-3 18 0 0-4-42 0 0 4 19 0-1 3zm23 26l-8 5-8-5zm43-38l0 4 11 0 0 4-15 0 0 4 15 0 0 5-11 0 0 3 11 0 0 5-12 0 0 4 12 0 0 4-14 0 0 4 14 0 0 6 5 0 0-6 17 0 0-4-17 0 0-4 15 0 0-4-15 0 0-5 13 0 0-8 5 0 0-4-5 0 0-8-13 0 0-5-5 0 0 5zm16 12l9 0 0 5-9 0zm0-4l0-4 9 0 0 4zm-34 14l2-2 8 0-4 14-4-9-3 2 5 11-2 4-6 6 4 3 7-9 8 5 8 2 28 1 2-5-29 0-8-2-7-5 4-13 1-8-8-1 9-16-3-2-14 1 0 4 10 0-6 12-4 3zm88 6l9 11 4-3-10-10zm-30 10l0 5 23-5-1-4-8 2 0-16 8 0 0-4-21 0 0 4 8 0 0 16zm25-23l0 20-4 7-7 6 3 3 8-7 4-7 1-18 13 0 1 29 3 2 5 0 3-1 1-2 0-5-3-2-1 5-4 1 0-1 0-30zm-15-20l-7 12-4 5 4 3 7-10 3 0 4 9 4-1-3-8 9 0 0-4-15 0 2-5zm23 0l-5 12-3 5 4 2 5-9 4 0 6 9 4-2-5-7 11 0 0-4-18 0 2-5zm28 47l0 4 55 0 0-4-25 0 0-35 22 0 0-5-49 0 0 5 22 0 0 35zm90-41l19 0 0 12-19 0zm-4-3l0 19 27 0 0-19zm-1 35l0 4 12 0 0 8-16 0 0 4 36 0 0-4-15 0 0-8 12 0 0-4-12 0 0-7 13 0 0-4-31 0 0 4 13 0 0 7zm-5-37l-19 5 1 3 9-1 0 9-10 0 0 4 9 0-6 14-4 6 2 4 9-16 0 27 4 0 0-26 6 7 3-3-9-9 0-4 8 0 0-4-8 0 0-10 8-3zm62 33l14 5 2-3-14-5zm-6 8l25 5 2-3-25-5zm-12-39l0 53 5 0 0-3 41 0 0 3 5 0 0-53zm5 46l0-42 41 0 0 42zm15-41l-3 5-10 8 3 3 6-5 6 6-16 5 2 4 18-7 17 6 2-3-15-5 8-7 3-4-3-1-16 0 2-4zm-2 9l16-1-8 7zm42 17l1-11 4-10 7-10 6 0-7 10-2 5-3 10 0 6 0 6 3 11 2 4 7 10-6 0-7-9-4-10zm28-7l-2 13 16 0-6 5-14 8 3 3 15-8 6-6 0 14 4 0 0-16 18 0-2 9-9 0 1 4 9 0 3-1 1-2 2-14-23 0 0-5 21 0 0-14-45 0 0 4 20 0 0 6zm4 4l14 0 0 5-15 0zm18-10l16 0 0 6-16 0zm-19-21l-6 10-4 5 4 2 6-8 3 0 4 7 4-1-3-6 10 0 0-4-16 0 2-4zm23 0l-4 10-4 4 4 3 6-8 4 0 4 7 4-2-3-5 11 0 0-4-19 0 2-4zm31 51l0-7 6 0 0 7zm18 0l0-7 7 0 0 7zm19 0l0-7 6 0 0 7zM3411 1921l0 4 55 0 0-4-25 0 0-19 20 0 0-5-20 0 0-16 22 0 0-5-49 0 0 5 22 0 0 16-19 0 0 5 19 0 0 19zm88-50l-8 10-9 8-11 6 3 4 7-4 0 4 16 0 0 9-16 0 0 4 16 0 0 10-23 0 0 4 52 0 0-4-24 0 0-10 16 0 0-4-16 0 0-9 16 0 0-4 7 4 4-4-10-6-9-6-8-8 1-2zm-18 23l13-10 6-6 5 6 13 10zm70 21l3 12 4-1-3-12zm12 0l5 12 4-1-4-12zm13 0l8 13 4-2-8-13zm-35-2l-5 10-3 3 5 2 3-4 4-9zm-6-32l0 5 19 0-6 8-7 6-8 5 3 4 8-5 8-8 6-9 0 23 5 0 0-23 6 9 8 7 8 6 3-4-8-5-7-6-6-8 19 0 0-5-23 0 0-9-5 0 0 9zM4082 1890l0 19 18 0 0 4-20 0 0 4 20 0 0 5-25 0 0 4 55 0 0-4-25 0 0-5 21 0 0-4-21 0 0-4 19 0 0-19-19 0 0-3 25 0 0-4-25 0 0-5 19-2-3-4-41 4 1 3 19-1 0 5-24 0 0 4 24 0 0 3zm4 11l14 0 0 5-14 0zm19 0l14 0 0 5-14 0zm-19-7l14 0 0 4-14 0zm19 0l14 0 0 4-14 0zm56-21l4 7-25 0 0 26-2 10-3 9 4 3 4-10 1-12 1-22 46 0 0-4-21 0-5-8zm5 13l-1 10-17 0 0 4 17 0-4 9-6 9-9 6 3 4 9-6 6-8 4-8 5 9 7 7 8 6 4-4-9-6-8-8-5-10 20 0 0-4-20 0 1-10zm56-14l-1 17-23 0 0 5 22 0-3 12-8 10-12 8 3 4 12-8 8-11 5-11 5 12 8 11 11 7 3-4-10-7-8-10-6-13 23 0 0-5-25 0 1-17zm61 30l0 4-24 0 0 5 24 0 0 12-12 1 2 4 9 0 4-2 2-4 0-11 25 0 0-5-25 0 0-2 10-6 5-3-3-3-31 1 0 4 25 0zm-2-29l5 9-14 0 2-1-6-8-3 1 5 8-10 0 0 12 4 0 0-8 43 0 0 8 5 0 0-12-10 0 6-8-5-2-6 10-10 0 3-1-3-6-2-4zm41 29l0 22 44 0 0 4 5 0 0-26-5 0 0 18-17 0 0-21 19 0 0-22-5 0 0 17-14 0 0-22-5 0 0 22-14 0 0-17-5 0 0 22 19 0 0 21-17 0 0-18zm61-29l0 34-1 10-3 8 3 3 3-7 2-15 9 0 0 22 4 0 0-26-12 0 0-9 16 0 0-4-6 0 0-17-4 0 0 17-6 0 0-16zm46 21l-2 7-5 11-2-6-4-12zm-23-18l0 31-1 10-4 9 4 2 4-9 1-11 1-14 1 0 5 15 3 6-4 4-8 5 3 4 8-5 3-4 7 7 4 2 3-3-4-3-7-6 4-7 3-9 2-10-3 0-20 0 0-10 24-4-3-4zm42-2l5 8 4-2-6-8zm-7 8l0 5 16 0-4 7-7 7-6 5 2 4 8-7 0 25 5 0 0-26 6 7 3-4-9-8 8-13-2-2zm37-10l0 19-14 0 0 4 14 0 0 26-17 0 0 5 36 0 0-5-15 0 0-26 13 0 0-4-13 0 0-19zM4868 1923l0-4 3-5 5-5 12-11 3-5 1-3-1-4-5-4-5 0-4 2-3 6-5-1 0-3 2-3 5-4 7-2 8 2 5 4 1 3 0 5-1 4-3 5-14 12-4 6 23 0 0 5zm68-22l-2 12-2 5-3 3-4 2-5 1-5-1-4-2-3-3-2-5-1-5 0-15 1-5 2-5 3-3 4-2 5-1 5 1 4 2 3 3 2 5zm-6 0l-1-11-3-6-6-2-6 2-3 6-1 11 1 10 3 6 6 2 6-2 3-6zm13 22l0-5 12 0 0-35-10 8 0-6 10-7 6 0 0 40 11 0 0 5zm66-12l-2 7-2 2-7 3-9 0-4-1-5-4-2-7 1-6 3-4 5-2-4-2-4-6 0-5 4-6 6-2 8 0 4 1 5 4 2 6-1 5-3 3-4 2 2 1 4 3 2 2zm-7-22l-1-4-3-3-5-1-6 2-2 6 0 3 2 3 6 2 6-2 2-3zm1 21l-1-5-2-1-7-3-5 2-2 1-1 2-1 4 1 5 3 3 5 1 6-1 1-1 2-2zm11 0l0 4 29 0 0 14 4 0 0-14 23 0 0-4-23 0 0-13 18 0 0-4-18 0 0-9 20 0 0-5-37 0 3-6-5-1-3 8-5 7-5 6 4 3 9-12 15 0 0 9-18 0 0 17zm15 0l0-13 14 0 0 13zm78-9l-2 12-2 5-3 3-4 2-5 1-5-1-4-2-3-3-2-5-1-5 0-15 1-5 2-5 3-3 4-2 5-1 5 1 4 2 3 3 2 5zm-6 0l-1-11-3-6-6-2-6 2-3 6-1 11 1 10 3 6 6 2 5-2 4-6zm12 22l0-4 2-5 5-5 13-11 2-5 1-3-1-4-5-4-5 0-3 2-3 6-6-1 1-3 1-3 5-4 8-2 7 2 5 4 1 3 1 5-1 4-4 5-13 12-5 6 24 0 0 5zm45-48l0 29-3 11-7 10 3 3 5-6 4-6 2-7 29 0 0 13-2 1-11 0 2 5 10 0 5-2 1-5 0-46zm5 5l28 0 0 10-28 0zm0 14l28 0 0 11-29 0zM5697 1901l-2 13-2 5-3 4-4 2-5 0-6-1-4-3-3-5 5-1 2 3 3 2 3 1 6-2 3-6 1-10-2 3-6 3-6 0-6-4-4-6 0-5 0-4 4-7 3-2 8-2 5 1 3 2 3 3 2 4zm-6-5l-1-6-3-5-3-1-2 0-5 1-3 4-1 5 1 6 3 4 2 1 4 0 5-2 2-4zm42-11l-11 20-4 12 0 8-6 0 1-12 2-6 3-7 10-15-25 0 0-5 30 0zm37 27l-1 4-3 6-7 3-9 0-4-1-5-5-2-7 1-5 3-4 5-2-4-2-4-6 1-5 3-6 6-2 8 0 4 1 5 4 2 6-1 5-3 3-4 2 4 2 2 2 2 4zm-7-21l-1-4-3-3-5 0-6 1-2 6 2 6 6 2 6-2 2-1zm1 21l-1-5-2-2-7-2-5 1-2 2-2 3 0 3 1 5 3 3 5 1 6-1 1-1 2-2zm41-27l-11 20-3 12-1 8-6 0 2-12 2-6 3-7 9-15-24 0 0-5 29 0zm37 25l-2 8-5 6-4 1-9 0-3-1-5-3-3-6 6-1 2 4 3 2 4 1 6-2 3-3 1-6-1-5-3-3-3-1-6 0-5 3-5 0 1-24 25 0 0 5-20 0-1 14 3-2 7-1 7 2 5 5zm36 0l-2 8-5 6-3 1-9 0-4-2-3-3-2-5-2-5 1-14 1-6 2-4 3-4 4-2 5-1 6 1 4 3 3 5-6 1-1-3-3-1-3-1-6 2-3 6-1 10 2-4 4-2 8 0 4 2 4 5zm-6 0l-1-5-1-2-4-3-7 1-4 3 0 2 0 9 4 4 2 1 5 0 4-2 1-2zm12 15l0-4 3-5 4-5 13-12 3-4 0-3-1-4-5-4-4 0-4 2-3 6-6-1 1-3 2-3 5-4 7-2 8 2 4 4 2 3 0 5-1 4-4 5-13 12-5 6 24 0 0 5zm61-10l0 10-5 0 0-10-21 0 0-5 20-30 6 0 0 30 6 0 0 5zm-5-29l-16 24 16 0zm46 24l-1 8-5 6-4 1-9 0-3-2-4-3-2-5-1-5 0-14 1-6 3-4 3-4 4-2 4-1 6 1 5 3 2 5-5 1-2-3-2-1-4-1-5 2-4 6-1 10 3-4 4-2 8 0 3 2 5 5zm-5 0l-1-5-2-2-4-3-7 1-3 3-1 2 1 9 3 4 2 1 5 0 4-2 2-2zm41-9l-1 13-3 5-3 4-4 2-5 0-6-1-4-3-3-5 6-1 1 3 3 2 3 1 6-2 3-6 2-10-3 3-6 3-6 0-6-4-3-6-1-5 1-4 3-7 3-2 8-2 5 1 4 2 3 3 2 4zm-6-5l-1-6-3-5-2-1-3 0-5 1-3 4-1 5 1 6 3 4 3 1 4 0 4-2 3-4zm43 14l-2 8-5 6-3 1-9 0-4-2-3-3-2-5-2-5 0-14 2-6 2-4 3-4 4-2 5-1 6 1 4 3 3 5-6 1-1-3-3-1-3-1-6 2-3 6-2 10 3-4 4-2 8 0 3 2 5 5zm-6 0l-1-5-1-2-4-3-8 1-3 3-1 2 1 9 3 4 3 1 5 0 4-2 1-2zm42-25l-12 20-3 12-1 8-6 0 2-12 2-6 3-7 9-15-24 0 0-5 30 0zm31 30l0 10-6 0 0-10-21 0 0-5 21-30 6 0 0 30 6 0 0 5zm-6-29l-15 24 15 0zM6360 1912l-1 7-6 5-3 1-5 0-8-1-5-4-3-7 6 0 2 4 3 3 5 1 7-3 2-3 0-3 0-2-2-4-5-1-7-1 0-5 9 0 3-3 1-4-1-4-3-3-7-1-5 3-1 4-6 0 3-6 2-3 6-2 8 0 4 1 4 4 2 6-1 5-3 4-5 2 5 2 3 1 2 5zm36 0l-1 7-5 5-4 1-5 0-8-1-5-4-2-7 6 0 1 4 3 3 5 1 7-3 2-3 1-3-1-2-2-4-5-1-7-1 0-5 9 0 3-3 1-4-1-4-2-3-7-1-5 3-2 4-6 0 3-6 2-3 6-2 8 0 4 1 5 4 1 6-1 5-3 4-5 2 6 2 2 1 2 5zM1851 1982l-6 11-3 4 2 4 6-8 14 0 0-4-12 0 3-6zm1 56l13-8-1-3-7 3 0-14 8 0 0-4-8 0 0-8 6 0 0-4-16 0 0 4 5 0 0 8-8 0 0 4 8 0 0 14 0 2-2 2zm14-53l0 53 4 0 0-49 22 0 0 44-8 0 2 4 8-1 2-1 1-3 0-47zm20 7l-4 14-7-11-3 2 8 14-9 17 3 3 8-15 5 11 3-2-6-14 6-19zm38 12l0 6-11 0 0-6zm-15-4l0 21-2 8-3 7 3 2 3-4 3-10 11 0 0 9-7 1 1 4 8-1 1-1 1-3 0-33zm15 14l0 6-11 0 0-6zm15-16l0 7-9 0 0 4 9 0-1 9-3 9-7 8 4 3 7-9 4-10 0-10 10 0-1 13-1 11-2 1-7-1 1 5 9-1 2-1 2-4 1-27-14 0 0-7zm-26-16l-6 11-4 4 4 2 6-8 3 0 3 8 4-1-3-7 11 0 0-3-16 0 2-5zm23 0l-2 5-8 9 4 3 6-8 5 0 4 8 4-1-3-7 12 0 0-3-19 0 2-5zm41 23l32 0 0 4-32 0zm0 7l32 0 0 3-32 0zm0-13l32 0 0 3-32 0zm20-17l-5 8-3 4 3 2-12 0 4-1-3-5 11 0 0-4-16 0 1-3-4-1-5 9-4 3 4 3 5-7 3 0 4 6-7 0 0 23 8 0 0 5-16 0 0 4 14 0-6 5-7 2 3 3 8-3 5-4 3-3 16 0 0 10 5 0 0-10 14 0 0-4-14 0 0-5 7 0 0-23-6 0 4-2-3-4 11 0 0-4-19 0 2-3zm4 42l-15 0 0-5 15 0zm-8-28l5-6 4 0 5 6zm45-3l31 0 0 3-31 0zm0-6l31 0 0 3-31 0zm-4-3l0 15 39 0 0-15zm-8 17l0 4 55 0 0-4zm11 16l14 0 0 3-14 0zm19 0l14 0 0 3-14 0zm-19-7l14 0 0 4-14 0zm19 0l14 0 0 4-14 0zm-30 23l0 4 55 0 0-4-25 0 0-4 20 0 0-3-20 0 0-3 19 0 0-15-42 0 0 15 18 0 0 3-20 0 0 3 20 0 0 4zM2641 2008l32 0 0 9-32 0zm0-4l0-9 32 0 0 9zm0 17l32 0 0 9-32 0zm13-39l-3 8-15 0 0 48 5 0 0-3 32 0 0 3 5 0 0-48-22 0 3-7zm35 48l2 4 17-7-1-4zm2-23l9-1-8 10-2 2 1 4 17-4-1-4-10 2 12-19-4-2-3 7-7 0 10-19-5-1-5 14-6 7zm34 5l0 9-5 0 0-9zm3 0l5 0 0 9-5 0zm-12-4l0 30 4 0 0-14 5 0 0 12 3 0 0-12 5 0 0 12 3 0 0-12 4 0 0 10-3 0 1 4 3-1 2-1 1-28zm20 4l4 0 0 9-4 0zm-12-29l3 6-15 0 0 23-2 12-4 10 4 3 4-11 2-12 0-11 27 0 0-14-12 0-3-7zm-8 9l23 0 0 7-23 0zm65 35l15 7 6 4 3-4-6-4-16-7zm-18-28l9 7 3-3-10-7zm-6 10l9 7 3-4-10-6zm-4-20l0 12 5 0 0-8 41 0 0 8 5 0 0-12-21 0-4-7-5 1 3 6zm-1 29l0 4 22 0-4 5-7 4-10 3 3 4 11-4 8-5 5-7 25 0 0-4-24 0 1-7 1-15-4 0-1 15-2 7zm96-31l0 43 4 0 0-43zm13-4l0 54 4 0 0-54zm-26 1l0 32-2 10-4 9 4 3 4-10 2-11 1-33zm-20 2l10 10 3-3-10-10zm5 51l12-11-2-4-6 5 0-26-13 0 0 5 9 0 0 22 0 2-3 4zm71-6l0 5 37 0 0-5-17 0 0-19 18 0 0-4-18 0 0-17 15-4-3-4-9 3-23 4 1 4 15-2 0 16-18 0 0 4 18 0 0 19zm-3-49l-5 9-5 9-7 7 3 4 7-8 0 35 5 0 0-42 6-13zm70 28l-1 6-18 0 0 4 17 0-5 7-7 4-10 3 3 4 11-4 7-6 6-8 18 0-1 7-3 6-12 0 2 4 9 0 5-1 2-3 1-6 2-11-22 0 1-6zm18-18l-4 4-10 5-8-5-3-3 1-1zm-22-10l-4 5-6 6-8 5 3 3 9-5 9 7-23 4 2 4 17-3 9-3 8 3 17 3 3-4-16-2-7-2 12-8 5-5-3-2-26 0 4-5zm82 5l11 9 3-4-12-8zm-36 6l0 4 17 0 0 12-21 0 0 4 21 0 0 25 5 0 0-25 23 0-1 8-2 6-12 0 2 5 9 0 5-2 1-3 2-6 1-12-9 0 0-16-19 0 0-11-5 0 0 11zm22 16l0-12 14 0 0 12zm73 1l2 11 4 10 7 8 3-2-6-8-4-9-1-10 1-10 4-9 6-8-3-2-7 8-4 10zm31-12l0 3 13 0 0-3zm-2 7l0 3 15 0 0-3zm26 0l0 3 15 0 0-3zm0-7l0 3 13 0 0-3zm-31-6l0 11 4 0 0-8 19 0 0 14 5 0 0-14 19 0 0 8 4 0 0-11-23 0 0-4 20 0 0-4-45 0 0 4 20 0 0 4zm4 28l0 18 4 0 0-15 9 0 0 15 4 0 0-15 10 0 0 15 4 0 0-15 9 0 0 11-6 0 2 4 5 0 3-1 1-2 0-15-23 0 1-5 25 0 0-4-53 0 0 4 24 0-2 5zm58 11l22-7 0-4-17 4 0-16 17 0 0-5-17 0 0-11 17-5-4-4-18 6 0 33 0 2-2 2zm27-45l0 52 4 0 0-47 14 0 0 32-9 1 2 5 7-1 4-1 1-2 0-39zm34 47l0-7 6 0 0 7zm18 0l0-7 7 0 0 7zm19 0l0-7 6 0 0 7zM3421 2013l-5 9-4 4 4 2 9-13zm35 2l6 13 4-1-7-14zm-40-11l0 5 17 0-3 10-6 9-11 6 2 4 13-7 7-10 3-12 12 0 0 13-2 11-2 1-8-1 1 4 8 1 5-3 1-4 1-9 1-18-17 0 0-6-4 0-1 6zm31-22l0 6-17 0 0-6-4 0 0 6-14 0 0 4 14 0 0 7 4 0 0-7 17 0 0 7 4 0 0-7 14 0 0-4-14 0 0-6zm28 4l10 6 3-3-11-6zm-3 18l10 6 2-3-10-7zm1 31l4 2 3-6 5-14-3-2zm30-30l7 6-13 0 1-8 21 0 0 8-9 0 2-1-1-3-5-4zm-17 6l0 5 6 0-2 13 27 0-2 4-9 0 1 4 10 0 2-2 2-6 5 0 0-4-4 0 1-9 5 0 0-5-5 0 0-12-29 0-1 12zm10 5l22 0 0 9-23 0zm5 2l8 7 2-2-7-7zm-5-36l-6 13-4 6 4 2 6-10 30 0 0-4-28 0 2-6zm86 22l-16 9 0-14-4 0 0 17-10 4 2 4 8-4 0 14 3 2 16 1 4-1 3-4 1-7-5-2-1 9-13 1-3-1-1-14 19-11zm-33-5l-5 7-5 6-6 5 4 4 6-6 0 23 5 0 0-29 5-9zm19-17l0 6-15 0 0-6-5 0 0 6-14 0 0 4 14 0 0 5 5 0 0-5 15 0 0 6 5 0 0-6 14 0 0-4-14 0 0-6zM6360 2022l-1 7-6 5-3 1-5 0-8-1-5-4-3-7 6 0 2 4 3 3 5 1 7-3 2-3 0-3 0-2-2-4-5-1-7-1 0-5 9 0 3-3 1-4-1-4-3-3-7-1-5 3-1 4-6 0 3-6 2-3 6-2 8 0 4 1 4 4 2 6-1 5-3 4-5 2 5 2 3 1 2 5zm36 0l-1 7-5 5-4 1-5 0-8-1-5-4-2-7 6 0 1 4 3 3 5 1 7-3 2-3 1-3-1-2-2-4-5-1-7-1 0-5 9 0 3-3 1-4-1-4-2-3-7-1-5 3-2 4-6 0 3-6 2-3 6-2 8 0 4 1 5 4 1 6-1 5-3 4-5 2 6 2 2 1 2 5zM1871 2114l3 7-19 0 0 3 11 0-1 9-5 7-8 5 3 3 7-4 4-5 3-6 18 0-2 10-10 0 1 4 10 0 3-1 1-2 2-14-22 0 1-6 25 0 0-3-21 0 4-2-3-4-1-2zm-4-21l2 5-21 0 0 25-2 12-4 11 4 2 5-12 1-12 1-12 41 0 0-14-20 0-3-6zm-14 9l36 0 0 6-36 0zm61-3l36 0 0 6-36 0zm-4-4l-1 28-2 12-4 11 4 2 5-11 2-13 0-15 41 0 0-14zm8 33l15-1 0 5-16 0 0 4 16 0 0 7-20 0 0 3 46 0 0-3-21 0 0-7 16 0 0-4-16 0 0-6 11 0 4 4 3-3-12-10 13 0 0-4-42 0 0 4 11 0-6 5-3 2zm23-9l4 3-20 1 7-6 12 0zm45-22l0 4 11 0 0 4-15 0 0 4 15 0 0 5-11 0 0 3 11 0 0 5-12 0 0 4 12 0 0 4-14 0 0 4 14 0 0 6 5 0 0-6 17 0 0-4-17 0 0-4 15 0 0-4-15 0 0-5 13 0 0-8 5 0 0-4-5 0 0-8-13 0 0-5-5 0 0 5zm16 12l9 0 0 5-9 0zm0-4l0-4 9 0 0 4zm-34 14l2-2 8 0-4 14-4-9-3 2 5 11-2 4-6 6 4 3 7-9 8 5 8 2 28 1 2-5-29 0-8-2-7-5 4-13 1-8-8-1 9-16-3-2-14 1 0 4 10 0-6 12-4 3zm88 6l9 11 4-3-10-10zm-30 10l0 5 23-5-1-4-8 2 0-16 8 0 0-4-21 0 0 4 8 0 0 16zm25-23l0 20-4 7-7 6 3 3 8-7 4-7 1-18 13 0 1 29 3 2 5 0 3-1 1-2 0-5-3-2-1 5-4 1 0-1 0-30zm-15-20l-7 12-4 5 4 3 7-10 3 0 4 9 4-1-3-8 9 0 0-4-15 0 2-5zm23 0l-5 12-3 5 4 2 5-9 4 0 6 9 4-2-5-7 11 0 0-4-18 0 2-5zm28 37l0 4 39 0 0-4zm13-36l-6 27 39 0-1 12-2 7-2 3-3 1-11 0 1 4 11 0 4-1 4-5 2-9 2-16-38 0 2-11 35 0 0-5-34 0 1-6zm49 5l8 7 3-3-8-7zm23 22l2 4-26 0 0 4 21 0-6 4-16 5 3 3 11-3-1 6-2 2 1 3 21-5 0-3-15 3 0-8 10-7 6 9 9 7 11 4 3-4-11-4-4-2 11-6-4-3-10 7-6-8 23 0 0-4-24 0-3-5zm11-28l0 8-14 0 0 4 14 0 0 10-13 0 0 4 31 0 0-4-13 0 0-10 14 0 0-4-14 0 0-8zm-36 22l2 3 13-5 0 9 4 0 0-29-4 0 0 15zm85 1l0 25 5 0 0-21 8 0 0 29 4 0 0-29 9 0 0 16-6 0 1 4 7 0 2-1 0-4 0-19-13 0 0-11 15 0 0-4-24 0 2-7-4-1-5 13-3 5 4 2 4-8 7 0 0 11zm-17-23l-4 17-3 7 3 3 6-14 9 0-3 9 3 1 5-13-3-1-10 1 1-9zm1 56l13-11-1-4-7 5 0-24-5 0 0 24 0 3-2 3zm54-9l0 4 55 0 0-4-25 0 0-35 22 0 0-5-49 0 0 5 22 0 0 35zm90-41l19 0 0 12-19 0zm-4-3l0 19 27 0 0-19zm-1 35l0 4 12 0 0 8-16 0 0 4 36 0 0-4-15 0 0-8 12 0 0-4-12 0 0-7 13 0 0-4-31 0 0 4 13 0 0 7zm-5-37l-19 5 1 3 9-1 0 9-10 0 0 4 9 0-6 14-4 6 2 4 9-16 0 27 4 0 0-26 6 7 3-3-9-9 0-4 8 0 0-4-8 0 0-10 8-3zm47 3l10 10 3-4-10-9zm-5 15l0 5 10 0 0 22-1 2-3 3 3 4 14-11-1-4-8 5 0-26zm35-19l0 20-15 0 0 5 15 0 0 31 5 0 0-31 15 0 0-5-15 0 0-20zm29 51l0-7 6 0 0 7zm18 0l0-7 7 0 0 7zm19 0l0-7 6 0 0 7zM2641 2118l32 0 0 9-32 0zm0-4l0-9 32 0 0 9zm0 17l32 0 0 9-32 0zm13-39l-3 8-15 0 0 48 5 0 0-3 32 0 0 3 5 0 0-48-22 0 3-7zm35 48l2 4 17-7-1-4zm2-23l9-1-8 10-2 2 1 4 17-4-1-4-10 2 12-19-4-2-3 7-7 0 10-19-5-1-5 14-6 7zm34 5l0 9-5 0 0-9zm3 0l5 0 0 9-5 0zm-12-4l0 30 4 0 0-14 5 0 0 12 3 0 0-12 5 0 0 12 3 0 0-12 4 0 0 10-3 0 1 4 3-1 2-1 1-28zm20 4l4 0 0 9-4 0zm-12-29l3 6-15 0 0 23-2 12-4 10 4 3 4-11 2-12 0-11 27 0 0-14-12 0-3-7zm-8 9l23 0 0 7-23 0zm38-6l9 9 4-3-9-9zm-3 15l0 5 8 0 0 21 0 2-3 3 3 4 12-10-2-4-6 5 0-26zm42-3l0 15-10 0 0-15zm-15-16l0 12-8 0 0 4 8 0 0 12 0 3-10 0 0 4 10 0-2 7-2 6-5 5 4 3 5-6 3-7 1-8 11 0 0 21 5 0 0-21 8 0 0-4-8 0 0-15 7 0 0-4-7 0 0-12-5 0 0 12-10 0 0-12zm56 1l6 15 4-2-6-14zm23 3l-4 12-6 10-7 9-7-9-6-9-5-10-4 1 5 11 6 10 7 9-7 6-8 4-10 4 3 4 10-4 8-5 8-6 7 6 8 5 10 4 3-4-9-4-9-4-7-6 8-9 6-11 5-12zm55 24l2 11 4 10 7 8 3-2-6-8-4-9-1-10 1-10 4-9 6-8-3-2-7 8-4 10zm53-6l21 17 4-4-21-16zm-30-18l0 5 27 0-7 10-10 9-11 8 3 4 8-5 14-13 0 34 5 0 0-40 4-7 20 0 0-5zm63 45l22-7 0-4-17 4 0-16 17 0 0-5-17 0 0-11 17-5-4-4-18 6 0 33 0 2-2 2zm27-45l0 52 4 0 0-47 14 0 0 32-9 1 2 5 7-1 4-1 1-2 0-39zm67 2l0 35 5 0 0-35zm13-5l0 49-2 1-8 0 2 5 10-1 2-3 0-51zm-40 25l0 23 3 0 0-19 6 0 0 26 4 0 0-26 6 0 0 15-5 0 2 4 6-1 1-2 0-20-10 0 0-7 10 0 0-16-29 0 0 30-1 10-3 9 3 3 4-10 1-11 1-15 10 0 0 7zm-1-18l20 0 0 7-20 0zm69 20l-2-11-4-10-7-8-3 2 6 8 4 9 1 10-1 10-4 9-6 8 3 2 7-8 4-10zM3421 2123l-5 9-4 4 4 2 9-13zm35 2l6 13 4-1-7-14zm-40-11l0 5 17 0-3 10-6 9-11 6 2 4 13-7 7-10 3-12 12 0 0 13-2 11-2 1-8-1 1 4 8 1 5-3 1-4 1-9 1-18-17 0 0-6-4 0-1 6zm31-22l0 6-17 0 0-6-4 0 0 6-14 0 0 4 14 0 0 7 4 0 0-7 17 0 0 7 4 0 0-7 14 0 0-4-14 0 0-6zm28 4l10 6 3-3-11-6zm-3 18l10 6 2-3-10-7zm1 31l4 2 3-6 5-14-3-2zm30-30l7 6-13 0 1-8 21 0 0 8-9 0 2-1-1-3-5-4zm-17 6l0 5 6 0-2 13 27 0-2 4-9 0 1 4 10 0 2-2 2-6 5 0 0-4-4 0 1-9 5 0 0-5-5 0 0-12-29 0-1 12zm10 5l22 0 0 9-23 0zm5 2l8 7 2-2-7-7zm-5-36l-6 13-4 6 4 2 6-10 30 0 0-4-28 0 2-6zm86 22l-16 9 0-14-4 0 0 17-10 4 2 4 8-4 0 14 3 2 16 1 4-1 3-4 1-7-5-2-1 9-13 1-3-1-1-14 19-11zm-33-5l-5 7-5 6-6 5 4 4 6-6 0 23 5 0 0-29 5-9zm19-17l0 6-15 0 0-6-5 0 0 6-14 0 0 4 14 0 0 5 5 0 0-5 15 0 0 6 5 0 0-6 14 0 0-4-14 0 0-6zM6360 2132l-1 7-6 5-3 1-5 0-8-1-5-4-3-7 6 0 2 4 3 3 5 1 7-3 2-3 0-3 0-2-2-4-5-1-7-1 0-5 9 0 3-3 1-4-1-4-3-3-7-1-5 3-1 4-6 0 3-6 2-3 6-2 8 0 4 1 4 4 2 6-1 5-3 4-5 2 5 2 3 1 2 5zm36 0l-1 7-5 5-4 1-5 0-8-1-5-4-2-7 6 0 1 4 3 3 5 1 7-3 2-3 1-3-1-2-2-4-5-1-7-1 0-5 9 0 3-3 1-4-1-4-2-3-7-1-5 3-2 4-6 0 3-6 2-3 6-2 8 0 4 1 5 4 1 6-1 5-3 4-5 2 6 2 2 1 2 5zM1871 2224l3 7-19 0 0 3 11 0-1 9-5 7-8 5 3 3 7-4 4-5 3-6 18 0-2 10-10 0 1 4 10 0 3-1 1-2 2-14-22 0 1-6 25 0 0-3-21 0 4-2-3-4-1-2zm-4-21l2 5-21 0 0 25-2 12-4 11 4 2 5-12 1-12 1-12 41 0 0-14-20 0-3-6zm-14 9l36 0 0 6-36 0zm61-3l36 0 0 6-36 0zm-4-4l-1 28-2 12-4 11 4 2 5-11 2-13 0-15 41 0 0-14zm8 33l15-1 0 5-16 0 0 4 16 0 0 7-20 0 0 3 46 0 0-3-21 0 0-7 16 0 0-4-16 0 0-6 11 0 4 4 3-3-12-10 13 0 0-4-42 0 0 4 11 0-6 5-3 2zm23-9l4 3-20 1 7-6 12 0zm45-22l0 4 11 0 0 4-15 0 0 4 15 0 0 5-11 0 0 3 11 0 0 5-12 0 0 4 12 0 0 4-14 0 0 4 14 0 0 6 5 0 0-6 17 0 0-4-17 0 0-4 15 0 0-4-15 0 0-5 13 0 0-8 5 0 0-4-5 0 0-8-13 0 0-5-5 0 0 5zm16 12l9 0 0 5-9 0zm0-4l0-4 9 0 0 4zm-34 14l2-2 8 0-4 14-4-9-3 2 5 11-2 4-6 6 4 3 7-9 8 5 8 2 28 1 2-5-29 0-8-2-7-5 4-13 1-8-8-1 9-16-3-2-14 1 0 4 10 0-6 12-4 3zm88 6l9 11 4-3-10-10zm-30 10l0 5 23-5-1-4-8 2 0-16 8 0 0-4-21 0 0 4 8 0 0 16zm25-23l0 20-4 7-7 6 3 3 8-7 4-7 1-18 13 0 1 29 3 2 5 0 3-1 1-2 0-5-3-2-1 5-4 1 0-1 0-30zm-15-20l-7 12-4 5 4 3 7-10 3 0 4 9 4-1-3-8 9 0 0-4-15 0 2-5zm23 0l-5 12-3 5 4 2 5-9 4 0 6 9 4-2-5-7 11 0 0-4-18 0 2-5zm28 37l0 4 39 0 0-4zm13-36l-6 27 39 0-1 12-2 7-2 3-3 1-11 0 1 4 11 0 4-1 4-5 2-9 2-16-38 0 2-11 35 0 0-5-34 0 1-6zm49 5l8 7 3-3-8-7zm23 22l2 4-26 0 0 4 21 0-6 4-16 5 3 3 11-3-1 6-2 2 1 3 21-5 0-3-15 3 0-8 10-7 6 9 9 7 11 4 3-4-11-4-4-2 11-6-4-3-10 7-6-8 23 0 0-4-24 0-3-5zm11-28l0 8-14 0 0 4 14 0 0 10-13 0 0 4 31 0 0-4-13 0 0-10 14 0 0-4-14 0 0-8zm-36 22l2 3 13-5 0 9 4 0 0-29-4 0 0 15zm85 1l0 25 5 0 0-21 8 0 0 29 4 0 0-29 9 0 0 16-6 0 1 4 7 0 2-1 0-4 0-19-13 0 0-11 15 0 0-4-24 0 2-7-4-1-5 13-3 5 4 2 4-8 7 0 0 11zm-17-23l-4 17-3 7 3 3 6-14 9 0-3 9 3 1 5-13-3-1-10 1 1-9zm1 56l13-11-1-4-7 5 0-24-5 0 0 24 0 3-2 3zm54-9l0 4 55 0 0-4-25 0 0-35 22 0 0-5-49 0 0 5 22 0 0 35zm90-41l19 0 0 12-19 0zm-4-3l0 19 27 0 0-19zm-1 35l0 4 12 0 0 8-16 0 0 4 36 0 0-4-15 0 0-8 12 0 0-4-12 0 0-7 13 0 0-4-31 0 0 4 13 0 0 7zm-5-37l-19 5 1 3 9-1 0 9-10 0 0 4 9 0-6 14-4 6 2 4 9-16 0 27 4 0 0-26 6 7 3-3-9-9 0-4 8 0 0-4-8 0 0-10 8-3zm47 3l10 10 3-4-10-9zm-5 15l0 5 10 0 0 22-1 2-3 3 3 4 14-11-1-4-8 5 0-26zm35-19l0 20-15 0 0 5 15 0 0 31 5 0 0-31 15 0 0-5-15 0 0-20zm29 51l0-7 6 0 0 7zm18 0l0-7 7 0 0 7zm19 0l0-7 6 0 0 7zM2650 2207l0 4 11 0 0 4-15 0 0 4 15 0 0 5-11 0 0 3 11 0 0 5-12 0 0 4 12 0 0 4-14 0 0 4 14 0 0 6 5 0 0-6 17 0 0-4-17 0 0-4 15 0 0-4-15 0 0-5 13 0 0-8 5 0 0-4-5 0 0-8-13 0 0-5-5 0 0 5zm16 12l9 0 0 5-9 0zm0-4l0-4 9 0 0 4zm-34 14l2-2 8 0-4 14-4-9-3 2 5 11-2 4-6 6 4 3 7-9 8 5 8 2 28 1 2-5-29 0-8-2-7-5 4-13 1-8-8-1 9-16-3-2-14 1 0 4 10 0-6 12-4 3zm88 6l9 11 4-3-10-10zm-30 10l0 5 23-5-1-4-8 2 0-16 8 0 0-4-21 0 0 4 8 0 0 16zm25-23l0 20-4 7-7 6 3 3 8-7 4-7 1-18 13 0 1 29 3 2 5 0 3-1 1-2 0-5-3-2-1 5-4 1 0-1 0-30zm-15-20l-7 12-4 5 4 3 7-10 3 0 4 9 4-1-3-8 9 0 0-4-15 0 2-5zm23 0l-5 12-3 5 4 2 5-9 4 0 6 9 4-2-5-7 11 0 0-4-18 0 2-5zm28 47l0 4 55 0 0-4-25 0 0-35 22 0 0-5-49 0 0 5 22 0 0 35zm90-41l19 0 0 12-19 0zm-4-3l0 19 27 0 0-19zm-1 35l0 4 12 0 0 8-16 0 0 4 36 0 0-4-15 0 0-8 12 0 0-4-12 0 0-7 13 0 0-4-31 0 0 4 13 0 0 7zm-5-37l-19 5 1 3 9-1 0 9-10 0 0 4 9 0-6 14-4 6 2 4 9-16 0 27 4 0 0-26 6 7 3-3-9-9 0-4 8 0 0-4-8 0 0-10 8-3zm47 3l10 10 3-4-10-9zm-5 15l0 5 10 0 0 22-1 2-3 3 3 4 14-11-1-4-8 5 0-26zm35-19l0 20-15 0 0 5 15 0 0 31 5 0 0-31 15 0 0-5-15 0 0-20zm38 11l31 0 0 3-31 0zm0-6l31 0 0 3-31 0zm-4-3l0 15 39 0 0-15zm-8 17l0 4 55 0 0-4zm11 16l14 0 0 3-14 0zm19 0l14 0 0 3-14 0zm-19-7l14 0 0 4-14 0zm19 0l14 0 0 4-14 0zm-30 23l0 4 55 0 0-4-25 0 0-4 20 0 0-3-20 0 0-3 19 0 0-15-42 0 0 15 18 0 0 3-20 0 0 3 20 0 0 4zm61-14l0 4 39 0 0-4zm13-36l-6 27 39 0-1 12-2 7-2 3-3 1-11 0 1 4 11 0 4-1 4-5 2-9 2-16-38 0 2-11 35 0 0-5-34 0 1-6zm53 3l10 10 3-4-10-9zm-5 15l0 5 10 0 0 22-1 2-3 3 3 4 14-11-1-4-8 5 0-26zm35-19l0 20-15 0 0 5 15 0 0 31 5 0 0-31 15 0 0-5-15 0 0-20zm67 24l0 32 5 0 0-32zm-17 0l-1 15-2 7-7 7 4 4 7-8 3-9 0-16zm9-24l-4 8-7 8-9 7 3 3 7-5 7-7 5-6 5 7 6 6 7 5 3-4-7-5-7-6-5-8 1-2zm-20 0l-3 9-5 8-6 7 3 5 5-7 0 34 5 0 0-41 6-14zm87 28l2 11 4 10 7 8 3-2-6-8-4-9-1-10 1-10 4-9 6-8-3-2-7 8-4 10zm25 23l0-7 6 0 0 7zm18 0l0-7 7 0 0 7zm19 0l0-7 6 0 0 7zM3434 2240l-4 9-3 3 3 3 8-14zm20 1l8 13 4-2-8-13zm-31-39l-4 4-9 9 3 3 10-9 4-5zm23 0l-5 7-7 7-8 5 3 4 12-10 5-6 12 12-23 0 0 4 9 0 0 7-15 0 0 5 15 0 0 16-8 1 2 4 7 0 3-2 1-3 0-16 16 0 0-5-16 0 0-7 10 0 0-4 5 3 3-3-13-9-6-6 2-3zm-22 12l-4 6-11 11 3 4 7-6 0 29 4 0 0-34 5-8zm74-11l3 8-23 0-1 27-1 9-5 8 4 4 5-10 2-10 1-23 43 0 0-5-23 0 3 0-4-9zm65 11l13 10-16 0 0 4 11 0 0 26-7 0 2 4 6 0 3-2 1-1 0-27 7 0-3 8 3 1 5-12-10-1 2-2-4-4 10-12-3-2-21 1 0 4 17 0-6 7-6-4zm-28 13l0 4 10 0 0 6-9 0 0 20 4 0 0-3 14 0 0 2 4 0 0-19-9 0 0-6 10 0 0-4-10 0 0-6 6 0 0-4-17 0 0 4 7 0 0 6zm5 23l0-9 14 0 0 9zm6-48l-4 5-10 9 2 4 13-12 11 11 3-4-12-10 1-2zM4125 2211l-5 6-12 11 0-25-5 0 0 29-11 7 3 4 8-5 1 16 3 2 15 1 5-2 3-4 1-9-5-3-2 12-2 1-10 0-2 0-1-1-1-17 15-13 6-7zm-34-9l-4 9-6 8-6 7 3 5 7-8 0 35 4 0 0-43 7-12zm70 30l0 4-24 0 0 5 24 0 0 12-12 1 2 4 9 0 4-2 2-4 0-11 25 0 0-5-25 0 0-2 10-6 5-3-3-3-31 1 0 4 25 0zm-2-29l5 9-14 0 2-1-6-8-3 1 5 8-10 0 0 12 4 0 0-8 43 0 0 8 5 0 0-12-10 0 6-8-5-2-6 10-10 0 3-1-3-6-2-4zm38 46l0 4 55 0 0-4-25 0 0-35 22 0 0-5-49 0 0 5 22 0 0 35zm110-33l-10 21 4 2 10-21zm-47 1l8 22 5-2-9-21zm31-14l0 47-11 0 0-47-4 0 0 47-17 0 0 5 54 0 0-5-18 0 0-47zm31 29l0 22 44 0 0 4 5 0 0-26-5 0 0 18-17 0 0-21 19 0 0-22-5 0 0 17-14 0 0-22-5 0 0 22-14 0 0-17-5 0 0 22 19 0 0 21-17 0 0-18zm61-29l0 34-1 10-3 8 3 3 3-7 2-15 9 0 0 22 4 0 0-26-12 0 0-9 16 0 0-4-6 0 0-17-4 0 0 17-6 0 0-16zm46 21l-2 7-5 11-2-6-4-12zm-23-18l0 31-1 10-4 9 4 2 4-9 1-11 1-14 1 0 5 15 3 6-4 4-8 5 3 4 8-5 3-4 7 7 4 2 3-3-4-3-7-6 4-7 3-9 2-10-3 0-20 0 0-10 24-4-3-4zm42-2l5 8 4-2-6-8zm-7 8l0 5 16 0-4 7-7 7-6 5 2 4 8-7 0 25 5 0 0-26 6 7 3-4-9-8 8-13-2-2zm37-10l0 19-14 0 0 4 14 0 0 26-17 0 0 5 36 0 0-5-15 0 0-26 13 0 0-4-13 0 0-19zM4868 2253l0-4 3-5 5-5 12-11 3-5 1-3-1-4-5-4-5 0-4 2-3 6-5-1 0-3 2-3 5-4 7-2 8 2 5 4 1 3 0 5-1 4-3 5-14 12-4 6 23 0 0 5zm68-22l-2 12-2 5-3 3-4 2-5 1-5-1-4-2-3-3-2-5-1-5 0-15 1-5 2-5 3-3 4-2 5-1 5 1 4 2 3 3 2 5zm-6 0l-1-11-3-6-6-2-6 2-3 6-1 11 1 10 3 6 6 2 6-2 3-6zm13 22l0-5 12 0 0-35-10 8 0-6 10-7 6 0 0 40 11 0 0 5zm66-12l-2 7-2 2-7 3-9 0-4-1-5-4-2-7 1-6 3-4 5-2-4-2-4-6 0-5 4-6 6-2 8 0 4 1 5 4 2 6-1 5-3 3-4 2 2 1 4 3 2 2zm-7-22l-1-4-3-3-5-1-6 2-2 6 0 3 2 3 6 2 6-2 2-3zm1 21l-1-5-2-1-7-3-5 2-2 1-1 2-1 4 1 5 3 3 5 1 6-1 1-1 2-2zm11 0l0 4 29 0 0 14 4 0 0-14 23 0 0-4-23 0 0-13 18 0 0-4-18 0 0-9 20 0 0-5-37 0 3-6-5-1-3 8-5 7-5 6 4 3 9-12 15 0 0 9-18 0 0 17zm15 0l0-13 14 0 0 13zm78-9l-2 12-2 5-3 3-4 2-5 1-5-1-4-2-3-3-2-5-1-5 0-15 1-5 2-5 3-3 4-2 5-1 5 1 4 2 3 3 2 5zm-6 0l-1-11-3-6-6-2-6 2-3 6-1 11 1 10 3 6 6 2 5-2 4-6zm42 7l-2 9-5 5-4 1-9 1-3-1-6-4-2-6 6-1 2 4 3 2 4 1 5-1 4-4 1-5-1-5-4-4-2-1-6 0-5 3-6 0 2-24 25 0 0 5-20 0-1 14 3-1 6-2 8 2 5 5zm15-33l0 29-3 11-7 10 3 3 5-6 4-6 2-7 29 0 0 13-2 1-11 0 2 5 10 0 5-2 1-5 0-46zm5 5l28 0 0 10-28 0zm0 14l28 0 0 11-29 0zM5697 2231l-2 13-2 5-3 4-4 2-5 0-6-1-4-3-3-5 5-1 2 3 3 2 3 1 6-2 3-6 1-10-2 3-6 3-6 0-6-4-4-6 0-5 0-4 4-7 3-2 8-2 5 1 3 2 3 3 2 4zm-6-5l-1-6-3-5-3-1-2 0-5 1-3 4-1 5 1 6 3 4 2 1 4 0 5-2 2-4zm42-11l-11 20-4 12 0 8-6 0 1-12 2-6 3-7 10-15-25 0 0-5 30 0zm37 27l-1 4-3 6-7 3-9 0-4-1-5-5-2-7 1-5 3-4 5-2-4-2-4-6 1-5 3-6 6-2 8 0 4 1 5 4 2 6-1 5-3 3-4 2 4 2 2 2 2 4zm-7-21l-1-4-3-3-5 0-6 1-2 6 2 6 6 2 6-2 2-1zm1 21l-1-5-2-2-7-2-5 1-2 2-2 3 0 3 1 5 3 3 5 1 6-1 1-1 2-2zm41-27l-11 20-3 12-1 8-6 0 2-12 2-6 3-7 9-15-24 0 0-5 29 0zm9 40l0-5 11 0 0-35-10 8 0-6 10-7 6 0 0 40 11 0 0 5zm34 0l0-4 2-5 5-5 13-12 3-4 0-3-1-4-5-4-4 0-4 2-3 6-6-1 1-3 2-3 5-4 7-2 8 2 4 4 2 3 0 5-1 4-4 5-13 12-5 6 24 0 0 5zm36 0l0-4 3-5 4-5 13-12 3-4 0-3-1-4-5-4-4 0-4 2-3 6-6-1 1-3 2-3 5-4 7-2 8 2 4 4 2 3 0 5-1 4-4 5-13 12-5 6 24 0 0 5zm66-13l-1 7-6 5-3 1-5 0-8-1-5-4-2-7 5 0 2 4 3 3 5 1 7-3 2-3 0-3 0-2-2-4-5-1-7-1 0-5 9 0 3-3 1-4-1-4-3-3-7-1-5 3-1 4-6 0 3-6 2-3 6-2 8 0 4 1 4 4 2 6-1 5-3 4-5 2 5 2 3 1 2 5zm37-10l-2 13-2 4-3 4-4 2-5 0-5 0-3-2-3-4-4-10 0-14 3-10 3-3 4-2 5-1 5 1 4 2 3 3 2 5zm-6 0l-1-10-3-6-6-2-5 2-3 6-1 10 1 11 3 6 5 2 6-2 3-6zm13 23l0-5 12 0 0-35-10 8 0-6 10-7 5 0 0 40 11 0 0 5zm59-10l0 10-5 0 0-10-21 0 0-5 20-30 6 0 0 30 7 0 0 5zm-5-29l-16 24 16 0zm47 26l-2 7-5 5-4 1-4 0-8-1-5-4-3-7 6 0 2 4 3 3 5 1 7-3 2-3 0-3 0-2-3-4-5-1-6-1 0-5 8 0 4-3 1-4-1-4-3-3-7-1-5 3-1 4-6 0 2-6 2-3 7-2 8 0 3 1 5 4 2 6-1 5-4 4-5 2 6 2 2 1 3 5zm36-27l-12 20-3 12-1 8-6 0 2-12 2-6 3-7 9-15-24 0 0-5 30 0zM6360 2242l-1 7-6 5-3 1-5 0-8-1-5-4-3-7 6 0 2 4 3 3 5 1 7-3 2-3 0-3 0-2-2-4-5-1-7-1 0-5 9 0 3-3 1-4-1-4-3-3-7-1-5 3-1 4-6 0 3-6 2-3 6-2 8 0 4 1 4 4 2 6-1 5-3 4-5 2 5 2 3 1 2 5zm36 0l-1 7-5 5-4 1-5 0-8-1-5-4-2-7 6 0 1 4 3 3 5 1 7-3 2-3 1-3-1-2-2-4-5-1-7-1 0-5 9 0 3-3 1-4-1-4-2-3-7-1-5 3-2 4-6 0 3-6 2-3 6-2 8 0 4 1 5 4 1 6-1 5-3 4-5 2 6 2 2 1 2 5zM1874 2312l-5 14-4 5 3 4 7-10 23 0 0-5-22 0 3-7zm-3 20l0 9-5 3 2 4 3-2 1 19 2 2 5 1 13 0 4-1 2-3 1-6-4-1-1 6-15 1-3-1 0-19 5-3 0 17 4 0 0-19 7-3 0 14-1 1-4 0 1 4 6-1 1-3 1-19-3-1-8 4 0-8-4 0 0 10-5 2 0-7zm-19-19l3 9-12 0 0 4 6 0 0 15-2 14-5 10 3 3 5-8 2-10 1-11 8 0-1 21-1 3-1 1-7-1 1 5 7 0 2-1 3-5 1-27-12 0 1-9 13 0 0-4-12 0 4-1-2-6-1-3zm52 46l0 4 55 0 0-4-25 0 0-35 22 0 0-5-49 0 0 5 22 0 0 35zm61 1l1 4 20-5 0-4zm26-45l0 48-6 0 0 4 35 0 0-4-5 0 0-48zm5 48l0-12 15 0 0 12zm0-28l15 0 0 11-15 0zm0-4l0-12 15 0 0 12zm-30 6l11-2-7 9-5 4 1 4 20-5 1-3-14 2 14-19-3-2-4 6-9 1 10-18-4-2-6 14-4 5-2 2zm59 23l1 4 22-5-1-4zm29-39l19 0 0 18-19 0zm-4-5l0 27 27 0 0-27zm18 35l8 17 5-2-9-17zm-14-2l-5 12-4 4 4 3 4-5 6-13zm-27-11l10-2-8 10-3 2 1 4 20-4 0-4-13 2 13-19-3-2-4 7-9 1 11-19-5-2-6 14-4 5-2 2zM2650 2317l0 4 11 0 0 4-15 0 0 4 15 0 0 5-11 0 0 3 11 0 0 5-12 0 0 4 12 0 0 4-14 0 0 4 14 0 0 6 5 0 0-6 17 0 0-4-17 0 0-4 15 0 0-4-15 0 0-5 13 0 0-8 5 0 0-4-5 0 0-8-13 0 0-5-5 0 0 5zm16 12l9 0 0 5-9 0zm0-4l0-4 9 0 0 4zm-34 14l2-2 8 0-4 14-4-9-3 2 5 11-2 4-6 6 4 3 7-9 8 5 8 2 28 1 2-5-29 0-8-2-7-5 4-13 1-8-8-1 9-16-3-2-14 1 0 4 10 0-6 12-4 3zm88 6l9 11 4-3-10-10zm-30 10l0 5 23-5-1-4-8 2 0-16 8 0 0-4-21 0 0 4 8 0 0 16zm25-23l0 20-4 7-7 6 3 3 8-7 4-7 1-18 13 0 1 29 3 2 5 0 3-1 1-2 0-5-3-2-1 5-4 1 0-1 0-30zm-15-20l-7 12-4 5 4 3 7-10 3 0 4 9 4-1-3-8 9 0 0-4-15 0 2-5zm23 0l-5 12-3 5 4 2 5-9 4 0 6 9 4-2-5-7 11 0 0-4-18 0 2-5zm59 0l-5 14-4 5 3 4 7-10 23 0 0-5-22 0 3-7zm-3 20l0 9-5 3 2 4 3-2 1 19 2 2 5 1 13 0 4-1 2-3 1-6-4-1-1 6-15 1-3-1 0-19 5-3 0 17 4 0 0-19 7-3 0 14-1 1-4 0 1 4 6-1 1-3 1-19-3-1-8 4 0-8-4 0 0 10-5 2 0-7zm-19-19l3 9-12 0 0 4 6 0 0 15-2 14-5 10 3 3 5-8 2-10 1-11 8 0-1 21-1 3-1 1-7-1 1 5 7 0 2-1 3-5 1-27-12 0 1-9 13 0 0-4-12 0 4-1-2-6-1-3zm52 46l0 4 55 0 0-4-25 0 0-35 22 0 0-5-49 0 0 5 22 0 0 35zm61 1l1 4 20-5 0-4zm26-45l0 48-6 0 0 4 35 0 0-4-5 0 0-48zm5 48l0-12 15 0 0 12zm0-28l15 0 0 11-15 0zm0-4l0-12 15 0 0 12zm-30 6l11-2-7 9-5 4 1 4 20-5 1-3-14 2 14-19-3-2-4 6-9 1 10-18-4-2-6 14-4 5-2 2zm59 23l1 4 22-5-1-4zm29-39l19 0 0 18-19 0zm-4-5l0 27 27 0 0-27zm18 35l8 17 5-2-9-17zm-14-2l-5 12-4 4 4 3 4-5 6-13zm-27-11l10-2-8 10-3 2 1 4 20-4 0-4-13 2 13-19-3-2-4 7-9 1 11-19-5-2-6 14-4 5-2 2zm94-26l0 10-14 0 0 4 14 0 0 9-13 0 0 4 2 0 3 7 7 10-5 3-11 5 2 4 12-5 6-4 10 7 6 2 3-4-6-2-10-6 5-5 4-7 3-8-2-1-11 0 0-9 15 0 0-4-15 0 0-10zm-6 27l19 0-3 5-7 9-4-4zm-20-27l0 12-8 0 0 5 8 0 0 13-9 2 2 5 7-2 0 16-8 1 2 4 6 0 3-2 1-3 0-18 8-2-1-4-7 2 0-12 7 0 0-5-7 0 0-12zm87 4l11 9 3-3-11-9zm-9-4l0 15-24 0 0 5 23 0-7 10-8 9-10 6 4 4 8-6 8-8 6-9 0 30 5 0 0-31 14 17 8 7 4-4-9-7-8-9-7-9 22 0 0-5-24 0 0-15zM3419 2312l0 12-8 0 0 4 8 0-6 17-3 6 2 5 7-17 0 29 4 0 0-33 5 9 3-3-8-12 0-1 8 0 0-4-8 0 0-12zm14 25l9-1-4 6-4 6-6 4 4 3 5-5 5-7 4-7 7 0-6 12-7 10-9 7 3 3 10-8 7-11 6-13 4 0-1 14-2 9-1 4-1 0-7 0 1 4 7 0 3-1 3-5 3-29-25 0 19-15-3-3-26 1 0 4 20 0-13 10-7 3zm53 1l0 14-9 0 0-14zm0-4l-9 0 0-14 9 0zm-12-18l0 45 3 0 0-5 13 0 0-40zm46 8l-10 7-3-8 18-1 0-4-19 2-1-8-4 0 1 8-10 1 1 4 10-1 4 9-15 4 2 4 15-5 7 5 4 1 3 0 2-3 1-5-3-2-1 6-1 0-3 0-5-4 8-6 3-3zm-29 21l0 4 10 0-1 7-4 5-7 3 3 4 8-4 4-7 2-8 5 0 0 13 1 3 2 2 9 0 2-1 2-2 1-5-4-2-1 6-6 0-1-1 0-13 11 0 0-4zm51-15l0 3 13 0 0-3zm-2 7l0 3 15 0 0-3zm26 0l0 3 15 0 0-3zm0-7l0 3 13 0 0-3zm-31-8l0 14 4 0 0-10 19 0 0 16 5 0 0-16 19 0 0 10 4 0 0-14-23 0 0-4 20 0 0-4-45 0 0 4 20 0 0 4zm23 35l0 5-14 0 0-5zm5 0l14 0 0 5-14 0zm-5-4l-14 0 0-5 14 0zm5 0l0-5 14 0 0 5zm-23-9l0 24 4 0 0-2 33 0 0 2 4 0 0-24zm74-29l10 9-27 0 0 5 22 0 0 13-19 0 0 4 19 0 0 16-25 0 0 4 55 0 0-4-25 0 0-16 19 0 0-4-19 0 0-13 22 0 0-5-20 0 3-2-7-7-4-3zm40 45l2 4 17-7-1-4zm2-23l9-1-8 10-2 2 1 4 17-4-1-4-10 2 12-19-4-2-3 7-7 0 10-19-5-1-5 14-6 7zm34 5l0 9-5 0 0-9zm3 0l5 0 0 9-5 0zm-12-4l0 30 4 0 0-14 5 0 0 12 3 0 0-12 5 0 0 12 3 0 0-12 4 0 0 10-3 0 1 4 3-1 2-1 1-28zm20 4l4 0 0 9-4 0zm-12-29l3 6-15 0 0 23-2 12-4 10 4 3 4-11 2-12 0-11 27 0 0-14-12 0-3-7zm-8 9l23 0 0 7-23 0zM4074 2356l2 4 16-6 0 14 4 0 0-55-4 0 0 14-16 0 0 5 16 0 0 17zm52-34l-15 11 0-20-5 0 0 45 1 5 2 3 15 1 4-2 3-5 0-8-4-3-1 12-3 1-9 0-2 0-1-1 0-23 19-12zm23 11l29 0 0 10-29 0zm26 20l11 13 4-2-11-13zm-28-2l-3 4-8 8 4 3 12-14zm11-38l4 7-25 0 0 4 53 0 0-4-23 0-4-9zm-14 16l0 18 17 0 0 16-10 1 1 4 11-1 3-2 0-18 17 0 0-18zm79 1l9 0 0 8-9 0zm13 0l10 0 0 8-10 0zm-13-11l9 0 0 8-9 0zm13 0l10 0 0 8-10 0zm-23 43l0 4 40 0 0-4-16 0 0-9 14 0 0-4-14 0 0-7 13 0 0-27-31 0 0 27 13 0 0 7-14 0 0 4 14 0 0 9zm-17-5l1 5 19-7-1-4-6 2 0-15 6 0 0-4-6 0 0-14 7 0 0-4-19 0 0 4 7 0 0 14-7 0 0 4 7 0 0 17zm62 2l0 4 55 0 0-4-25 0 0-35 22 0 0-5-49 0 0 5 22 0 0 35zm86-47l-1 17-23 0 0 5 22 0-3 12-8 10-12 8 3 4 12-8 8-11 5-11 5 12 8 11 11 7 3-4-10-7-8-10-6-13 23 0 0-5-25 0 1-17zm61 30l0 4-24 0 0 5 24 0 0 12-12 1 2 4 9 0 4-2 2-4 0-11 25 0 0-5-25 0 0-2 10-6 5-3-3-3-31 1 0 4 25 0zm-2-29l5 9-14 0 2-1-6-8-3 1 5 8-10 0 0 12 4 0 0-8 43 0 0 8 5 0 0-12-10 0 6-8-5-2-6 10-10 0 3-1-3-6-2-4zm41 29l0 22 44 0 0 4 5 0 0-26-5 0 0 18-17 0 0-21 19 0 0-22-5 0 0 17-14 0 0-22-5 0 0 22-14 0 0-17-5 0 0 22 19 0 0 21-17 0 0-18zm61-29l0 34-1 10-3 8 3 3 3-7 2-15 9 0 0 22 4 0 0-26-12 0 0-9 16 0 0-4-6 0 0-17-4 0 0 17-6 0 0-16zm46 21l-2 7-5 11-2-6-4-12zm-23-18l0 31-1 10-4 9 4 2 4-9 1-11 1-14 1 0 5 15 3 6-4 4-8 5 3 4 8-5 3-4 7 7 4 2 3-3-4-3-7-6 4-7 3-9 2-10-3 0-20 0 0-10 24-4-3-4zm42-2l5 8 4-2-6-8zm-7 8l0 5 16 0-4 7-7 7-6 5 2 4 8-7 0 25 5 0 0-26 6 7 3-4-9-8 8-13-2-2zm37-10l0 19-14 0 0 4 14 0 0 26-17 0 0 5 36 0 0-5-15 0 0-26 13 0 0-4-13 0 0-19zM4868 2363l0-4 3-5 5-5 12-11 3-5 1-3-1-4-5-4-5 0-4 2-3 6-5-1 0-3 2-3 5-4 7-2 8 2 5 4 1 3 0 5-1 4-3 5-14 12-4 6 23 0 0 5zm68-22l-2 12-2 5-3 3-4 2-5 1-5-1-4-2-3-3-2-5-1-5 0-15 1-5 2-5 3-3 4-2 5-1 5 1 4 2 3 3 2 5zm-6 0l-1-11-3-6-6-2-6 2-3 6-1 11 1 10 3 6 6 2 6-2 3-6zm12 22l0-4 2-5 5-5 13-11 2-5 1-3-1-4-5-4-5 0-3 2-3 6-6-1 1-3 1-3 5-4 8-2 7 2 5 4 1 3 1 5-1 4-4 5-13 12-5 6 24 0 0 5zm67-22l-2 12-2 5-3 3-4 2-5 1-5-1-4-2-3-3-2-5-1-5 0-15 1-5 2-5 3-3 4-2 5-1 5 1 4 2 3 3 2 5zm-6 0l-1-11-3-6-6-2-5 2-4 6-1 11 1 10 4 6 5 2 6-2 3-6zm11 9l0 4 29 0 0 14 4 0 0-14 23 0 0-4-23 0 0-13 18 0 0-4-18 0 0-9 20 0 0-5-37 0 3-6-5-1-3 8-5 7-5 6 4 3 9-12 15 0 0 9-18 0 0 17zm15 0l0-13 14 0 0 13zm49 13l0-5 11 0 0-35-10 8 0-6 11-7 5 0 0 40 11 0 0 5zm35 0l0-4 2-5 5-5 13-11 2-5 1-3-1-4-5-4-5 0-3 2-3 6-6-1 1-3 1-3 5-4 8-2 7 2 5 4 1 3 1 5-1 4-4 5-13 12-5 6 24 0 0 5zm45-48l0 29-3 11-7 10 3 3 5-6 4-6 2-7 29 0 0 13-2 1-11 0 2 5 10 0 5-2 1-5 0-46zm5 5l28 0 0 10-28 0zm0 14l28 0 0 11-29 0zM5697 2341l-2 13-2 5-3 4-4 2-5 0-6-1-4-3-3-5 5-1 2 3 3 2 3 1 6-2 3-6 1-10-2 3-6 3-6 0-6-4-4-6 0-5 0-4 4-7 3-2 8-2 5 1 3 2 3 3 2 4zm-6-5l-1-6-3-5-3-1-2 0-5 1-3 4-1 5 1 6 3 4 2 1 4 0 5-2 2-4zm42-11l-11 20-4 12 0 8-6 0 1-12 2-6 3-7 10-15-25 0 0-5 30 0zm37 27l-1 4-3 6-7 3-9 0-4-1-5-5-2-7 1-5 3-4 5-2-4-2-4-6 1-5 3-6 6-2 8 0 4 1 5 4 2 6-1 5-3 3-4 2 4 2 2 2 2 4zm-7-21l-1-4-3-3-5 0-6 1-2 6 2 6 6 2 6-2 2-1zm1 21l-1-5-2-2-7-2-5 1-2 2-2 3 0 3 1 5 3 3 5 1 6-1 1-1 2-2zm41-27l-11 20-3 12-1 8-6 0 2-12 2-6 3-7 9-15-24 0 0-5 29 0zm37 25l-2 8-5 6-4 1-9 0-3-1-5-3-3-6 6-1 2 4 3 2 4 1 6-2 3-3 1-6-1-5-3-3-3-1-6 0-5 3-5 0 1-24 25 0 0 5-20 0-1 14 3-2 7-1 7 2 5 5zm36 0l-2 8-5 6-3 1-9 0-4-2-3-3-2-5-2-5 1-14 1-6 2-4 3-4 4-2 5-1 6 1 4 3 3 5-6 1-1-3-3-1-3-1-6 2-3 6-1 10 2-4 4-2 8 0 4 2 4 5zm-6 0l-1-5-1-2-4-3-7 1-4 3 0 2 0 9 4 4 2 1 5 0 4-2 1-2zm42 2l0 4-4 6-6 3-9 0-4-1-5-5-2-7 1-5 3-4 5-2-5-2-3-6 0-5 4-6 6-2 8 0 3 1 5 4 2 6-1 5-3 3-4 2 5 2 2 2 2 4zm-7-21l-1-4-3-3-4 0-6 1-2 6 2 6 6 2 6-2 1-1zm1 21l-1-5-1-2-7-2-5 1-2 2-2 3 0 3 1 5 3 3 5 1 5-1 2-1 1-2zm12 13l0-4 3-5 4-5 13-12 3-4 0-3-1-4-4-4-5 0-4 2-3 6-5-1 0-3 2-3 5-4 7-2 8 2 5 4 1 3 0 5-1 4-3 5-14 12-4 6 23 0 0 5zm66-24l-2 13-2 5-3 4-4 2-5 0-6-1-4-3-3-5 6-1 1 3 3 2 3 1 6-2 3-6 2-10-3 3-6 3-6 0-6-4-3-6-1-5 1-4 3-7 3-2 8-2 5 1 3 2 3 3 3 4zm-6-5l-1-6-3-5-2-1-3 0-5 1-3 4-1 5 1 6 3 4 2 1 4 0 5-2 3-4zm43 16l-2 7-5 5-4 1-5 0-7-1-6-4-2-7 6 0 1 4 4 3 4 1 7-3 2-3 1-3-1-2-2-4-5-1-6-1 0-5 8 0 3-3 2-4-1-4-3-3-7-1-5 3-2 4-5 0 2-6 2-3 6-2 8 0 4 1 5 4 1 6-1 5-3 4-5 2 6 2 2 1 2 5zm6 13l0-4 2-5 5-5 13-12 2-4 1-3-1-4-5-4-5 0-3 2-3 6-6-1 1-3 1-3 5-4 8-2 7 2 5 4 1 3 1 5-2 4-3 5-13 12-5 6 23 0 0 5zm66-15l-2 8-5 6-3 1-9 0-4-2-3-3-2-5-2-5 0-14 2-6 2-4 3-4 4-2 5-1 6 1 4 3 3 5-6 1-1-3-3-1-3-1-6 2-3 6-1 10 2-4 4-2 8 0 4 2 4 5zm-6 0l-1-5-1-2-4-3-8 1-3 3-1 2 1 9 4 4 2 1 5 0 4-2 1-2zm42 0l-2 8-5 6-3 1-9 0-4-2-3-3-2-5-1-5 0-14 1-6 2-4 3-4 4-2 5-1 6 1 4 3 3 5-6 1-1-3-3-1-3-1-6 2-3 6-1 10 2-4 4-2 8 0 4 2 4 5zm-6 0l-1-5-1-2-4-3-7 1-4 3 0 2 0 9 4 4 2 1 5 0 4-2 1-2zM6360 2352l-1 7-6 5-3 1-5 0-8-1-5-4-3-7 6 0 2 4 3 3 5 1 7-3 2-3 0-3 0-2-2-4-5-1-7-1 0-5 9 0 3-3 1-4-1-4-3-3-7-1-5 3-1 4-6 0 3-6 2-3 6-2 8 0 4 1 4 4 2 6-1 5-3 4-5 2 5 2 3 1 2 5zm36 0l-1 7-5 5-4 1-5 0-8-1-5-4-2-7 6 0 1 4 3 3 5 1 7-3 2-3 1-3-1-2-2-4-5-1-7-1 0-5 9 0 3-3 1-4-1-4-2-3-7-1-5 3-2 4-6 0 3-6 2-3 6-2 8 0 4 1 5 4 1 6-1 5-3 4-5 2 6 2 2 1 2 5zM1874 2422l-5 14-4 5 3 4 7-10 23 0 0-5-22 0 3-7zm-3 20l0 9-5 3 2 4 3-2 1 19 2 2 5 1 13 0 4-1 2-3 1-6-4-1-1 6-15 1-3-1 0-19 5-3 0 17 4 0 0-19 7-3 0 14-1 1-4 0 1 4 6-1 1-3 1-19-3-1-8 4 0-8-4 0 0 10-5 2 0-7zm-19-19l3 9-12 0 0 4 6 0 0 15-2 14-5 10 3 3 5-8 2-10 1-11 8 0-1 21-1 3-1 1-7-1 1 5 7 0 2-1 3-5 1-27-12 0 1-9 13 0 0-4-12 0 4-1-2-6-1-3zm52 46l0 4 55 0 0-4-25 0 0-35 22 0 0-5-49 0 0 5 22 0 0 35zm81-13l14 5 2-3-14-5zm-6 8l25 5 2-3-25-5zm-12-39l0 53 5 0 0-3 41 0 0 3 5 0 0-53zm5 46l0-42 41 0 0 42zm15-41l-3 5-10 8 3 3 6-5 6 6-16 5 2 4 18-7 17 6 2-3-15-5 8-7 3-4-3-1-16 0 2-4zm-2 9l16-1-8 7zm69-8l19 0 0 18-19 0zm-4-5l0 27 27 0 0-27zm18 35l8 17 5-2-9-17zm-14-2l-5 12-4 4 4 3 4-5 6-13zm-25-33l10 10 3-4-10-8zm-3 15l0 4 9 0 0 22-1 3-3 3 3 3 13-11-1-3-7 4 0-25zm85 5l9 6 2-3-9-6zm-4 5l9 7 2-3-9-6zm19 16l14 11 2-3-14-11zm-36-41l10 10 3-4-10-9zm16 11l0 4 30 0-3 7 4 1 4-11-3-1-12 0 0-5 13 0 0-4-13 0 0-6-5 0 0 6-12 0 0 4 12 0 0 5zm17 6l-1 15-17 0 0 4 16 0-4 5-5 4-8 4 3 3 9-5 6-5 4-6 16 0 0-4-15 0 0-15zm-37-2l0 4 9 0 0 23 0 2-2 4 2 3 12-11-2-4-5 5 0-26zM2660 2422l-5 14-4 5 3 4 7-10 23 0 0-5-22 0 3-7zm-3 20l0 9-5 3 2 4 3-2 1 19 2 2 5 1 13 0 4-1 2-3 1-6-4-1-1 6-15 1-3-1 0-19 5-3 0 17 4 0 0-19 7-3 0 14-1 1-4 0 1 4 6-1 1-3 1-19-3-1-8 4 0-8-4 0 0 10-5 2 0-7zm-19-19l3 9-12 0 0 4 6 0 0 15-2 14-5 10 3 3 5-8 2-10 1-11 8 0-1 21-1 3-1 1-7-1 1 5 7 0 2-1 3-5 1-27-12 0 1-9 13 0 0-4-12 0 4-1-2-6-1-3zm52 46l0 4 55 0 0-4-25 0 0-35 22 0 0-5-49 0 0 5 22 0 0 35zm81-13l14 5 2-3-14-5zm-6 8l25 5 2-3-25-5zm-12-39l0 53 5 0 0-3 41 0 0 3 5 0 0-53zm5 46l0-42 41 0 0 42zm15-41l-3 5-10 8 3 3 6-5 6 6-16 5 2 4 18-7 17 6 2-3-15-5 8-7 3-4-3-1-16 0 2-4zm-2 9l16-1-8 7zm69-8l19 0 0 18-19 0zm-4-5l0 27 27 0 0-27zm18 35l8 17 5-2-9-17zm-14-2l-5 12-4 4 4 3 4-5 6-13zm-25-33l10 10 3-4-10-8zm-3 15l0 4 9 0 0 22-1 3-3 3 3 3 13-11-1-3-7 4 0-25zm85 5l9 6 2-3-9-6zm-4 5l9 7 2-3-9-6zm19 16l14 11 2-3-14-11zm-36-41l10 10 3-4-10-9zm16 11l0 4 30 0-3 7 4 1 4-11-3-1-12 0 0-5 13 0 0-4-13 0 0-6-5 0 0 6-12 0 0 4 12 0 0 5zm17 6l-1 15-17 0 0 4 16 0-4 5-5 4-8 4 3 3 9-5 6-5 4-6 16 0 0-4-15 0 0-15zm-37-2l0 4 9 0 0 23 0 2-2 4 2 3 12-11-2-4-5 5 0-26zm101 9l2 11 4 10 7 8 3-2-6-8-4-9-1-10 1-10 4-9 6-8-3-2-7 8-4 10zm29-1l-2 13 16 0-6 5-14 8 3 3 15-8 6-6 0 14 4 0 0-16 18 0-2 9-9 0 1 4 9 0 3-1 1-2 2-14-23 0 0-5 21 0 0-14-45 0 0 4 20 0 0 6zm4 4l14 0 0 5-15 0zm18-10l16 0 0 6-16 0zm-19-21l-6 10-4 5 4 2 6-8 4 0 3 7 4-1-3-6 10 0 0-4-16 0 2-4zm23 0l-4 10-4 4 4 3 6-8 4 0 5 7 4-2-4-5 11 0 0-4-19 0 2-4zm28 25l0 5 56 0 0-5zm64-24l0 34-1 10-3 8 3 3 3-7 2-15 9 0 0 22 4 0 0-26-12 0 0-9 16 0 0-4-6 0 0-17-4 0 0 17-6 0 0-16zm46 21l-2 7-5 11-2-6-4-12zm-23-18l0 31-1 10-4 9 4 2 4-9 1-11 1-14 1 0 5 15 3 6-4 4-8 5 3 4 8-5 3-4 7 7 4 2 3-3-4-3-7-6 4-7 3-9 2-10-3 0-20 0 0-10 24-4-3-4zm51 24l-2-11-4-10-7-8-3 2 6 8 4 9 1 10-1 10-4 9-6 8 3 2 7-8 4-10zM3423 2442l31 0 0 3-31 0zm0 6l31 0 0 4-31 0zm0-13l31 0 0 4-31 0zm-4-3l0 23 10 0-10 7-8 3 3 3 11-5 9 7-8 2-16 2 2 4 18-3 9-3 7 3 18 3 3-4-16-2-7-2 9-6 4-4-3-2-22 0 3-3 24 0 0-23-20 0 2-3 23 0 0-4-51 0 0 4 23 0-1 3zm20 36l-10-7 21 0zm65-27l6 8 3-3-6-7zm4-19l-4 8-6 7-8 7 4 3 5-5 10-12 10 12 6 5 3-4-6-4-6-7-5-6 1-3zm-12 28l0 5 21 0-10 12-6-4-3 2 15 13 4-3-7-5 13-18-3-2zm-25 17l1 4 19-6-1-4-7 2 0-15 6 0 0-4-6 0 0-14 8 0 0-4-19 0 0 4 7 0 0 14-7 0 0 4 7 0 0 16zm91-4l7 8 3-2-6-9zm-26-37l10 6 3-3-11-6zm-3 17l10 6 3-3-11-7zm1 31l4 3 3-6 8-13-4-3zm31-52l-1 6-13 0 0 4 13 0-1 5-10 0 0 4 9 0-1 5-12 0 0 4 11 0-3 8-5 7-5 6 4 3 4-4 6-11 17 0 0 14-9 1 1 4 10-1 2-2 0-16 6 0 0-4-6 0 0-4-4 0 0 4-15 0 2-5 24 0 0-4-23 0 1-5 19 0 0-4-18 0 0-5 19 0 0-4-18 0 1-6zm43 55l4-4-14-13-4 3zm46-14l1 4 22-4 0-4zm25-35l-8 0 2-6-4 0-2 6-8 0 0 27 21 0-2 17-9 0 1 4 8 0 4-1 2-11 1-14-22 0 0-18 16 0-2 10-7 0 1 4 7 0 2-1 2-3 1-12 0-2zm10-3l0 53 5 0 0-48 11 0-8 16 5 5 3 5 1 6-3 3-7 1 1 4 6 0 4-2 3-4-1-8-2-5-6-5 10-19-3-2zm40 18l29 0 0 10-29 0zm26 20l11 13 4-2-11-13zm-28-2l-3 4-8 8 4 3 12-14zm11-38l4 7-25 0 0 4 53 0 0-4-23 0-4-9zm-14 16l0 18 17 0 0 16-10 1 1 4 11-1 3-2 0-18 17 0 0-18zm79-11l0 4 12 0 0 39-11 0-4-12-4 1 2 5-6 2 0-12 9 0 0-22-9 0 0-11-4 0 0 11-9 0 0 25 3 0 0-3 6 0 0 12-11 2 0 5 22-5 1 4 2-1 0 3 31 0 0-4-13 0 0-39 12 0 0-4zm-21 9l6 0 0 14-6 0zm10 0l5 0 0 14-5 0zM4089 2439l27 0 0 6-27 0zm-4-3l0 12 36 0 0-12zm14-13l2 5-25 0 0 4 53 0 0-4-23 0-3-6zm-21 28l0 27 4 0 0-23 41 0 0 19-8 0 2 4 8-1 2-2 0-24zm11 8l0 15 4 0 0-3 22 0 0-12zm4 3l18 0 0 6-18 0zm75-40l-2 5-7 8 2 1 0 4-19 0 0 4 19 0 0 5-25 0 0 4 38 0 0 6-36 0 0 4 36 0-1 10-10 1 2 4 8 0 4-2 1-3 0-10 12 0 0-4-12 0 0-6 13 0 0-4-25 0 0-5 20 0 0-4-20 0 0-4-1 0 4-5 4 0 4 7 4-1-3-6 13 0 0-4-20 0 2-4zm-21 43l10 10 4-3-11-9zm-3-43l-5 10-4 4 4 3 6-8 2 0 3 7 4-2-2-5 11 0 0-4-16 0 2-4zm88 0l-5 19-4 7-2-1-7 0 3-5 9 0 0-4-6 0 7-13-4-2-8 15-4 0 0-6 8 0 0-4-8 0 0-6-4 0 0 6-8 0 0 4 8 0 0 6-11 0 0 4 16 0-5 5-5 0 0 4 1 0-7 4 3 3 11-7 6 0-7 5 0 5-13 1 1 4 12-1 0 9-7 0 1 4 7 0 3-2 1-3 0-9 12-1 0-4-12 1 0-3 9-8 3 3 4-7 6 17-9 9-6 3 3 4 6-3 8-9 7 9 5 3 3-4-5-3-7-9 3-7 5-17 4 0 0-5-18 0 2-10zm1 16l11 0-3 13-2 6zm67 13l0 5-28 0 0-5zm-33-4l0 31 5 0 0-10 28 0-1 6-11 0 1 4 10 0 4-1 1-4 0-26zm5 12l28 0 0 5-28 0zm9-36l3 5-25 0 0 4 16 0-7 6-4 2 1 5 36-3 5 4 4-2-14-12 16 0 0-4-22 0-4-6zm11 11l5 4-25 2 10-8 12 0zm30 18l0 22 44 0 0 4 5 0 0-26-5 0 0 18-17 0 0-21 19 0 0-22-5 0 0 17-14 0 0-22-5 0 0 22-14 0 0-17-5 0 0 22 19 0 0 21-17 0 0-18zm61-29l0 34-1 10-3 8 3 3 3-7 2-15 9 0 0 22 4 0 0-26-12 0 0-9 16 0 0-4-6 0 0-17-4 0 0 17-6 0 0-16zm46 21l-2 7-5 11-2-6-4-12zm-23-18l0 31-1 10-4 9 4 2 4-9 1-11 1-14 1 0 5 15 3 6-4 4-8 5 3 4 8-5 3-4 7 7 4 2 3-3-4-3-7-6 4-7 3-9 2-10-3 0-20 0 0-10 24-4-3-4zm42-2l5 8 4-2-6-8zm-7 8l0 5 16 0-4 7-7 7-6 5 2 4 8-7 0 25 5 0 0-26 6 7 3-4-9-8 8-13-2-2zm37-10l0 19-14 0 0 4 14 0 0 26-17 0 0 5 36 0 0-5-15 0 0-26 13 0 0-4-13 0 0-19zM4868 2473l0-4 3-5 5-5 12-11 3-5 1-3-1-4-5-4-5 0-4 2-3 6-5-1 0-3 2-3 5-4 7-2 8 2 5 4 1 3 0 5-1 4-3 5-14 12-4 6 23 0 0 5zm68-22l-2 12-2 5-3 3-4 2-5 1-5-1-4-2-3-3-2-5-1-5 0-15 1-5 2-5 3-3 4-2 5-1 5 1 4 2 3 3 2 5zm-6 0l-1-11-3-6-6-2-6 2-3 6-1 11 1 10 3 6 6 2 6-2 3-6zm13 22l0-5 12 0 0-35-10 8 0-6 10-7 6 0 0 40 11 0 0 5zm65-40l-11 20-4 12 0 8-6 0 0-6 3-12 7-14 6-8-25 0 0-5 30 0zm6 27l0 4 29 0 0 14 4 0 0-14 23 0 0-4-23 0 0-13 18 0 0-4-18 0 0-9 20 0 0-5-37 0 3-6-5-1-3 8-5 7-5 6 4 3 9-12 15 0 0 9-18 0 0 17zm15 0l0-13 14 0 0 13zm78-9l-2 12-2 5-3 3-4 2-5 1-5-1-4-2-3-3-2-5-1-5 0-15 1-5 2-5 3-3 4-2 5-1 5 1 4 2 3 3 2 5zm-6 0l-1-11-3-6-6-2-6 2-3 6-1 11 1 10 3 6 6 2 5-2 4-6zm42-1l-2 13-3 5-3 3-4 2-5 1-6-1-4-3-3-6 6-1 1 4 3 2 3 0 6-2 4-6 1-10-3 4-6 3-6-1-6-3-3-7-1-5 2-8 2-3 7-3 4-1 5 1 4 2 3 3 2 4zm-7-6l-1-6-3-5-2-1-3 0-5 1-3 4-1 5 1 6 3 4 3 1 4 0 4-2 3-4zm22-19l0 29-3 11-7 10 3 3 5-6 4-6 2-7 29 0 0 13-2 1-11 0 2 5 10 0 5-2 1-5 0-46zm5 5l28 0 0 10-28 0zm0 14l28 0 0 11-29 0zM5697 2451l-2 13-2 5-3 4-4 2-5 0-6-1-4-3-3-5 5-1 2 3 3 2 3 1 6-2 3-6 1-10-2 3-6 3-6 0-6-4-4-6 0-5 0-4 4-7 3-2 8-2 5 1 3 2 3 3 2 4zm-6-5l-1-6-3-5-3-1-2 0-5 1-3 4-1 5 1 6 3 4 2 1 4 0 5-2 2-4zm42-11l-11 20-4 12 0 8-6 0 1-12 2-6 3-7 10-15-25 0 0-5 30 0zm37 27l-1 4-3 6-7 3-9 0-4-1-5-5-2-7 1-5 3-4 5-2-4-2-4-6 1-5 3-6 6-2 8 0 4 1 5 4 2 6-1 5-3 3-4 2 4 2 2 2 2 4zm-7-21l-1-4-3-3-5 0-6 1-2 6 2 6 6 2 6-2 2-1zm1 21l-1-5-2-2-7-2-5 1-2 2-2 3 0 3 1 5 3 3 5 1 6-1 1-1 2-2zm41-27l-11 20-3 12-1 8-6 0 2-12 2-6 3-7 9-15-24 0 0-5 29 0zm37 17l-2 13-2 4-3 4-4 2-4 0-5 0-4-2-3-4-3-10 0-14 3-10 3-3 4-2 5-1 5 1 3 2 3 3 3 5zm-6 0l-1-10-3-6-5-2-6 2-3 6-1 10 1 11 3 6 6 2 5-2 3-6zm37 13l0 10-6 0 0-10-21 0 0-5 21-30 6 0 0 30 6 0 0 5zm-6-29l-15 24 15 0zm48 16l-2 13-2 4-3 4-4 2-5 0-5 0-4-2-3-4-3-10 0-14 3-10 3-3 4-2 5-1 5 1 4 2 3 3 2 5zm-6 0l-1-10-3-6-6-2-6 2-3 6-1 10 1 11 3 6 6 2 5-2 4-6zm36 13l0 10-5 0 0-10-21 0 0-5 20-30 6 0 0 30 6 0 0 5zm-5-29l-16 24 16 0zm46 24l-1 8-5 6-4 1-9 0-3-2-4-3-2-5-1-5 0-14 1-6 3-4 3-4 4-2 4-1 6 1 5 3 2 5-5 1-2-3-2-1-4-1-5 2-4 6-1 10 3-4 4-2 8 0 3 2 5 5zm-5 0l-1-5-2-2-4-3-7 1-3 3-1 2 1 9 3 4 2 1 5 0 4-2 2-2zm41-25l-11 20-3 12-1 8-6 0 2-12 2-6 3-7 9-15-24 0 0-5 29 0zm37 27l-1 4-3 6-7 3-9 0-4-1-5-5-2-7 1-5 4-4 4-2-4-2-3-6 0-5 3-6 6-2 9 0 3 1 5 4 2 6-1 5-3 3-4 2 5 2 1 2 3 4zm-7-21l-1-4-3-3-5 0-6 1-2 6 2 6 7 2 6-2 1-1zm1 21l-1-5-2-2-7-2-4 1-2 2-3 3 0 3 1 5 3 3 6 1 5-1 2-1 1-2zm42 0l-2 7-5 5-4 1-4 0-8-1-5-4-3-7 6 0 2 4 3 3 5 1 7-3 2-3 0-3 0-2-3-4-5-1-6-1 0-5 8 0 4-3 1-4-1-4-3-3-7-1-5 3-1 4-6 0 2-6 2-3 7-2 8 0 3 1 5 4 2 6-1 5-4 4-5 2 6 2 2 1 3 5zm36 0l-2 7-5 5-4 1-4 0-8-1-5-4-3-7 6 0 2 4 3 3 5 1 7-3 2-3 0-3 0-2-3-4-5-1-6-1 0-5 8 0 4-3 1-4-1-4-3-3-7-1-5 3-1 4-6 0 2-6 3-3 6-2 8 0 3 1 5 4 2 6-1 5-3 4-6 2 6 2 2 1 3 5zM6360 2462l-1 7-6 5-3 1-5 0-8-1-5-4-3-7 6 0 2 4 3 3 5 1 7-3 2-3 0-3 0-2-2-4-5-1-7-1 0-5 9 0 3-3 1-4-1-4-3-3-7-1-5 3-1 4-6 0 3-6 2-3 6-2 8 0 4 1 4 4 2 6-1 5-3 4-5 2 5 2 3 1 2 5zm36 0l-1 7-5 5-4 1-5 0-8-1-5-4-2-7 6 0 1 4 3 3 5 1 7-3 2-3 1-3-1-2-2-4-5-1-7-1 0-5 9 0 3-3 1-4-1-4-2-3-7-1-5 3-2 4-6 0 3-6 2-3 6-2 8 0 4 1 5 4 1 6-1 5-3 4-5 2 6 2 2 1 2 5z"/>
</svg>
</body></html>
